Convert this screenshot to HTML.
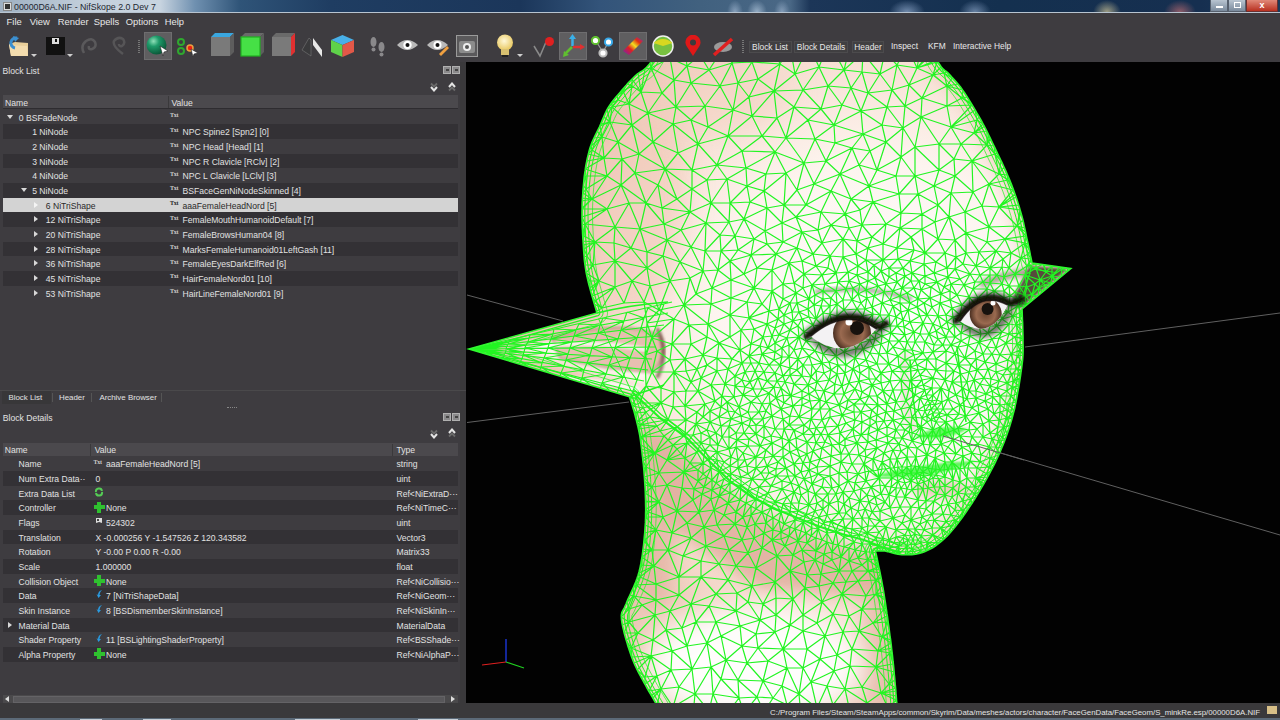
<!DOCTYPE html>
<html><head><meta charset="utf-8"><style>
*{margin:0;padding:0;box-sizing:border-box}
html,body{width:1280px;height:720px;overflow:hidden;background:#3e3c40;font-family:"Liberation Sans",sans-serif;}
.a{position:absolute}
.t{position:absolute;font-size:8.6px;line-height:14.6px;color:#e2e2e2;white-space:nowrap;margin-top:1px}
.row{position:absolute;height:14.67px;background:#3e3c40}
.row.alt{background:#333135}
.row.sel{background:#d3d3d3}
.ti{position:absolute;font-size:6px;line-height:7px;font-weight:bold;letter-spacing:-0.3px;font-family:"Liberation Serif",serif}
.arr-d{position:absolute;width:0;height:0;border-left:3.5px solid transparent;border-right:3.5px solid transparent;border-top:4px solid #d8d8d8}
.arr-r{position:absolute;width:0;height:0;border-top:3.5px solid transparent;border-bottom:3.5px solid transparent;border-left:4px solid #d8d8d8}
.tb{position:absolute;height:12px;font-size:8.4px;line-height:10px;color:#e8e8e8;text-align:center;white-space:nowrap}
.menu{position:absolute;top:14px;font-size:9.4px;line-height:15px;color:#e8e8e8}
.hdr{position:absolute;left:3px;width:455px;height:14px;background:#4b494d;border-bottom:1px solid #2e2c30}
</style></head><body>
<div class="a" style="left:0;top:0;width:1280px;height:13px;background:linear-gradient(90deg,#9eb0c2 0px,#c4d0dc 90px,#c8d4e0 160px,#6f90b0 195px,#2f5478 240px,#1f3d62 330px,#1b365a 520px,#33547a 600px,#41617f 700px,#4a6886 790px,#1c3658 810px,#14304f 1000px,#162f50 1200px,#1a3a5a 1280px)"></div>
<div class="a" style="left:727px;top:0;width:16px;height:12px;background:radial-gradient(ellipse at 50% 100%,rgba(190,210,235,.55),rgba(0,0,0,0) 70%)"></div>
<div class="a" style="left:747px;top:0;width:20px;height:12px;background:radial-gradient(ellipse at 50% 100%,rgba(200,220,240,.6),rgba(0,0,0,0) 70%)"></div>
<div class="a" style="left:774px;top:0;width:16px;height:12px;background:radial-gradient(ellipse at 50% 100%,rgba(190,210,235,.5),rgba(0,0,0,0) 70%)"></div>
<div class="a" style="left:889px;top:0;width:36px;height:12px;background:radial-gradient(ellipse at 50% 100%,rgba(170,195,230,.6),rgba(0,0,0,0) 70%)"></div>
<div class="a" style="left:959px;top:0;width:32px;height:12px;background:radial-gradient(ellipse at 50% 100%,rgba(170,195,230,.55),rgba(0,0,0,0) 70%)"></div>
<div class="a" style="left:1093px;top:0;width:28px;height:12px;background:radial-gradient(ellipse at 50% 100%,rgba(230,215,160,.65),rgba(0,0,0,0) 70%)"></div>
<div class="a" style="left:1164px;top:0;width:32px;height:12px;background:radial-gradient(ellipse at 50% 100%,rgba(220,120,120,.6),rgba(0,0,0,0) 70%)"></div>

<div class="a" style="left:3px;top:2px;width:9px;height:9px;background:#ddd;border:1px solid #888"><div class="a" style="left:1px;top:1px;width:5px;height:5px;background:#333"></div></div>
<div class="a" style="left:14px;top:1px;font-size:8.8px;line-height:13px;color:#1e2630;white-space:nowrap">00000D6A.NIF - NifSkope 2.0 Dev 7</div>
<div class="a" style="left:1210px;top:0;width:18px;height:12px;background:linear-gradient(#b8c4d0,#7a8a9c);border:1px solid #56606e;border-top:none"><div class="a" style="left:5px;top:6px;width:7px;height:2px;background:#fff"></div></div>
<div class="a" style="left:1228px;top:0;width:18px;height:12px;background:linear-gradient(#b8c4d0,#7a8a9c);border:1px solid #56606e;border-top:none"><div class="a" style="left:5px;top:2px;width:7px;height:6px;border:1.5px solid #fff"></div></div>
<div class="a" style="left:1246px;top:0;width:32px;height:12px;background:linear-gradient(#e08878,#b83020);border:1px solid #6a3030;border-top:none;color:#fff;font-size:9px;line-height:10px;text-align:center;font-weight:bold">x</div>
<div class="a" style="left:0;top:12px;width:1280px;height:1px;background:#b8c4d0"></div>

<div class="menu" style="left:6.6px">File</div>
<div class="menu" style="left:29.7px">View</div>
<div class="menu" style="left:57.8px">Render</div>
<div class="menu" style="left:93.7px">Spells</div>
<div class="menu" style="left:125.8px">Options</div>
<div class="menu" style="left:164.8px">Help</div>
<svg style="position:absolute;left:7px;top:36px" width="23" height="21" viewBox="0 0 23 21"><path d="M2 8 L8 6 L21 7 L21 20 L4 20 Z" fill="#e9cf9a"/><path d="M2 9 L20 10 L21 20 L4 20Z" fill="#f3dcae"/><path d="M10 2 A5 5 0 1 0 8 12" stroke="#3b8fd0" stroke-width="3" fill="none"/><path d="M6 0 L12 2 L8 6Z" fill="#3b8fd0"/></svg>
<div style="position:absolute;left:31px;top:54px;width:0;height:0;border-left:3px solid transparent;border-right:3px solid transparent;border-top:3px solid #cfcfcf"></div>
<svg style="position:absolute;left:46px;top:37px" width="19" height="18" viewBox="0 0 19 18"><rect x="0" y="0" width="19" height="18" fill="#111"/><rect x="6" y="1" width="7" height="6" fill="#ddd"/><rect x="9" y="2" width="2" height="3" fill="#111"/></svg>
<div style="position:absolute;left:67px;top:54px;width:0;height:0;border-left:3px solid transparent;border-right:3px solid transparent;border-top:3px solid #cfcfcf"></div>
<svg style="position:absolute;left:80px;top:36px" width="18" height="20" viewBox="0 0 18 20"><path d="M4 17 Q0 10 6 5 Q12 1 15 6 Q17 11 12 13 Q8 14 9 10" stroke="#5a595b" stroke-width="2.5" fill="none"/></svg>
<svg style="position:absolute;left:110px;top:36px" width="17" height="20" viewBox="0 0 17 20"><path d="M13 18 Q2 10 4 5 Q8 0 13 3 Q16 7 12 10 Q9 11 9 8" stroke="#565557" stroke-width="2.5" fill="none"/></svg>
<div style="position:absolute;left:138px;top:40px;width:2px;height:14px;background:repeating-linear-gradient(#777 0 1px,transparent 1px 2px)"></div>
<div style="position:absolute;left:144px;top:32px;width:28px;height:28px;background:#5f5e60;border:1px solid #6e6d6f;box-sizing:border-box"></div>
<svg style="position:absolute;left:146px;top:35px" width="24" height="22" viewBox="0 0 24 22"><defs><radialGradient id="gs" cx="0.35" cy="0.3" r="0.7"><stop offset="0" stop-color="#8fe0b8"/><stop offset="0.4" stop-color="#1e9b6a"/><stop offset="1" stop-color="#0b5a3a"/></radialGradient></defs><ellipse cx="10.5" cy="10" rx="10" ry="9.5" fill="url(#gs)"/><path d="M14 11 L22 16 L18 17 L17 21Z" fill="#fff" stroke="#222" stroke-width="0.6"/></svg>
<svg style="position:absolute;left:177px;top:38px" width="23" height="19" viewBox="0 0 23 19"><circle cx="4" cy="4" r="3" fill="none" stroke="#2fa82f" stroke-width="2"/><circle cx="4" cy="13" r="3" fill="none" stroke="#2fa82f" stroke-width="2"/><circle cx="13" cy="10" r="3" fill="#e21" stroke="#e8a040" stroke-width="1.5"/><path d="M14 11 L21 15 L17 16 L16 19Z" fill="#fff" stroke="#222" stroke-width="0.6"/></svg>
<svg style="position:absolute;left:210px;top:33px" width="25" height="24" viewBox="0 0 25 24"><path d="M1 4 L5 0 L24 0 L20 4Z" fill="#3aa7e0"/><path d="M20 4 L24 0 L24 19 L20 23Z" fill="#5d5d5d"/><rect x="1" y="4" width="19" height="19" fill="#7a7a7a" /></svg>
<svg style="position:absolute;left:240px;top:33px" width="25" height="24" viewBox="0 0 25 24"><path d="M1 4 L5 0 L24 0 L20 4Z" fill="#6a6a6a"/><path d="M20 4 L24 0 L24 19 L20 23Z" fill="#5d5d5d"/><rect x="1" y="4" width="19" height="19" fill="#46e046" stroke="#20b020" stroke-width="1.2"/></svg>
<svg style="position:absolute;left:271px;top:33px" width="25" height="24" viewBox="0 0 25 24"><path d="M1 4 L5 0 L24 0 L20 4Z" fill="#6a6a6a"/><path d="M20 4 L24 0 L24 19 L20 23Z" fill="#e03030"/><rect x="1" y="4" width="19" height="19" fill="#7a7a7a" /></svg>
<svg style="position:absolute;left:301px;top:36px" width="22" height="22" viewBox="0 0 22 22"><path d="M1 14 L8 2 L10 4 L10 20 Z" fill="#3a3a3c" stroke="#777" stroke-width="0.6"/><path d="M12 2 L21 14 L21 21 L12 9Z" fill="#e8e8e8"/></svg>
<svg style="position:absolute;left:331px;top:35px" width="23" height="22" viewBox="0 0 23 22"><path d="M11.5 0 L23 5 L11.5 10 L0 5Z" fill="#48b0e8"/><path d="M0 5 L11.5 10 L11.5 22 L0 17Z" fill="#5fd24a"/><path d="M23 5 L11.5 10 L11.5 22 L23 17Z" fill="#e25848"/></svg>
<svg style="position:absolute;left:369px;top:36px" width="18" height="21" viewBox="0 0 18 21"><ellipse cx="4.5" cy="6" rx="3" ry="5" fill="#8a898b"/><ellipse cx="4.5" cy="13.5" rx="2" ry="2" fill="#8a898b"/><ellipse cx="12.5" cy="11" rx="3" ry="5" fill="#8a898b"/><ellipse cx="12.5" cy="18.5" rx="2" ry="2" fill="#8a898b"/></svg>
<svg style="position:absolute;left:397px;top:38px" width="21" height="14" viewBox="0 0 21 14"><path d="M0 7 Q10 -3 21 7 Q10 17 0 7Z" fill="#b9b9b9"/><circle cx="10.5" cy="7" r="4.2" fill="#fff"/><circle cx="10.5" cy="7" r="2" fill="#111"/></svg>
<svg style="position:absolute;left:427px;top:38px" width="22" height="18" viewBox="0 0 22 18"><path d="M0 7 Q10 -3 21 7 Q10 17 0 7Z" fill="#b9b9b9"/><circle cx="10.5" cy="7" r="4" fill="#fff"/><circle cx="10.5" cy="7" r="2" fill="#111"/><path d="M12 16 L20 8 L22 10 L14 18Z" fill="#f0a040"/></svg>
<svg style="position:absolute;left:456px;top:35px" width="22" height="22" viewBox="0 0 22 22"><rect x="0.5" y="0.5" width="21" height="21" fill="#5a595b" stroke="#9a9a9a"/><rect x="3" y="6" width="16" height="12" rx="2" fill="#8c8c8c"/><circle cx="11" cy="12" r="4" fill="#eee"/><circle cx="11" cy="12" r="2" fill="#555"/></svg>
<svg style="position:absolute;left:496px;top:34px" width="18" height="24" viewBox="0 0 18 24"><defs><radialGradient id="lb" cx="0.45" cy="0.4" r="0.6"><stop offset="0" stop-color="#fff8d8"/><stop offset="1" stop-color="#e8c860"/></radialGradient></defs><circle cx="9" cy="8.5" r="8" fill="url(#lb)"/><rect x="5" y="15" width="8" height="6" fill="#d8c070"/><rect x="6" y="21" width="6" height="2" fill="#222"/></svg>
<div style="position:absolute;left:517px;top:54px;width:0;height:0;border-left:3px solid transparent;border-right:3px solid transparent;border-top:3px solid #cfcfcf"></div>
<svg style="position:absolute;left:532px;top:36px" width="23" height="22" viewBox="0 0 23 22"><path d="M2 10 L8 20 L14 6" stroke="#8a8a8a" stroke-width="1.5" fill="none"/><circle cx="17.5" cy="5.5" r="4.5" fill="#e02020"/></svg>
<div style="position:absolute;left:559px;top:32px;width:28px;height:28px;background:#5f5e60;border:1px solid #6e6d6f;box-sizing:border-box"></div>
<svg style="position:absolute;left:561px;top:34px" width="24" height="24" viewBox="0 0 24 24"><path d="M11.5 12 L11.5 3" stroke="#3ab0e8" stroke-width="2.5"/><path d="M8 5 L11.5 0 L15 5Z" fill="#3ab0e8"/><path d="M12 13 L20 13" stroke="#e03030" stroke-width="2.5"/><path d="M19 10 L24 13 L19 16Z" fill="#e03030"/><path d="M11 13 L5 19" stroke="#60c030" stroke-width="2.5"/><path d="M3 17 L2 23 L8 21Z" fill="#60c030"/></svg>
<svg style="position:absolute;left:591px;top:36px" width="22" height="22" viewBox="0 0 22 22"><path d="M4.5 4.5 L12 16 L17.5 6" stroke="#999" stroke-width="1.2" fill="none"/><circle cx="4.5" cy="4.5" r="3.6" fill="#fff" stroke="#60c030" stroke-width="2"/><circle cx="17.5" cy="6" r="3.6" fill="#fff" stroke="#38a8e8" stroke-width="2"/><circle cx="12" cy="17" r="3.6" fill="#fff" stroke="#bbb" stroke-width="2"/></svg>
<div style="position:absolute;left:619px;top:32px;width:28px;height:28px;background:#5f5e60;border:1px solid #6e6d6f;box-sizing:border-box"></div>
<svg style="position:absolute;left:621px;top:35px" width="24" height="22" viewBox="0 0 24 22"><defs><linearGradient id="rb" x1="0" y1="1" x2="1" y2="0"><stop offset="0" stop-color="#7020c0"/><stop offset="0.35" stop-color="#e02020"/><stop offset="0.55" stop-color="#f0e020"/><stop offset="0.75" stop-color="#e03010"/><stop offset="1" stop-color="#8020c0"/></linearGradient></defs><path d="M2 16 L16 2 L22 6 L8 20Z" fill="url(#rb)"/></svg>
<svg style="position:absolute;left:652px;top:35px" width="22" height="22" viewBox="0 0 22 22"><circle cx="11" cy="11" r="10" fill="#78c040" stroke="#f0f0f0" stroke-width="1.5"/><path d="M1.5 8 Q11 0 20.5 8 L11 11Z" fill="#d8d820"/></svg>
<svg style="position:absolute;left:684px;top:35px" width="18" height="21" viewBox="0 0 18 21"><path d="M9 21 L2.5 11 A7.5 7.5 0 1 1 15.5 11Z" fill="#e01818"/><circle cx="9" cy="7.5" r="3" fill="#3c3b3d"/></svg>
<svg style="position:absolute;left:712px;top:36px" width="23" height="21" viewBox="0 0 23 21"><ellipse cx="11" cy="11" rx="9" ry="5" fill="#9a9a9a"/><path d="M2 19 L20 3" stroke="#e02020" stroke-width="3.5"/></svg>
<div style="position:absolute;left:742px;top:40px;width:2px;height:14px;background:repeating-linear-gradient(#777 0 1px,transparent 1px 2px)"></div>
<div class="tb" style="left:748.5px;top:40.5px;width:43px;border:1px solid #4c4b4d;background:#403f41;">Block List</div>
<div class="tb" style="left:794px;top:40.5px;width:54px;border:1px solid #4c4b4d;background:#403f41;">Block Details</div>
<div class="tb" style="left:852px;top:40.5px;width:32px;border:1px solid #4c4b4d;background:#403f41;">Header</div>
<div class="tb" style="left:891px;top:40.5px;width:26px;">Inspect</div>
<div class="tb" style="left:928px;top:40.5px;width:16px;">KFM</div>
<div class="tb" style="left:953px;top:40.5px;width:57px;">Interactive Help</div>
<div class="a" style="left:0;top:62px;width:466px;height:641px;background:#3e3c40"></div>
<div class="t" style="left:2.5px;top:62.5px">Block List</div>
<div class="a" style="left:443px;top:66px;width:8px;height:7.5px;background:#8a898b;border:1px solid #b0b0b0"><div class="a" style="left:1.5px;top:1.5px;width:3px;height:2.5px;border:1px solid #444"></div></div>
<div class="a" style="left:452px;top:66px;width:8px;height:7.5px;background:#8a898b;border:1px solid #b0b0b0"><div class="a" style="left:1.5px;top:1.5px;width:3px;height:2.5px;border:1px solid #444"></div></div>
<svg class="a" style="left:430px;top:82px" width="8" height="10" viewBox="0 0 8 10"><path d="M1 1.5 L4 4.5 L7 1.5" stroke="#6a6a6a" stroke-width="1.8" fill="none"/><path d="M1 5 L4 8.5 L7 5" stroke="#e4e4e4" stroke-width="2" fill="none"/></svg>
<svg class="a" style="left:448px;top:81.5px" width="8" height="10" viewBox="0 0 8 10"><path d="M1 8.5 L4 5.5 L7 8.5" stroke="#6a6a6a" stroke-width="1.8" fill="none"/><path d="M1 5 L4 1.5 L7 5" stroke="#e4e4e4" stroke-width="2" fill="none"/></svg>
<div class="hdr" style="top:95px"></div>
<div class="t" style="left:5px;top:95px">Name</div>
<div class="a" style="left:168px;top:96px;width:1px;height:12px;background:#3a393b"></div>
<div class="t" style="left:171.5px;top:95px">Value</div>
<div class="row" style="top:109.70px;left:3px;width:455px"></div>
<div class="arr-d" style="left:6.5px;top:115.2px"></div>
<div class="t" style="left:18.8px;top:109.70px;">0 BSFadeNode</div>
<div class="ti" style="left:170px;top:112.2px;color:#cfcfcf">Txt</div>
<div class="row alt" style="top:124.35px;left:3px;width:455px"></div>
<div class="t" style="left:32.2px;top:124.35px;">1 NiNode</div>
<div class="ti" style="left:170px;top:126.85000000000001px;color:#cfcfcf">Txt</div>
<div class="t" style="left:182.5px;top:124.35px;">NPC Spine2 [Spn2] [0]</div>
<div class="row" style="top:139.00px;left:3px;width:455px"></div>
<div class="t" style="left:32.2px;top:139.00px;">2 NiNode</div>
<div class="ti" style="left:170px;top:141.5px;color:#cfcfcf">Txt</div>
<div class="t" style="left:182.5px;top:139.00px;">NPC Head [Head] [1]</div>
<div class="row alt" style="top:153.65px;left:3px;width:455px"></div>
<div class="t" style="left:32.2px;top:153.65px;">3 NiNode</div>
<div class="ti" style="left:170px;top:156.15px;color:#cfcfcf">Txt</div>
<div class="t" style="left:182.5px;top:153.65px;">NPC R Clavicle [RClv] [2]</div>
<div class="row" style="top:168.30px;left:3px;width:455px"></div>
<div class="t" style="left:32.2px;top:168.30px;">4 NiNode</div>
<div class="ti" style="left:170px;top:170.8px;color:#cfcfcf">Txt</div>
<div class="t" style="left:182.5px;top:168.30px;">NPC L Clavicle [LClv] [3]</div>
<div class="row alt" style="top:182.95px;left:3px;width:455px"></div>
<div class="arr-d" style="left:21.0px;top:188.4px"></div>
<div class="t" style="left:32.2px;top:182.95px;">5 NiNode</div>
<div class="ti" style="left:170px;top:185.45px;color:#cfcfcf">Txt</div>
<div class="t" style="left:182.5px;top:182.95px;">BSFaceGenNiNodeSkinned [4]</div>
<div class="row sel" style="top:197.60px;left:3px;width:455px"></div>
<div class="arr-r" style="left:33.5px;top:201.6px;border-left-color:#f4f4f4"></div>
<div class="t" style="left:45.8px;top:197.60px;color:#2a2a2a;">6 NiTriShape</div>
<div class="ti" style="left:170px;top:200.10000000000002px;color:#222">Txt</div>
<div class="t" style="left:182.5px;top:197.60px;color:#2a2a2a;">aaaFemaleHeadNord [5]</div>
<div class="row alt" style="top:212.25px;left:3px;width:455px"></div>
<div class="arr-r" style="left:33.5px;top:216.2px;border-left-color:#d8d8d8"></div>
<div class="t" style="left:45.8px;top:212.25px;">12 NiTriShape</div>
<div class="ti" style="left:170px;top:214.75px;color:#cfcfcf">Txt</div>
<div class="t" style="left:182.5px;top:212.25px;">FemaleMouthHumanoidDefault [7]</div>
<div class="row" style="top:226.90px;left:3px;width:455px"></div>
<div class="arr-r" style="left:33.5px;top:230.9px;border-left-color:#d8d8d8"></div>
<div class="t" style="left:45.8px;top:226.90px;">20 NiTriShape</div>
<div class="ti" style="left:170px;top:229.4px;color:#cfcfcf">Txt</div>
<div class="t" style="left:182.5px;top:226.90px;">FemaleBrowsHuman04 [8]</div>
<div class="row alt" style="top:241.55px;left:3px;width:455px"></div>
<div class="arr-r" style="left:33.5px;top:245.6px;border-left-color:#d8d8d8"></div>
<div class="t" style="left:45.8px;top:241.55px;">28 NiTriShape</div>
<div class="ti" style="left:170px;top:244.05px;color:#cfcfcf">Txt</div>
<div class="t" style="left:182.5px;top:241.55px;">MarksFemaleHumanoid01LeftGash [11]</div>
<div class="row" style="top:256.20px;left:3px;width:455px"></div>
<div class="arr-r" style="left:33.5px;top:260.2px;border-left-color:#d8d8d8"></div>
<div class="t" style="left:45.8px;top:256.20px;">36 NiTriShape</div>
<div class="ti" style="left:170px;top:258.7px;color:#cfcfcf">Txt</div>
<div class="t" style="left:182.5px;top:256.20px;">FemaleEyesDarkElfRed [6]</div>
<div class="row alt" style="top:270.85px;left:3px;width:455px"></div>
<div class="arr-r" style="left:33.5px;top:274.9px;border-left-color:#d8d8d8"></div>
<div class="t" style="left:45.8px;top:270.85px;">45 NiTriShape</div>
<div class="ti" style="left:170px;top:273.35px;color:#cfcfcf">Txt</div>
<div class="t" style="left:182.5px;top:270.85px;">HairFemaleNord01 [10]</div>
<div class="row" style="top:285.50px;left:3px;width:455px"></div>
<div class="arr-r" style="left:33.5px;top:289.5px;border-left-color:#d8d8d8"></div>
<div class="t" style="left:45.8px;top:285.50px;">53 NiTriShape</div>
<div class="ti" style="left:170px;top:288.0px;color:#cfcfcf">Txt</div>
<div class="t" style="left:182.5px;top:285.50px;">HairLineFemaleNord01 [9]</div>
<div class="a" style="left:460px;top:62px;width:6px;height:641px;background:#3a393b"></div>
<div class="a" style="left:0;top:390px;width:466px;height:1px;background:#4a494b"></div>
<div class="a" style="left:2px;top:391px;width:49px;height:13px;background:#383739"></div>
<div class="t" style="left:8.4px;top:389.5px;font-size:7.9px">Block List</div>
<div class="a" style="left:51.5px;top:393px;width:1px;height:9px;background:#555"></div>
<div class="t" style="left:59px;top:389.5px;font-size:7.9px">Header</div>
<div class="a" style="left:91px;top:393px;width:1px;height:9px;background:#555"></div>
<div class="t" style="left:99.4px;top:389.5px;font-size:7.9px">Archive Browser</div>
<div class="a" style="left:161px;top:393px;width:1px;height:9px;background:#555"></div>
<div class="a" style="left:227px;top:407px;width:10px;height:1px;border-top:1px dotted #888"></div>
<div class="t" style="left:2.8px;top:409.5px">Block Details</div>
<div class="a" style="left:443px;top:413px;width:8px;height:7.5px;background:#8a898b;border:1px solid #b0b0b0"><div class="a" style="left:1.5px;top:1.5px;width:3px;height:2.5px;border:1px solid #444"></div></div>
<div class="a" style="left:452px;top:413px;width:8px;height:7.5px;background:#8a898b;border:1px solid #b0b0b0"><div class="a" style="left:1.5px;top:1.5px;width:3px;height:2.5px;border:1px solid #444"></div></div>
<svg class="a" style="left:430px;top:429px" width="8" height="10" viewBox="0 0 8 10"><path d="M1 1.5 L4 4.5 L7 1.5" stroke="#6a6a6a" stroke-width="1.8" fill="none"/><path d="M1 5 L4 8.5 L7 5" stroke="#e4e4e4" stroke-width="2" fill="none"/></svg>
<svg class="a" style="left:448px;top:428px" width="8" height="10" viewBox="0 0 8 10"><path d="M1 8.5 L4 5.5 L7 8.5" stroke="#6a6a6a" stroke-width="1.8" fill="none"/><path d="M1 5 L4 1.5 L7 5" stroke="#e4e4e4" stroke-width="2" fill="none"/></svg>
<div class="hdr" style="top:442.7px"></div>
<div class="t" style="left:4.7px;top:442.2px">Name</div>
<div class="a" style="left:90px;top:443.5px;width:1px;height:12px;background:#3a393b"></div>
<div class="t" style="left:94.7px;top:442.2px">Value</div>
<div class="a" style="left:392px;top:443.5px;width:1px;height:12px;background:#3a393b"></div>
<div class="t" style="left:396.5px;top:442.2px">Type</div>
<div class="row" style="top:456.40px;left:3px;width:455px"></div>
<div class="t" style="left:18.5px;top:456.40px">Name</div>
<div class="ti" style="left:93.5px;top:458.9px;color:#cfcfcf">Txt</div>
<div class="t" style="left:106px;top:456.40px">aaaFemaleHeadNord [5]</div>
<div class="t" style="left:396.5px;top:456.40px">string</div>
<div class="row alt" style="top:471.05px;left:3px;width:455px"></div>
<div class="t" style="left:18.5px;top:471.05px">Num Extra Data··</div>
<div class="t" style="left:95.5px;top:471.05px">0</div>
<div class="t" style="left:396.5px;top:471.05px">uint</div>
<div class="row" style="top:485.70px;left:3px;width:455px"></div>
<div class="t" style="left:18.5px;top:485.70px">Extra Data List</div>
<svg style="position:absolute;left:94px;top:486.7px" width="10" height="10" viewBox="0 0 10 10"><path d="M2 5 A3 3 0 0 1 8 4 M8 5 A3 3 0 0 1 2 6" stroke="#5c5" stroke-width="2" fill="none"/></svg>
<div class="t" style="left:396.5px;top:485.70px">Ref&lt;NiExtraD···</div>
<div class="row alt" style="top:500.35px;left:3px;width:455px"></div>
<div class="t" style="left:18.5px;top:500.35px">Controller</div>
<div style="position:absolute;left:93.5px;top:501.84999999999997px;width:10px;height:10px"><div style="position:absolute;left:3.5px;top:0;width:4px;height:11px;background:#2fc12f"></div><div style="position:absolute;left:0;top:3.5px;width:11px;height:4px;background:#2fc12f"></div></div>
<div class="t" style="left:106px;top:500.35px">None</div>
<div class="t" style="left:396.5px;top:500.35px">Ref&lt;NiTimeC···</div>
<div class="row" style="top:515.00px;left:3px;width:455px"></div>
<div class="t" style="left:18.5px;top:515.00px">Flags</div>
<svg style="position:absolute;left:95px;top:516.5px" width="9" height="9" viewBox="0 0 9 9"><path d="M1 1 L7 1 L7 6 L4 5 L1 6Z" fill="#ddd"/><rect x="2" y="2" width="2" height="2" fill="#444"/></svg>
<div class="t" style="left:106px;top:515.00px">524302</div>
<div class="t" style="left:396.5px;top:515.00px">uint</div>
<div class="row alt" style="top:529.65px;left:3px;width:455px"></div>
<div class="t" style="left:18.5px;top:529.65px">Translation</div>
<div class="t" style="left:95.5px;top:529.65px">X -0.000256 Y -1.547526 Z 120.343582</div>
<div class="t" style="left:396.5px;top:529.65px">Vector3</div>
<div class="row" style="top:544.30px;left:3px;width:455px"></div>
<div class="t" style="left:18.5px;top:544.30px">Rotation</div>
<div class="t" style="left:95.5px;top:544.30px">Y -0.00 P 0.00 R -0.00</div>
<div class="t" style="left:396.5px;top:544.30px">Matrix33</div>
<div class="row alt" style="top:558.95px;left:3px;width:455px"></div>
<div class="t" style="left:18.5px;top:558.95px">Scale</div>
<div class="t" style="left:95.5px;top:558.95px">1.000000</div>
<div class="t" style="left:396.5px;top:558.95px">float</div>
<div class="row" style="top:573.60px;left:3px;width:455px"></div>
<div class="t" style="left:18.5px;top:573.60px">Collision Object</div>
<div style="position:absolute;left:93.5px;top:575.1px;width:10px;height:10px"><div style="position:absolute;left:3.5px;top:0;width:4px;height:11px;background:#2fc12f"></div><div style="position:absolute;left:0;top:3.5px;width:11px;height:4px;background:#2fc12f"></div></div>
<div class="t" style="left:106px;top:573.60px">None</div>
<div class="t" style="left:396.5px;top:573.60px">Ref&lt;NiCollisio···</div>
<div class="row alt" style="top:588.25px;left:3px;width:455px"></div>
<div class="t" style="left:18.5px;top:588.25px">Data</div>
<svg style="position:absolute;left:95px;top:589.25px" width="10" height="10" viewBox="0 0 10 10"><path d="M7 1 Q3 2 3 6 L1.5 5 L3.5 9 L6 6 L4.5 6 Q4.5 3 7 1Z" fill="#2a9adf"/></svg>
<div class="t" style="left:106px;top:588.25px">7 [NiTriShapeData]</div>
<div class="t" style="left:396.5px;top:588.25px">Ref&lt;NiGeom···</div>
<div class="row" style="top:602.90px;left:3px;width:455px"></div>
<div class="t" style="left:18.5px;top:602.90px">Skin Instance</div>
<svg style="position:absolute;left:95px;top:603.9px" width="10" height="10" viewBox="0 0 10 10"><path d="M7 1 Q3 2 3 6 L1.5 5 L3.5 9 L6 6 L4.5 6 Q4.5 3 7 1Z" fill="#2a9adf"/></svg>
<div class="t" style="left:106px;top:602.90px">8 [BSDismemberSkinInstance]</div>
<div class="t" style="left:396.5px;top:602.90px">Ref&lt;NiSkinIn···</div>
<div class="row alt" style="top:617.55px;left:3px;width:455px"></div>
<div class="arr-r" style="left:8px;top:621.5px"></div>
<div class="t" style="left:18.5px;top:617.55px">Material Data</div>
<div class="t" style="left:396.5px;top:617.55px">MaterialData</div>
<div class="row" style="top:632.20px;left:3px;width:455px"></div>
<div class="t" style="left:18.5px;top:632.20px">Shader Property</div>
<svg style="position:absolute;left:95px;top:633.2px" width="10" height="10" viewBox="0 0 10 10"><path d="M7 1 Q3 2 3 6 L1.5 5 L3.5 9 L6 6 L4.5 6 Q4.5 3 7 1Z" fill="#2a9adf"/></svg>
<div class="t" style="left:106px;top:632.20px">11 [BSLightingShaderProperty]</div>
<div class="t" style="left:396.5px;top:632.20px">Ref&lt;BSShade···</div>
<div class="row alt" style="top:646.85px;left:3px;width:455px"></div>
<div class="t" style="left:18.5px;top:646.85px">Alpha Property</div>
<div style="position:absolute;left:93.5px;top:648.35px;width:10px;height:10px"><div style="position:absolute;left:3.5px;top:0;width:4px;height:11px;background:#2fc12f"></div><div style="position:absolute;left:0;top:3.5px;width:11px;height:4px;background:#2fc12f"></div></div>
<div class="t" style="left:106px;top:646.85px">None</div>
<div class="t" style="left:396.5px;top:646.85px">Ref&lt;NiAlphaP···</div>
<div class="a" style="left:3px;top:695px;width:455px;height:9px;background:#4a494b"></div>
<div class="a" style="left:13px;top:696px;width:432px;height:7px;background:#58575a;border:1px solid #646366"></div>
<div class="a" style="left:5px;top:696px;width:0;height:0;border-top:3.5px solid transparent;border-bottom:3.5px solid transparent;border-right:4px solid #ddd"></div>
<div class="a" style="left:451px;top:696px;width:0;height:0;border-top:3.5px solid transparent;border-bottom:3.5px solid transparent;border-left:4px solid #ddd"></div>
<svg style="position:absolute;left:466px;top:62px" width="814" height="641" viewBox="0 0 814 641">
<defs>
<radialGradient id="skin" gradientUnits="userSpaceOnUse" cx="414" cy="268" r="340">
<stop offset="0" stop-color="#ffffff"/><stop offset="0.5" stop-color="#fdf4ef"/><stop offset="0.85" stop-color="#f6dccf"/><stop offset="1" stop-color="#eecbbb"/></radialGradient>
<radialGradient id="iris" cx="0.5" cy="0.5" r="0.5"><stop offset="0" stop-color="#6a4530"/><stop offset="0.6" stop-color="#9a6a50"/><stop offset="1" stop-color="#4a2e20"/></radialGradient>
<filter id="bl12" x="-50%" y="-50%" width="200%" height="200%"><feGaussianBlur stdDeviation="14"/></filter>
<filter id="bl8" x="-30%" y="-30%" width="160%" height="160%"><feGaussianBlur stdDeviation="8"/></filter>
<filter id="bl4" x="-30%" y="-30%" width="160%" height="160%"><feGaussianBlur stdDeviation="4"/></filter>
<filter id="bl2" x="-30%" y="-30%" width="160%" height="160%"><feGaussianBlur stdDeviation="1.6"/></filter>
<filter id="bl1" x="-30%" y="-30%" width="160%" height="160%"><feGaussianBlur stdDeviation="0.8"/></filter>
<filter id="bl3" x="-30%" y="-50%" width="160%" height="200%"><feGaussianBlur stdDeviation="2.6"/></filter>
<clipPath id="hc"><polygon points="206.0,-42.0 205.2,-40.4 204.2,-38.3 203.1,-35.8 201.8,-33.1 200.4,-30.1 198.9,-26.9 197.3,-23.6 195.7,-20.2 194.0,-16.8 192.4,-13.5 190.8,-10.3 189.2,-7.3 187.7,-4.5 186.3,-2.1 185.0,0.0 182.4,3.4 180.0,6.0 177.7,7.8 175.5,9.3 173.4,10.6 171.2,12.1 169.0,14.0 166.8,16.2 164.6,18.5 162.3,20.9 160.2,23.3 158.0,25.7 156.0,28.1 154.0,30.4 151.8,33.0 149.6,35.5 147.6,38.1 145.6,40.6 143.8,43.2 142.0,46.0 140.4,48.9 138.9,52.0 137.5,55.2 136.2,58.4 134.9,61.6 133.5,64.8 132.0,67.8 130.5,70.8 129.0,73.8 127.6,76.8 126.2,79.9 125.0,83.0 123.9,86.2 123.0,89.4 122.2,92.6 121.4,95.9 120.7,99.4 120.0,103.0 119.5,105.9 119.1,108.9 118.6,112.0 118.2,115.2 117.9,118.4 117.6,121.6 117.3,124.8 117.0,128.0 116.8,131.1 116.6,134.2 116.4,137.4 116.2,140.5 116.1,143.6 116.1,146.8 116.0,149.9 116.0,153.0 116.0,156.1 116.1,159.2 116.2,162.4 116.3,165.5 116.5,168.6 116.6,171.8 116.8,174.9 117.0,178.0 117.2,181.2 117.4,184.4 117.6,187.6 117.8,190.8 118.1,194.0 118.3,197.1 118.6,200.1 119.0,203.0 119.5,206.5 120.0,209.7 120.6,212.8 121.3,215.9 122.1,219.3 123.0,223.0 123.8,225.9 124.7,229.2 125.7,232.8 126.7,236.4 127.8,240.0 128.8,243.4 129.7,246.5 130.4,249.1 131.0,251.0 3.0,287.0 163.4,334.7 164.0,336.6 164.9,339.2 165.9,342.3 166.9,345.7 168.0,349.3 169.0,353.0 169.7,355.7 170.4,358.4 171.1,361.2 171.8,364.1 172.5,367.2 173.2,370.6 173.9,374.3 174.5,378.5 174.8,381.0 175.2,383.6 175.5,386.4 175.9,389.3 176.2,392.3 176.6,395.4 176.9,398.6 177.3,401.8 177.6,405.0 177.9,408.3 178.1,411.5 178.4,414.7 178.6,417.9 178.8,421.0 179.0,424.0 179.2,427.1 179.3,430.3 179.4,433.4 179.5,436.5 179.6,439.5 179.6,442.6 179.7,445.7 179.7,448.7 179.6,451.7 179.6,454.8 179.5,457.8 179.4,460.9 179.2,463.9 179.0,467.0 178.8,470.1 178.5,473.2 178.2,476.4 177.9,479.6 177.6,482.8 177.2,486.0 176.8,489.2 176.4,492.3 175.9,495.5 175.4,498.5 174.9,501.5 174.3,504.4 173.7,507.3 173.0,510.0 172.0,513.4 170.9,516.7 169.7,520.0 168.4,523.1 167.1,526.2 165.7,529.2 164.4,532.0 163.1,534.8 161.9,537.3 160.9,539.8 160.0,542.0 158.3,545.8 156.9,548.3 155.8,550.4 155.3,553.2 155.5,557.5 155.8,559.7 156.2,562.2 156.8,565.0 157.5,567.9 158.2,571.0 159.1,574.2 160.0,577.5 161.0,580.8 161.9,584.0 163.0,587.2 164.0,590.3 165.0,593.3 166.0,596.0 167.2,599.0 168.4,601.9 169.7,604.7 171.0,607.5 172.3,610.1 173.7,612.7 175.1,615.3 176.6,617.9 178.0,620.5 179.5,623.2 181.0,626.0 182.4,628.6 183.9,631.1 185.4,633.7 186.9,636.2 188.4,638.8 190.0,641.4 191.6,644.0 193.1,646.7 194.6,649.4 196.1,652.2 197.6,655.0 199.0,658.0 200.2,660.7 201.4,663.6 202.7,666.8 203.9,670.0 205.2,673.3 206.4,676.7 207.6,680.0 208.8,683.2 209.9,686.3 210.9,689.3 211.8,691.9 212.7,694.3 213.4,696.4 214.0,698.0 434.0,698.0 433.9,696.3 433.8,694.3 433.7,692.0 433.6,689.4 433.5,686.5 433.4,683.5 433.3,680.2 433.1,676.8 432.9,673.2 432.7,669.6 432.5,665.8 432.3,661.9 432.0,658.0 431.8,655.4 431.6,652.7 431.4,649.9 431.2,647.0 431.0,644.1 430.8,641.1 430.5,638.0 430.3,634.9 430.0,631.7 429.8,628.5 429.5,625.3 429.2,622.0 428.9,618.7 428.6,615.4 428.3,612.2 428.0,608.9 427.7,605.6 427.4,602.4 427.0,599.2 426.7,596.0 426.4,593.0 426.0,589.9 425.6,586.8 425.3,583.6 424.9,580.4 424.5,577.2 424.0,574.0 423.6,570.8 423.2,567.6 422.8,564.4 422.3,561.2 421.9,558.1 421.5,554.9 421.0,551.9 420.6,548.8 420.1,545.8 419.7,542.9 419.3,540.1 418.8,537.3 418.4,534.6 418.0,532.0 417.4,528.2 416.7,524.4 416.0,520.6 415.3,516.9 414.6,513.3 413.9,509.8 413.2,506.5 412.5,503.3 411.9,500.3 411.3,497.5 410.8,495.0 410.3,492.7 409.8,490.7 409.5,489.0 411.7,488.9 414.9,488.7 419.0,489.0 421.8,489.6 425.0,490.5 428.4,491.4 432.0,492.2 435.7,492.6 438.9,492.7 442.3,492.7 445.9,492.6 449.4,492.2 453.0,491.5 456.5,490.5 459.1,489.5 461.6,488.4 464.2,487.1 466.7,485.7 469.3,484.1 471.8,482.2 474.4,480.2 477.0,478.0 479.1,476.0 481.2,473.9 483.3,471.7 485.4,469.3 487.5,466.8 489.6,464.2 491.7,461.5 493.8,458.7 495.9,455.9 498.0,453.0 499.6,450.7 501.3,448.3 502.9,445.9 504.6,443.4 506.3,440.8 507.9,438.2 509.6,435.6 511.2,432.9 512.9,430.2 514.4,427.6 516.0,424.9 517.5,422.3 519.0,419.7 520.6,416.9 522.1,414.1 523.6,411.4 525.0,408.6 526.5,405.9 527.9,403.1 529.3,400.3 530.6,397.5 531.9,394.7 533.2,391.8 534.5,388.9 535.7,386.0 536.9,383.1 538.1,380.1 539.2,377.2 540.3,374.2 541.4,371.3 542.4,368.3 543.4,365.2 544.4,362.1 545.3,359.0 546.2,355.7 547.1,352.4 548.0,349.0 548.7,346.2 549.3,343.2 550.0,340.0 550.6,336.8 551.2,333.6 551.8,330.2 552.4,326.9 553.0,323.6 553.5,320.3 554.0,317.1 554.5,314.0 554.9,311.0 555.3,308.2 555.7,305.5 556.0,303.0 556.5,298.9 556.8,295.4 557.0,292.4 557.1,289.6 557.1,286.9 557.1,284.2 557.0,281.3 557.0,278.0 557.0,275.0 556.9,271.7 556.8,268.2 556.7,264.5 556.6,260.9 556.4,257.5 556.3,254.2 556.2,251.3 556.1,248.9 556.0,247.0 604.8,206.6 566.0,201.0 565.6,199.0 565.1,196.4 564.4,193.2 563.7,189.5 562.9,185.6 562.0,181.5 561.4,178.9 560.8,176.1 560.2,173.2 559.6,170.1 558.9,167.0 558.2,163.8 557.5,160.5 556.7,157.3 555.9,154.1 555.0,151.0 554.1,147.9 553.2,144.8 552.2,141.7 551.2,138.6 550.2,135.5 549.1,132.4 548.0,129.3 546.9,126.2 545.7,123.1 544.5,120.0 543.4,117.2 542.2,114.5 541.0,111.7 539.8,108.9 538.5,106.2 537.3,103.5 536.0,100.7 534.7,98.0 533.3,95.2 532.0,92.5 530.7,89.7 529.4,86.9 528.1,84.1 526.7,81.3 525.4,78.6 524.1,75.8 522.7,73.0 521.3,70.2 519.9,67.4 518.5,64.6 517.0,61.8 515.5,59.0 513.9,56.2 512.3,53.3 510.5,50.3 508.8,47.3 507.0,44.3 505.2,41.4 503.5,38.6 501.7,35.8 500.1,33.2 498.5,30.8 497.0,28.6 494.5,25.1 492.2,22.2 490.1,19.7 488.1,17.5 486.0,15.3 484.0,13.0 481.7,10.7 479.5,9.0 477.3,7.2 474.9,4.4 472.0,0.0 470.9,-2.0 469.6,-4.5 468.2,-7.2 466.7,-10.2 465.2,-13.4 463.6,-16.7 462.0,-20.1 460.5,-23.5 458.9,-26.8 457.5,-30.0 456.1,-33.1 454.8,-35.8 453.7,-38.3 452.8,-40.4 452.0,-42.0"/></clipPath>
</defs>
<rect width="814" height="641" fill="#020202"/>
<path d="M1 233 L97 259 M1 360.5 L163 340 M559 285 L814 251 M477 374 L814 473" stroke="#606060" stroke-width="1" fill="none"/>
<polygon points="206.0,-42.0 205.2,-40.4 204.2,-38.3 203.1,-35.8 201.8,-33.1 200.4,-30.1 198.9,-26.9 197.3,-23.6 195.7,-20.2 194.0,-16.8 192.4,-13.5 190.8,-10.3 189.2,-7.3 187.7,-4.5 186.3,-2.1 185.0,0.0 182.4,3.4 180.0,6.0 177.7,7.8 175.5,9.3 173.4,10.6 171.2,12.1 169.0,14.0 166.8,16.2 164.6,18.5 162.3,20.9 160.2,23.3 158.0,25.7 156.0,28.1 154.0,30.4 151.8,33.0 149.6,35.5 147.6,38.1 145.6,40.6 143.8,43.2 142.0,46.0 140.4,48.9 138.9,52.0 137.5,55.2 136.2,58.4 134.9,61.6 133.5,64.8 132.0,67.8 130.5,70.8 129.0,73.8 127.6,76.8 126.2,79.9 125.0,83.0 123.9,86.2 123.0,89.4 122.2,92.6 121.4,95.9 120.7,99.4 120.0,103.0 119.5,105.9 119.1,108.9 118.6,112.0 118.2,115.2 117.9,118.4 117.6,121.6 117.3,124.8 117.0,128.0 116.8,131.1 116.6,134.2 116.4,137.4 116.2,140.5 116.1,143.6 116.1,146.8 116.0,149.9 116.0,153.0 116.0,156.1 116.1,159.2 116.2,162.4 116.3,165.5 116.5,168.6 116.6,171.8 116.8,174.9 117.0,178.0 117.2,181.2 117.4,184.4 117.6,187.6 117.8,190.8 118.1,194.0 118.3,197.1 118.6,200.1 119.0,203.0 119.5,206.5 120.0,209.7 120.6,212.8 121.3,215.9 122.1,219.3 123.0,223.0 123.8,225.9 124.7,229.2 125.7,232.8 126.7,236.4 127.8,240.0 128.8,243.4 129.7,246.5 130.4,249.1 131.0,251.0 3.0,287.0 163.4,334.7 164.0,336.6 164.9,339.2 165.9,342.3 166.9,345.7 168.0,349.3 169.0,353.0 169.7,355.7 170.4,358.4 171.1,361.2 171.8,364.1 172.5,367.2 173.2,370.6 173.9,374.3 174.5,378.5 174.8,381.0 175.2,383.6 175.5,386.4 175.9,389.3 176.2,392.3 176.6,395.4 176.9,398.6 177.3,401.8 177.6,405.0 177.9,408.3 178.1,411.5 178.4,414.7 178.6,417.9 178.8,421.0 179.0,424.0 179.2,427.1 179.3,430.3 179.4,433.4 179.5,436.5 179.6,439.5 179.6,442.6 179.7,445.7 179.7,448.7 179.6,451.7 179.6,454.8 179.5,457.8 179.4,460.9 179.2,463.9 179.0,467.0 178.8,470.1 178.5,473.2 178.2,476.4 177.9,479.6 177.6,482.8 177.2,486.0 176.8,489.2 176.4,492.3 175.9,495.5 175.4,498.5 174.9,501.5 174.3,504.4 173.7,507.3 173.0,510.0 172.0,513.4 170.9,516.7 169.7,520.0 168.4,523.1 167.1,526.2 165.7,529.2 164.4,532.0 163.1,534.8 161.9,537.3 160.9,539.8 160.0,542.0 158.3,545.8 156.9,548.3 155.8,550.4 155.3,553.2 155.5,557.5 155.8,559.7 156.2,562.2 156.8,565.0 157.5,567.9 158.2,571.0 159.1,574.2 160.0,577.5 161.0,580.8 161.9,584.0 163.0,587.2 164.0,590.3 165.0,593.3 166.0,596.0 167.2,599.0 168.4,601.9 169.7,604.7 171.0,607.5 172.3,610.1 173.7,612.7 175.1,615.3 176.6,617.9 178.0,620.5 179.5,623.2 181.0,626.0 182.4,628.6 183.9,631.1 185.4,633.7 186.9,636.2 188.4,638.8 190.0,641.4 191.6,644.0 193.1,646.7 194.6,649.4 196.1,652.2 197.6,655.0 199.0,658.0 200.2,660.7 201.4,663.6 202.7,666.8 203.9,670.0 205.2,673.3 206.4,676.7 207.6,680.0 208.8,683.2 209.9,686.3 210.9,689.3 211.8,691.9 212.7,694.3 213.4,696.4 214.0,698.0 434.0,698.0 433.9,696.3 433.8,694.3 433.7,692.0 433.6,689.4 433.5,686.5 433.4,683.5 433.3,680.2 433.1,676.8 432.9,673.2 432.7,669.6 432.5,665.8 432.3,661.9 432.0,658.0 431.8,655.4 431.6,652.7 431.4,649.9 431.2,647.0 431.0,644.1 430.8,641.1 430.5,638.0 430.3,634.9 430.0,631.7 429.8,628.5 429.5,625.3 429.2,622.0 428.9,618.7 428.6,615.4 428.3,612.2 428.0,608.9 427.7,605.6 427.4,602.4 427.0,599.2 426.7,596.0 426.4,593.0 426.0,589.9 425.6,586.8 425.3,583.6 424.9,580.4 424.5,577.2 424.0,574.0 423.6,570.8 423.2,567.6 422.8,564.4 422.3,561.2 421.9,558.1 421.5,554.9 421.0,551.9 420.6,548.8 420.1,545.8 419.7,542.9 419.3,540.1 418.8,537.3 418.4,534.6 418.0,532.0 417.4,528.2 416.7,524.4 416.0,520.6 415.3,516.9 414.6,513.3 413.9,509.8 413.2,506.5 412.5,503.3 411.9,500.3 411.3,497.5 410.8,495.0 410.3,492.7 409.8,490.7 409.5,489.0 411.7,488.9 414.9,488.7 419.0,489.0 421.8,489.6 425.0,490.5 428.4,491.4 432.0,492.2 435.7,492.6 438.9,492.7 442.3,492.7 445.9,492.6 449.4,492.2 453.0,491.5 456.5,490.5 459.1,489.5 461.6,488.4 464.2,487.1 466.7,485.7 469.3,484.1 471.8,482.2 474.4,480.2 477.0,478.0 479.1,476.0 481.2,473.9 483.3,471.7 485.4,469.3 487.5,466.8 489.6,464.2 491.7,461.5 493.8,458.7 495.9,455.9 498.0,453.0 499.6,450.7 501.3,448.3 502.9,445.9 504.6,443.4 506.3,440.8 507.9,438.2 509.6,435.6 511.2,432.9 512.9,430.2 514.4,427.6 516.0,424.9 517.5,422.3 519.0,419.7 520.6,416.9 522.1,414.1 523.6,411.4 525.0,408.6 526.5,405.9 527.9,403.1 529.3,400.3 530.6,397.5 531.9,394.7 533.2,391.8 534.5,388.9 535.7,386.0 536.9,383.1 538.1,380.1 539.2,377.2 540.3,374.2 541.4,371.3 542.4,368.3 543.4,365.2 544.4,362.1 545.3,359.0 546.2,355.7 547.1,352.4 548.0,349.0 548.7,346.2 549.3,343.2 550.0,340.0 550.6,336.8 551.2,333.6 551.8,330.2 552.4,326.9 553.0,323.6 553.5,320.3 554.0,317.1 554.5,314.0 554.9,311.0 555.3,308.2 555.7,305.5 556.0,303.0 556.5,298.9 556.8,295.4 557.0,292.4 557.1,289.6 557.1,286.9 557.1,284.2 557.0,281.3 557.0,278.0 557.0,275.0 556.9,271.7 556.8,268.2 556.7,264.5 556.6,260.9 556.4,257.5 556.3,254.2 556.2,251.3 556.1,248.9 556.0,247.0 604.8,206.6 566.0,201.0 565.6,199.0 565.1,196.4 564.4,193.2 563.7,189.5 562.9,185.6 562.0,181.5 561.4,178.9 560.8,176.1 560.2,173.2 559.6,170.1 558.9,167.0 558.2,163.8 557.5,160.5 556.7,157.3 555.9,154.1 555.0,151.0 554.1,147.9 553.2,144.8 552.2,141.7 551.2,138.6 550.2,135.5 549.1,132.4 548.0,129.3 546.9,126.2 545.7,123.1 544.5,120.0 543.4,117.2 542.2,114.5 541.0,111.7 539.8,108.9 538.5,106.2 537.3,103.5 536.0,100.7 534.7,98.0 533.3,95.2 532.0,92.5 530.7,89.7 529.4,86.9 528.1,84.1 526.7,81.3 525.4,78.6 524.1,75.8 522.7,73.0 521.3,70.2 519.9,67.4 518.5,64.6 517.0,61.8 515.5,59.0 513.9,56.2 512.3,53.3 510.5,50.3 508.8,47.3 507.0,44.3 505.2,41.4 503.5,38.6 501.7,35.8 500.1,33.2 498.5,30.8 497.0,28.6 494.5,25.1 492.2,22.2 490.1,19.7 488.1,17.5 486.0,15.3 484.0,13.0 481.7,10.7 479.5,9.0 477.3,7.2 474.9,4.4 472.0,0.0 470.9,-2.0 469.6,-4.5 468.2,-7.2 466.7,-10.2 465.2,-13.4 463.6,-16.7 462.0,-20.1 460.5,-23.5 458.9,-26.8 457.5,-30.0 456.1,-33.1 454.8,-35.8 453.7,-38.3 452.8,-40.4 452.0,-42.0" fill="url(#skin)"/>
<g clip-path="url(#hc)">
<polygon points="206.0,-42.0 205.2,-40.4 204.2,-38.3 203.1,-35.8 201.8,-33.1 200.4,-30.1 198.9,-26.9 197.3,-23.6 195.7,-20.2 194.0,-16.8 192.4,-13.5 190.8,-10.3 189.2,-7.3 187.7,-4.5 186.3,-2.1 185.0,0.0 182.4,3.4 180.0,6.0 177.7,7.8 175.5,9.3 173.4,10.6 171.2,12.1 169.0,14.0 166.8,16.2 164.6,18.5 162.3,20.9 160.2,23.3 158.0,25.7 156.0,28.1 154.0,30.4 151.8,33.0 149.6,35.5 147.6,38.1 145.6,40.6 143.8,43.2 142.0,46.0 140.4,48.9 138.9,52.0 137.5,55.2 136.2,58.4 134.9,61.6 133.5,64.8 132.0,67.8 130.5,70.8 129.0,73.8 127.6,76.8 126.2,79.9 125.0,83.0 123.9,86.2 123.0,89.4 122.2,92.6 121.4,95.9 120.7,99.4 120.0,103.0 119.5,105.9 119.1,108.9 118.6,112.0 118.2,115.2 117.9,118.4 117.6,121.6 117.3,124.8 117.0,128.0 116.8,131.1 116.6,134.2 116.4,137.4 116.2,140.5 116.1,143.6 116.1,146.8 116.0,149.9 116.0,153.0 116.0,156.1 116.1,159.2 116.2,162.4 116.3,165.5 116.5,168.6 116.6,171.8 116.8,174.9 117.0,178.0 117.2,181.2 117.4,184.4 117.6,187.6 117.8,190.8 118.1,194.0 118.3,197.1 118.6,200.1 119.0,203.0 119.5,206.5 120.0,209.7 120.6,212.8 121.3,215.9 122.1,219.3 123.0,223.0 123.8,225.9 124.7,229.2 125.7,232.8 126.7,236.4 127.8,240.0 128.8,243.4 129.7,246.5 130.4,249.1 131.0,251.0 3.0,287.0 163.4,334.7 164.0,336.6 164.9,339.2 165.9,342.3 166.9,345.7 168.0,349.3 169.0,353.0 169.7,355.7 170.4,358.4 171.1,361.2 171.8,364.1 172.5,367.2 173.2,370.6 173.9,374.3 174.5,378.5 174.8,381.0 175.2,383.6 175.5,386.4 175.9,389.3 176.2,392.3 176.6,395.4 176.9,398.6 177.3,401.8 177.6,405.0 177.9,408.3 178.1,411.5 178.4,414.7 178.6,417.9 178.8,421.0 179.0,424.0 179.2,427.1 179.3,430.3 179.4,433.4 179.5,436.5 179.6,439.5 179.6,442.6 179.7,445.7 179.7,448.7 179.6,451.7 179.6,454.8 179.5,457.8 179.4,460.9 179.2,463.9 179.0,467.0 178.8,470.1 178.5,473.2 178.2,476.4 177.9,479.6 177.6,482.8 177.2,486.0 176.8,489.2 176.4,492.3 175.9,495.5 175.4,498.5 174.9,501.5 174.3,504.4 173.7,507.3 173.0,510.0 172.0,513.4 170.9,516.7 169.7,520.0 168.4,523.1 167.1,526.2 165.7,529.2 164.4,532.0 163.1,534.8 161.9,537.3 160.9,539.8 160.0,542.0 158.3,545.8 156.9,548.3 155.8,550.4 155.3,553.2 155.5,557.5 155.8,559.7 156.2,562.2 156.8,565.0 157.5,567.9 158.2,571.0 159.1,574.2 160.0,577.5 161.0,580.8 161.9,584.0 163.0,587.2 164.0,590.3 165.0,593.3 166.0,596.0 167.2,599.0 168.4,601.9 169.7,604.7 171.0,607.5 172.3,610.1 173.7,612.7 175.1,615.3 176.6,617.9 178.0,620.5 179.5,623.2 181.0,626.0 182.4,628.6 183.9,631.1 185.4,633.7 186.9,636.2 188.4,638.8 190.0,641.4 191.6,644.0 193.1,646.7 194.6,649.4 196.1,652.2 197.6,655.0 199.0,658.0 200.2,660.7 201.4,663.6 202.7,666.8 203.9,670.0 205.2,673.3 206.4,676.7 207.6,680.0 208.8,683.2 209.9,686.3 210.9,689.3 211.8,691.9 212.7,694.3 213.4,696.4 214.0,698.0 434.0,698.0 433.9,696.3 433.8,694.3 433.7,692.0 433.6,689.4 433.5,686.5 433.4,683.5 433.3,680.2 433.1,676.8 432.9,673.2 432.7,669.6 432.5,665.8 432.3,661.9 432.0,658.0 431.8,655.4 431.6,652.7 431.4,649.9 431.2,647.0 431.0,644.1 430.8,641.1 430.5,638.0 430.3,634.9 430.0,631.7 429.8,628.5 429.5,625.3 429.2,622.0 428.9,618.7 428.6,615.4 428.3,612.2 428.0,608.9 427.7,605.6 427.4,602.4 427.0,599.2 426.7,596.0 426.4,593.0 426.0,589.9 425.6,586.8 425.3,583.6 424.9,580.4 424.5,577.2 424.0,574.0 423.6,570.8 423.2,567.6 422.8,564.4 422.3,561.2 421.9,558.1 421.5,554.9 421.0,551.9 420.6,548.8 420.1,545.8 419.7,542.9 419.3,540.1 418.8,537.3 418.4,534.6 418.0,532.0 417.4,528.2 416.7,524.4 416.0,520.6 415.3,516.9 414.6,513.3 413.9,509.8 413.2,506.5 412.5,503.3 411.9,500.3 411.3,497.5 410.8,495.0 410.3,492.7 409.8,490.7 409.5,489.0 411.7,488.9 414.9,488.7 419.0,489.0 421.8,489.6 425.0,490.5 428.4,491.4 432.0,492.2 435.7,492.6 438.9,492.7 442.3,492.7 445.9,492.6 449.4,492.2 453.0,491.5 456.5,490.5 459.1,489.5 461.6,488.4 464.2,487.1 466.7,485.7 469.3,484.1 471.8,482.2 474.4,480.2 477.0,478.0 479.1,476.0 481.2,473.9 483.3,471.7 485.4,469.3 487.5,466.8 489.6,464.2 491.7,461.5 493.8,458.7 495.9,455.9 498.0,453.0 499.6,450.7 501.3,448.3 502.9,445.9 504.6,443.4 506.3,440.8 507.9,438.2 509.6,435.6 511.2,432.9 512.9,430.2 514.4,427.6 516.0,424.9 517.5,422.3 519.0,419.7 520.6,416.9 522.1,414.1 523.6,411.4 525.0,408.6 526.5,405.9 527.9,403.1 529.3,400.3 530.6,397.5 531.9,394.7 533.2,391.8 534.5,388.9 535.7,386.0 536.9,383.1 538.1,380.1 539.2,377.2 540.3,374.2 541.4,371.3 542.4,368.3 543.4,365.2 544.4,362.1 545.3,359.0 546.2,355.7 547.1,352.4 548.0,349.0 548.7,346.2 549.3,343.2 550.0,340.0 550.6,336.8 551.2,333.6 551.8,330.2 552.4,326.9 553.0,323.6 553.5,320.3 554.0,317.1 554.5,314.0 554.9,311.0 555.3,308.2 555.7,305.5 556.0,303.0 556.5,298.9 556.8,295.4 557.0,292.4 557.1,289.6 557.1,286.9 557.1,284.2 557.0,281.3 557.0,278.0 557.0,275.0 556.9,271.7 556.8,268.2 556.7,264.5 556.6,260.9 556.4,257.5 556.3,254.2 556.2,251.3 556.1,248.9 556.0,247.0 604.8,206.6 566.0,201.0 565.6,199.0 565.1,196.4 564.4,193.2 563.7,189.5 562.9,185.6 562.0,181.5 561.4,178.9 560.8,176.1 560.2,173.2 559.6,170.1 558.9,167.0 558.2,163.8 557.5,160.5 556.7,157.3 555.9,154.1 555.0,151.0 554.1,147.9 553.2,144.8 552.2,141.7 551.2,138.6 550.2,135.5 549.1,132.4 548.0,129.3 546.9,126.2 545.7,123.1 544.5,120.0 543.4,117.2 542.2,114.5 541.0,111.7 539.8,108.9 538.5,106.2 537.3,103.5 536.0,100.7 534.7,98.0 533.3,95.2 532.0,92.5 530.7,89.7 529.4,86.9 528.1,84.1 526.7,81.3 525.4,78.6 524.1,75.8 522.7,73.0 521.3,70.2 519.9,67.4 518.5,64.6 517.0,61.8 515.5,59.0 513.9,56.2 512.3,53.3 510.5,50.3 508.8,47.3 507.0,44.3 505.2,41.4 503.5,38.6 501.7,35.8 500.1,33.2 498.5,30.8 497.0,28.6 494.5,25.1 492.2,22.2 490.1,19.7 488.1,17.5 486.0,15.3 484.0,13.0 481.7,10.7 479.5,9.0 477.3,7.2 474.9,4.4 472.0,0.0 470.9,-2.0 469.6,-4.5 468.2,-7.2 466.7,-10.2 465.2,-13.4 463.6,-16.7 462.0,-20.1 460.5,-23.5 458.9,-26.8 457.5,-30.0 456.1,-33.1 454.8,-35.8 453.7,-38.3 452.8,-40.4 452.0,-42.0" fill="none" stroke="#e6b4a2" stroke-width="16" filter="url(#bl8)" opacity="0.6"/>
<ellipse cx="164" cy="128" rx="55" ry="130" fill="#efc4b2" opacity="0.55" filter="url(#bl12)"/>
<ellipse cx="234" cy="33" rx="90" ry="40" fill="#f2cfbf" opacity="0.5" filter="url(#bl12)"/>
<polygon points="174.0,358.0 221.0,386.0 244.0,410.0 265.0,430.0 286.0,445.0 309.6,457.0 334.0,467.0 354.0,474.7 376.0,482.0 398.0,488.0 416.0,495.0 434.0,501.0 434.0,538.0 294.0,528.0 194.0,458.0" fill="#dca493" opacity="0.75" filter="url(#bl8)"/>
<ellipse cx="189" cy="458" rx="22" ry="90" fill="#e2b0a0" opacity="0.7" filter="url(#bl8)"/>
<ellipse cx="414" cy="578" rx="18" ry="70" fill="#e4b4a4" opacity="0.6" filter="url(#bl8)"/>
<ellipse cx="289" cy="603" rx="110" ry="60" fill="#ffffff" opacity="0.95" filter="url(#bl12)"/>
<path d="M34.0 286.0 L174.0 268.0 L184.0 323.0 Z" fill="#fff6f2" opacity="0.9" filter="url(#bl4)"/>
<path d="M86.0 276.0 Q159.0 256.0 194.0 274.0 Q204.0 294.0 186.0 310.0 Q144.0 308.0 94.0 296.0Z" fill="#e2b2a2" stroke="#8a5040" stroke-width="1.5" opacity="0.8" filter="url(#bl2)"/>
<path d="M74.0 284.0 Q134.0 278.0 182.0 288.0" stroke="#fff" stroke-width="4" fill="none" opacity="0.9" filter="url(#bl2)"/>
<path d="M94.0 316.0 Q144.0 320.0 174.0 328.0" stroke="#fff" stroke-width="5" fill="none" opacity="0.8" filter="url(#bl2)"/>
<path d="M191.0 266.0 Q204.0 290.0 191.0 316.0" stroke="#5a3028" stroke-width="3.5" fill="none" opacity="0.7" filter="url(#bl2)"/>
<path d="M349.0 230.0 Q399.0 222.0 446.0 237.0" stroke="#a09890" stroke-width="5" fill="none" opacity="0.7" filter="url(#bl2)"/>
<path d="M514.0 223.0 Q539.0 212.0 564.0 210.0" stroke="#706050" stroke-width="7" fill="none" opacity="0.6" filter="url(#bl3)"/>
<polygon points="564.0,204.0 602.0,207.0 554.0,246.0 546.0,238.0" fill="#3a3020" opacity="0.85" filter="url(#bl2)"/>
<ellipse cx="474" cy="427" rx="28" ry="9" fill="#e0b8a8" opacity="0.7" filter="url(#bl4)"/>
<path d="M439.0 288.0 Q434.0 338.0 449.0 370.0" stroke="#e0c0b0" stroke-width="8" fill="none" opacity="0.6" filter="url(#bl4)"/>
</g>
<path d="M170 336L174 341M170 336L180 324M170 336L161 335M170 336L164 337M170 336L166 344M174 341L177 346M174 341L180 324M174 341L195 341M174 341L166 344M177 346L180 350M177 346L170 351M177 346L195 341M177 346L166 344M180 350L184 355M180 350L170 351M180 350L195 341M180 350L171 360M184 355L188 360M184 355L202 358M184 355L195 341M184 355L174 363M184 355L171 360M188 360L191 364M188 360L202 358M188 360L174 363M191 364L194 369M191 364L175 375M191 364L202 358M191 364L174 363M191 364L173 367M194 369L198 374M194 369L175 375M194 369L202 358M194 369L211 365M198 374L202 378M198 374L175 375M198 374L189 391M198 374L211 365M202 378L207 383M202 378L219 373M202 378L189 391M202 378L211 365M207 383L211 387M207 383L219 373M207 383L201 398M207 383L189 391M207 383L221 381M211 387L215 392M211 387L201 398M211 387L221 381M215 392L219 396M215 392L201 398M215 392L221 381M219 396L224 401M219 396L201 398M219 396L231 390M219 396L218 410M219 396L221 381M224 401L228 405M224 401L231 390M224 401L218 410M224 401L237 401M228 405L232 408M228 405L218 410M228 405L237 401M232 408L237 412M232 408L218 410M232 408L232 419M232 408L237 401M237 412L241 415M237 412L232 419M237 412L237 401M237 412L245 406M241 415L246 418M241 415L232 419M241 415L245 406M241 415L238 425M246 418L250 421M246 418L253 410M246 418L245 406M246 418L238 425M246 418L246 428M250 421L255 425M250 421L253 410M250 421L258 417M250 421L246 428M255 425L259 428M255 425L253 434M255 425L264 421M255 425L258 417M255 425L246 428M259 428L264 431M259 428L253 434M259 428L264 421M264 431L269 434M264 431L275 424M264 431L253 434M264 431L264 421M264 431L262 441M269 434L274 438M269 434L275 424M269 434L262 441M274 438L280 441M274 438L275 424M274 438L262 441M274 438L270 450M274 438L282 429M280 441L285 444M280 441L290 437M280 441L270 450M280 441L282 429M280 441L277 455M285 444L290 447M285 444L290 437M285 444L285 453M285 444L277 455M290 447L296 450M290 447L290 437M290 447L285 453M290 447L297 440M296 450L301 453M296 450L285 453M296 450L297 440M296 450L300 461M296 450L289 462M296 450L305 446M301 453L307 456M301 453L300 461M301 453L305 446M307 456L313 459M307 456L315 450M307 456L300 461M307 456L307 468M307 456L305 446M313 459L318 462M313 459L315 450M313 459L307 468M313 459L315 470M318 462L324 465M318 462L324 450M318 462L329 458M318 462L315 450M318 462L315 470M324 465L329 467M324 465L329 458M324 465L323 474M324 465L315 470M329 467L335 469M329 467L337 460M329 467L329 458M329 467L332 479M329 467L323 474M335 469L340 471M335 469L337 460M335 469L332 479M340 471L345 474M340 471L337 460M340 471L332 479M340 471L346 466M340 471L341 481M345 474L350 476M345 474L346 466M345 474L341 481M345 474L352 467M350 476L356 478M350 476L350 489M350 476L341 481M350 476L352 467M356 478L361 480M356 478L350 489M356 478L352 467M356 478L361 471M361 480L367 482M361 480L350 489M361 480L366 490M361 480L358 492M361 480L361 471M367 482L372 483M367 482L370 470M367 482L366 490M367 482L361 471M372 483L378 485M372 483L375 495M372 483L370 470M372 483L366 490M372 483L378 475M378 485L383 486M378 485L375 495M378 485L378 475M378 485L388 480M383 486L389 488M383 486L383 499M383 486L375 495M383 486L388 480M389 488L395 489M389 488L396 482M389 488L383 499M389 488L392 496M389 488L388 480M395 489L400 490M395 489L396 482M395 489L392 496M400 490L406 490M400 490L396 482M400 490L404 482M400 490L402 498M400 490L392 496M406 490L404 482M406 490L412 484M406 490L409 497M406 490L402 498M406 490L410 491M411 491L412 484M411 491L409 497M411 491L412 499M411 491L410 491M411 491L415 489M446 288L448 293M446 288L449 280M446 288L457 291M446 288L439 288M446 288L441 280M448 293L449 298M448 293L439 298M448 293L457 291M448 293L439 288M449 298L451 303M449 298L439 298M449 298L457 291M449 298L461 297M449 298L444 305M451 303L452 308M451 303L461 297M451 303L460 307M451 303L444 305M452 308L454 313M452 308L444 319M452 308L438 310M452 308L460 307M452 308L444 305M454 313L456 318M454 313L444 319M454 313L467 316M454 313L460 307M456 318L457 323M456 318L444 319M456 318L467 316M456 318L450 325M457 323L459 328M457 323L467 316M457 323L466 326M457 323L450 325M459 328L460 333M459 328L449 333M459 328L466 326M459 328L450 325M459 328L454 336M460 333L462 338M460 333L467 333M460 333L466 326M460 333L454 336M462 338L464 342M462 338L467 333M462 338L458 344M462 338L466 339M462 338L454 336M464 342L465 347M464 342L458 344M464 342L469 343M464 342L466 339M464 342L459 349M465 347L467 351M465 347L461 354M465 347L469 343M465 347L471 347M465 347L459 349M467 351L468 356M467 351L461 354M467 351L474 351M467 351L471 347M467 351L465 358M468 356L470 360M468 356L473 355M468 356L474 351M468 356L465 358M470 360L474 365M470 360L480 360M470 360L473 355M470 360L467 368M470 360L465 358M474 365L479 370M474 365L470 374M474 365L474 374M474 365L480 360M474 365L467 368M479 370L474 374M479 370L478 372M479 370L483 370M479 370L480 360M439 368L443 370M439 368L430 368M439 368L436 376M439 368L434 362M439 368L445 363M443 370L446 371M443 370L446 379M443 370L436 376M443 370L445 363M446 371L450 372M446 371L455 365M446 371L446 379M446 371L445 363M450 372L454 374M450 372L455 365M450 372L446 379M454 374L458 374M454 374L455 365M454 374L446 379M454 374L457 382M458 374L462 374M458 374L455 365M458 374L457 382M462 374L466 374M462 374L455 365M462 374L464 383M462 374L467 368M462 374L457 382M466 374L470 374M466 374L464 383M466 374L467 368M470 374L474 374M470 374L464 383M470 374L475 382M470 374L467 368M474 374L478 372M474 374L475 382M478 372L483 370M478 372L475 382M478 372L487 378M483 370L488 368M483 370L480 360M483 370L487 378M488 368L492 366M488 368L488 358M488 368L480 360M488 368L494 374M488 368L487 378M492 366L504 360M492 366L488 358M492 366L500 354M492 366L503 368M492 366L494 374M399 410L403 409M399 410L392 412M399 410L400 419M399 410L398 402M403 409L407 409M403 409L413 416M403 409L400 419M403 409L398 402M407 409L412 408M407 409L407 397M407 409L413 416M407 409L398 402M412 408L416 407M412 408L407 397M412 408L413 416M412 408L416 400M416 407L420 407M416 407L413 416M416 407L416 400M420 407L424 406M420 407L426 416M420 407L413 416M420 407L416 400M424 406L428 406M424 406L424 397M424 406L426 416M424 406L416 400M424 406L431 413M428 406L432 405M428 406L424 397M428 406L431 397M428 406L431 413M432 405L436 405M432 405L431 397M432 405L431 413M432 405L436 410M436 405L441 405M436 405L441 395M436 405L431 397M436 405L436 410M441 405L445 404M441 405L441 412M441 405L441 395M441 405L445 411M441 405L436 410M445 404L449 404M445 404L441 395M445 404L445 411M445 404L450 395M449 404L453 405M449 404L445 411M449 404L451 411M449 404L450 395M453 405L457 405M453 405L461 393M453 405L451 411M453 405L450 395M453 405L457 410M457 405L462 406M457 405L461 393M457 405L457 410M462 406L466 407M462 406L461 393M462 406L469 396M462 406L465 413M462 406L457 410M466 407L470 407M466 407L469 396M466 407L465 413M470 407L474 408M470 407L469 396M470 407L465 413M470 407L470 413M474 408L478 408M474 408L469 396M474 408L479 415M474 408L479 400M474 408L470 413M478 408L482 407M478 408L479 415M478 408L479 400M482 407L486 407M482 407L479 415M482 407L479 400M482 407L487 418M482 407L486 400M486 407L490 407M486 407L487 418M486 407L486 400M490 407L494 407M490 407L494 420M490 407L487 418M490 407L486 400M494 407L498 406M494 407L501 416M494 407L497 394M494 407L494 420M494 407L486 400M498 406L502 406M498 406L501 416M498 406L497 394M498 406L504 399M502 406L501 416M502 406L511 406M502 406L504 399M502 406L510 416M414 423L419 424M414 423L413 416M414 423L405 425M414 423L415 432M419 424L425 425M419 424L423 433M419 424L426 416M419 424L413 416M419 424L415 432M425 425L430 426M425 425L423 433M425 425L426 416M425 425L432 419M430 426L435 426M430 426L423 433M430 426L430 435M430 426L432 419M435 426L441 427M435 426L430 435M435 426L439 435M435 426L432 419M435 426L439 421M441 427L446 428M441 427L439 435M441 427L445 419M441 427L439 421M446 428L452 427M446 428L452 438M446 428L439 435M446 428L445 419M446 428L452 422M452 427L457 427M452 427L452 438M452 427L452 422M457 427L462 426M457 427L460 439M457 427L452 438M457 427L458 420M457 427L452 422M462 426L468 425M462 426L460 439M462 426L463 418M462 426L458 420M462 426L471 432M468 425L474 425M468 425L467 416M468 425L463 418M468 425L471 432M468 425L473 417M474 425L479 424M474 425L479 433M474 425L471 432M474 425L473 417M479 424L479 433M479 424L479 415M479 424L487 418M479 424L487 426M479 424L473 417M386 587L393 569M386 587L384 604M386 587L377 570M386 587L412 589M386 587L410 605M386 587L371 593M485 131L483 155M485 131L499 150M485 131L489 114M485 131L507 130M485 131L468 124M485 131L472 143M172 571L165 586M172 571L189 553M172 571L163 560M172 571L187 578M172 571L158 571M172 571L160 578M499 296L510 297M499 296L492 285M499 296L489 292M499 296L492 303M499 296L502 283M499 296L509 289M499 296L505 303M174 167L198 162M174 167L181 190M174 167L165 186M174 167L180 141M174 167L163 141M174 167L149 165M174 167L201 178M306 354L317 357M306 354L315 347M306 354L309 367M306 354L298 364M306 354L304 341M306 354L300 349M306 354L297 357M384 650L407 656M384 650L379 627M384 650L367 643M384 650L401 641M384 650L362 698M384 650L370 698M384 650L378 698M384 650L386 698M378 8L353 5M378 8L397 -9M378 8L385 -20M378 8L362 24M378 8L385 26M378 8L363 -20M378 8L396 10M281 601L302 599M281 601L272 618M281 601L297 619M281 601L292 586M281 601L260 598M281 601L276 584M389 327L396 330M389 327L393 319M389 327L383 321M389 327L394 337M389 327L382 338M389 327L378 332M301 146L299 169M301 146L278 157M301 146L298 129M301 146L316 161M301 146L318 143M301 146L284 140M430 114L403 124M430 114L433 132M430 114L411 108M430 114L449 114M430 114L435 95M218 -19L234 -7M218 -19L204 -4M218 -19L221 4M218 -19L242 -22M218 -19L203 -35M218 -19L199 -28M218 -19L196 -20M218 -19L232 -42M218 -19L224 -42M218 -19L216 -42M521 83L508 71M521 83L506 99M521 83L529 92M521 83L523 72M521 83L495 82M521 83L528 84M521 83L524 77M521 83L521 69M310 553L309 570M310 553L327 537M310 553L294 558M310 553L297 542M310 553L310 536M310 553L324 563M396 482L404 482M396 482L401 471M396 482L393 473M396 482L388 480M309 570L317 587M309 570L292 586M309 570L294 558M309 570L324 563M309 570L290 572M187 80L173 92M187 80L166 63M187 80L199 107M187 80L182 51M187 80L212 91M187 80L207 62M512 236L521 234M512 236L503 235M512 236L507 227M512 236L510 243M512 236L521 227M512 236L519 241M373 411L364 404M373 411L375 400M373 411L382 419M373 411L364 414M373 411L373 424M373 411L381 410M420 80L437 66M420 80L397 72M420 80L411 108M420 80L435 95M420 80L416 63M420 80L404 89M264 141L245 141M264 141L281 124M264 141L261 117M264 141L263 160M264 141L278 157M264 141L284 140M239 44L210 45M239 44L225 21M239 44L267 48M239 44L254 24M239 44L242 65M239 44L225 58M417 182L406 175M417 182L420 162M417 182L431 186M417 182L417 198M417 182L434 166M417 182L402 186M349 77L338 101M349 77L369 81M349 77L360 99M349 77L320 76M349 77L368 63M349 77L342 58M338 101L309 90M338 101L331 128M338 101L360 99M338 101L320 111M338 101L348 122M338 101L320 76M349 233L346 223M349 233L357 229M349 233L343 237M349 233L348 243M349 233L357 237M245 141L224 150M245 141L240 161M245 141L261 117M245 141L263 160M245 141L226 127M245 141L241 118M282 350L293 350M282 350L285 357M282 350L285 340M282 350L273 345M282 350L275 354M186 488L190 468M186 488L179 478M186 488L188 504M186 488L202 488M186 488L176 490M186 488L178 479M186 488L177 487M186 488L176 495M256 334L245 323M256 334L255 345M256 334L259 322M256 334L268 335M256 334L249 339M256 334L261 340M549 212L553 224M549 212L555 196M549 212L543 224M549 212L559 213M549 212L543 206M549 212L561 204M549 212L538 215M363 442L357 438M363 442L372 439M363 442L361 453M363 442L373 451M363 442L362 432M363 442L357 447M363 442L370 432M208 330L219 344M208 330L195 326M208 330L208 310M208 330L195 341M208 330L220 329M208 330L207 345M508 71L511 58M508 71L485 65M508 71L519 64M508 71L495 82M508 71L521 69M508 71L517 62M250 532L225 542M250 532L235 515M250 532L243 544M250 532L270 549M250 532L262 518M250 532L271 531M497 326L501 320M497 326L490 333M497 326L503 329M497 326L486 320M497 326L501 337M452 132L456 152M452 132L435 151M452 132L433 132M452 132L449 114M452 132L468 124M452 132L472 143M198 162L224 150M198 162L180 141M198 162L201 178M198 162L215 168M198 162L196 146M317 587L302 599M317 587L341 587M317 587L292 586M317 587L321 606M317 587L337 606M317 587L337 569M317 587L324 563M255 574L274 564M255 574L241 581M255 574L260 598M255 574L276 584M255 574L250 560M245 605L229 632M245 605L226 607M245 605L255 617M245 605L241 581M245 605L260 598M245 605L247 632M316 624L321 643M316 624L297 619M316 624L333 632M316 624L321 606M316 624L307 636M420 465L423 478M420 465L417 476M420 465L414 459M420 465L427 456M420 465L430 468M420 465L409 464M420 465L413 470M193 248L204 219M193 248L208 257M193 248L218 243M193 248L178 240M193 248L184 224M193 248L181 261M372 303L370 294M372 303L380 303M372 303L371 312M372 303L379 311M372 303L363 300M372 303L365 308M366 426L356 425M366 426L364 414M366 426L373 424M366 426L362 432M366 426L358 416M366 426L370 432M281 404L272 406M281 404L290 395M281 404L290 406M281 404L279 398M281 404L282 412M393 103L403 124M393 103L374 112M393 103L411 108M393 103L386 86M393 103L404 89M455 55L456 36M455 55L437 66M455 55L481 44M455 55L449 85M455 55L485 65M455 55L473 82M455 55L439 44M141 147L119 162M141 147L126 137M141 147L163 141M141 147L149 165M141 147L155 123M141 147L116 147M141 147L116 155M509 425L501 416M509 425L509 432M509 425L510 416M509 425L516 423M509 425L500 425M509 425L514 429M353 5L337 28M353 5L329 12M353 5L362 24M353 5L343 -17M353 5L363 -20M197 194L181 190M197 194L214 200M197 194L204 219M197 194L181 206M197 194L201 178M500 191L500 171M500 191L489 178M500 191L510 204M500 191L497 202M500 191L513 190M500 191L490 195M352 412L364 404M352 412L343 408M352 412L346 422M352 412L364 414M352 412L351 405M352 412L358 416M352 412L345 415M376 43L355 47M376 43L362 24M376 43L395 49M376 43L385 26M376 43L368 63M190 468L179 478M190 468L206 471M190 468L202 488M190 468L197 455M190 468L180 455M190 468L179 463M190 468L179 471M403 124L374 112M403 124L407 140M403 124L433 132M403 124L411 108M403 124L385 137M345 620L361 624M345 620L333 632M345 620L354 597M345 620L351 646M345 620L337 606M345 620L368 609M224 150L240 161M224 150L211 137M224 150L226 127M224 150L215 168M224 150L196 146M275 424L275 415M275 424L264 421M275 424L286 417M275 424L282 429M521 234L528 229M521 234L528 240M521 234L521 227M521 234L519 241M219 344L239 342M219 344L231 350M219 344L220 358M219 344L232 329M219 344L220 329M219 344L207 345M116 146L126 137M116 146L116 139M116 146L116 147M191 289L206 282M191 289L186 310M191 289L186 276M191 289L204 298M191 289L179 293M356 181L364 194M356 181L352 168M356 181L365 163M356 181L347 192M356 181L377 177M356 181L336 170M176 543L189 553M176 543L163 560M176 543L163 547M176 543L168 534M176 543L190 538M221 461L211 449M221 461L206 471M221 461L238 465M221 461L225 476M221 461L233 450M418 230L427 229M418 230L408 234M418 230L416 241M418 230L420 222M418 230L412 224M418 230L424 238M473 108L488 97M473 108L449 85M473 108L473 82M473 108L489 114M473 108L449 114M473 108L468 124M501 416L494 420M501 416L510 416M501 416L500 425M486 246L484 238M486 246L494 253M486 246L496 243M486 246L474 241M486 246L480 253M486 246L487 255M449 280L457 291M449 280L459 280M449 280L454 272M449 280L448 270M449 280L441 280M223 263L206 282M223 263L242 262M223 263L208 257M223 263L218 243M223 263L225 282M223 263L241 275M331 241L342 247M331 241L330 231M331 241L343 237M331 241L333 250M331 241L326 250M331 241L324 241M225 542L235 515M225 542L243 544M225 542L213 533M225 542L216 566M225 542L230 560M225 542L204 549M353 281L340 279M353 281L357 292M353 281L349 289M353 281L351 273M353 281L360 280M353 281L363 286M481 24L456 36M481 24L481 44M481 24L467 13M481 24L478 11M481 24L496 36M481 24L497 28M481 24L492 22M481 24L486 16M286 0L314 2M286 0L307 -16M286 0L272 21M286 0L292 17M286 0L275 -18M286 0L266 1M181 190L165 186M181 190L181 206M181 190L201 178M136 246L149 225M136 246L158 241M136 246L129 239M136 246L128 242M136 246L131 249M541 307L530 302M541 307L530 310M541 307L542 298M541 307L551 307M541 307L546 312M541 307L537 313M541 307L548 301M388 342L399 342M388 342L394 337M388 342L382 338M388 342L388 350M388 342L395 350M388 342L380 347M235 515L253 502M235 515L213 515M235 515L213 533M235 515L262 518M235 515L235 499M302 599L297 619M302 599L292 586M302 599L321 606M423 478L417 476M423 478L424 486M423 478L430 468M423 478L430 475M423 478L418 486M423 478L428 481M173 92L166 63M173 92L199 107M173 92L169 111M173 92L156 97M173 92L152 80M191 614L195 627M191 614L185 594M191 614L179 615M191 614L205 608M191 614L179 622M191 614L183 629M353 524L339 526M353 524L355 512M353 524L367 521M353 524L341 513M353 524L356 540M437 415L441 412M437 415L431 413M437 415L445 419M437 415L432 419M437 415L436 410M437 415L439 421M248 448L253 434M248 448L238 465M248 448L245 437M248 448L258 453M248 448L262 441M248 448L233 450M248 448L251 463M524 206L514 213M524 206L531 213M524 206L510 204M524 206L530 189M524 206L537 197M524 206L519 198M524 206L536 205M524 206L524 213M338 500L324 509M338 500L349 498M338 500L327 493M338 500L341 513M338 500L336 488M283 256L264 253M283 256L296 242M283 256L301 262M283 256L288 267M283 256L303 249M283 256L281 240M283 256L275 268M449 333L440 339M449 333L444 345M449 333L443 327M449 333L450 325M449 333L454 336M456 36L481 44M456 36L467 13M456 36L439 44M456 36L443 23M345 357L350 366M345 357L338 363M345 357L354 347M345 357L333 355M345 357L346 347M345 357L356 358M345 357L343 367M272 406L265 412M272 406L264 404M272 406L275 415M272 406L272 398M272 406L279 398M272 406L282 412M337 28L308 29M337 28L329 12M337 28L355 47M337 28L362 24M337 28L328 45M365 129L355 150M365 129L374 112M365 129L379 152M365 129L348 122M365 129L385 137M365 129L340 143M468 458L466 452M468 458L480 460M468 458L477 452M468 458L475 466M468 458L466 466M468 458L461 459M339 526L337 553M339 526L324 509M339 526L341 513M339 526L327 537M339 526L356 540M397 254L384 256M397 254L387 262M397 254L399 247M397 254L391 247M397 254L399 261M397 254L407 252M342 247L343 237M342 247L350 257M342 247L333 250M342 247L348 243M342 247L343 255M464 236L475 232M464 236L465 225M464 236L458 241M464 236L466 245M464 236L474 241M464 236L455 228M464 236L452 237M282 491L290 506M282 491L263 488M282 491L288 476M282 491L270 504M282 491L276 478M282 491L296 486M306 208L291 206M306 208L288 226M306 208L323 201M306 208L306 229M306 208L317 222M306 208L310 192M269 462L281 465M269 462L258 453M269 462L270 450M269 462L258 474M269 462L276 478M269 462L277 455M269 462L251 463M541 372L536 375M541 372L538 365M541 372L540 378M541 372L541 371M342 429L349 432M342 429L338 417M342 429L346 422M342 429L343 443M342 429L335 433M342 429L333 424M421 374L421 365M421 374L410 378M421 374L422 381M421 374L430 368M421 374L412 368M421 374L428 376M251 103L276 89M251 103L232 82M251 103L262 74M251 103L261 117M251 103L280 106M251 103L226 108M251 103L241 118M258 656L273 636M258 656L227 654M258 656L247 632M258 656L278 651M258 656L243 649M258 656L242 698M258 656L250 698M258 656L258 698M258 656L266 698M258 656L274 698M206 282L208 257M206 282L225 282M206 282L186 276M206 282L219 297M206 282L204 298M219 373L227 373M219 373L230 362M219 373L221 381M219 373L220 358M219 373L211 365M426 28L414 12M426 28L431 3M426 28L421 45M426 28L402 31M426 28L439 44M426 28L443 23M545 191L559 181M545 191L555 196M545 191L539 177M545 191L543 206M545 191L530 189M545 191L537 197M300 112L281 124M300 112L309 90M300 112L280 106M300 112L298 129M300 112L320 111M519 300L510 297M519 300L511 308M519 300L530 302M519 300L517 292M519 300L526 292M519 300L522 307M480 289L489 292M480 289L470 297M480 289L477 283M480 289L480 301M480 289L485 283M480 289L467 290M513 280L515 272M513 280L504 274M513 280L526 277M513 280L517 292M513 280L502 283M513 280L509 289M513 280L521 285M513 280L522 271M320 406L310 407M320 406L328 402M320 406L317 395M320 406L329 414M320 406L310 414M320 406L322 414M320 406L312 400M165 186L149 199M165 186L149 165M165 186L181 206M165 186L148 181M253 502L240 484M253 502L262 518M253 502L263 488M253 502L270 504M253 502L235 499M480 309L479 318M480 309L470 308M480 309L480 301M480 309L488 309M383 499L373 509M383 499L396 503M383 499L375 495M383 499L386 509M383 499L392 496M468 211L459 214M468 211L458 202M468 211L481 206M468 211L471 220M468 211L482 215M468 211L470 200M296 74L276 89M296 74L262 74M296 74L309 90M296 74L311 56M296 74L286 54M296 74L320 76M265 412L253 410M265 412L264 404M265 412L275 415M265 412L264 421M265 412L258 417M276 89L262 74M276 89L309 90M276 89L280 106M242 262L218 243M242 262L264 253M242 262L241 275M242 262L264 275M242 262L245 242M242 262L253 281M414 12L419 -10M414 12L431 3M414 12L397 -9M414 12L402 31M414 12L396 10M411 386L407 397M411 386L410 378M411 386L399 388M411 386L402 380M411 386L422 381M411 386L418 391M411 386L400 395M377 430L372 439M377 430L382 419M377 430L378 442M377 430L388 429M377 430L383 436M377 430L373 424M377 430L370 432M421 365L427 358M421 365L430 368M421 365L412 368M421 365L418 359M195 326L186 310M195 326L180 324M195 326L208 310M195 326L195 341M431 264L439 273M431 264L425 271M431 264L437 258M431 264L430 255M431 264L424 264M431 264L438 265M196 31L175 30M196 31L185 6M196 31L210 45M196 31L182 51M196 31L208 18M536 252L536 257M536 252L542 250M536 252L534 249M536 252L534 254M136 75L138 96M136 75L144 60M136 75L126 88M136 75L134 64M136 75L152 80M136 75L131 69M136 75L128 76M136 75L125 84M501 444L505 437M501 444L497 449M501 444L506 443M501 444L497 439M501 444L501 449M501 444L505 442M437 66L449 85M437 66L421 45M437 66L435 95M437 66L416 63M437 66L439 44M511 58L485 65M511 58L517 62M511 58L513 55M511 58L509 48M314 2L308 29M314 2L307 -16M314 2L329 12M314 2L292 17M314 2L324 -16M337 553L337 569M337 553L351 561M337 553L327 537M337 553L356 540M337 553L324 563M478 391L482 385M478 391L469 396M478 391L479 400M478 391L490 392M478 391L475 382M478 391L470 388M478 391L486 400M180 405L189 391M180 405L193 411M180 405L177 399M180 405L178 407M180 405L178 415M274 564L270 549M274 564L276 584M274 564L294 558M274 564L250 560M274 564L290 572M434 241L427 244M434 241L442 248M434 241L434 234M434 241L444 241M434 241L424 238M434 241L435 250M456 167L456 152M456 167L472 177M456 167L434 166M456 167L459 191M456 167L445 175M456 167L469 160M269 174L263 160M269 174L278 157M269 174L254 173M269 174L288 177M269 174L272 188M269 174L255 189M175 30L185 6M175 30L182 51M175 30L163 42M175 30L166 24M175 30L179 7M175 30L172 11M175 30L166 17M119 162L149 165M119 162L129 180M119 162L118 174M119 162L116 155M119 162L116 163M119 162L117 171M281 124L261 117M281 124L280 106M281 124L298 129M281 124L284 140M308 29L311 56M308 29L329 12M308 29L292 17M308 29L286 54M308 29L328 45M308 29L283 35M286 524L309 520M286 524L262 518M286 524L290 506M286 524L297 542M286 524L270 504M286 524L271 531M286 524L282 540M217 494L213 515M217 494L240 484M217 494L225 476M217 494L202 488M217 494L235 499M510 297L511 308M510 297L517 292M510 297L509 289M510 297L505 303M273 636L272 618M273 636L255 617M273 636L247 632M273 636L278 651M273 636L291 635M185 6L204 -4M185 6L208 18M185 6L188 -5M185 6L184 1M185 6L179 7M232 82L262 74M232 82L226 108M232 82L212 91M232 82L242 65M232 82L207 62M232 82L225 58M400 198L390 192M400 198L417 198M400 198L402 210M400 198L392 204M400 198L402 186M400 198L408 203M350 489L341 481M350 489L349 498M350 489L358 492M350 489L336 488M358 311L351 320M358 311L350 309M358 311L363 318M358 311L356 301M358 311L365 308M240 161L239 189M240 161L263 160M240 161L225 185M240 161L254 173M240 161L215 168M427 358L420 350M427 358L438 356M427 358L430 368M427 358L428 349M427 358L418 359M427 358L434 362M138 96L141 114M138 96L126 88M138 96L156 97M138 96L152 80M138 96L122 92M138 96L121 99M138 96L119 107M319 484L311 494M319 484L306 478M319 484L332 479M319 484L315 477M319 484L327 493M319 484L323 474M262 74L267 48M262 74L286 54M262 74L242 65M207 645L229 632M207 645L227 654M207 645L195 627M207 645L213 625M207 645L197 655M207 645L191 643M207 645L195 650M207 645L199 657M207 645L202 665M309 90L280 106M309 90L320 111M309 90L320 76M472 254L467 262M472 254L466 245M472 254L481 260M472 254L474 241M472 254L480 253M472 254L461 253M472 254L475 265M179 478L179 471M179 478L178 479M263 387L251 390M263 387L252 383M263 387L256 375M263 387L271 378M263 387L265 395M263 387L263 375M263 387L270 385M276 361L285 357M276 361L278 371M276 361L263 364M276 361L265 357M276 361L270 371M276 361L283 364M276 361L275 354M460 439L452 438M460 439L468 439M460 439L453 446M460 439L460 447M460 439L471 432M510 257L504 266M510 257L504 247M510 257L513 252M510 257L518 258M510 257L516 254M510 257L513 264M510 257L501 255M272 618L297 619M272 618L255 617M272 618L260 598M272 618L291 635M285 282L283 294M285 282L297 275M285 282L288 267M285 282L274 288M285 282L275 268M285 282L294 284M126 137L141 114M126 137L120 127M126 137L155 123M126 137L116 136M126 137L117 131M126 137L116 139M126 137L116 147M475 232L465 225M475 232L484 238M475 232L474 241M475 232L471 220M475 232L478 225M475 232L484 229M433 492L441 484M433 492L433 484M433 492L431 492M433 492L439 493M355 150L352 168M355 150L379 152M355 150L330 155M355 150L365 163M355 150L340 143M141 114L156 97M141 114L120 127M141 114L120 114M141 114L155 123M141 114L119 107M317 386L324 390M317 386L316 376M317 386L317 395M317 386L307 394M317 386L306 381M317 386L323 379M437 206L423 206M437 206L446 211M437 206L444 199M437 206L439 214M437 206L432 197M437 206L430 211M261 117L280 106M261 117L241 118M441 -16L419 -10M441 -16L431 3M441 -16L451 6M441 -16L456 -21M441 -16L457 -31M441 -16L440 -42M441 -16L432 -42M441 -16L424 -42M420 350L411 353M420 350L421 342M420 350L412 343M420 350L428 349M420 350L418 359M396 330L393 319M396 330L394 337M396 330L406 323M396 330L403 334M492 285L489 292M492 285L502 283M492 285L495 279M492 285L485 283M239 189L237 209M239 189L225 185M239 189L254 173M239 189L252 208M239 189L255 189M307 -16L275 -18M307 -16L324 -16M307 -16L312 -42M307 -16L304 -42M307 -16L296 -42M307 -16L288 -42M444 319L438 310M444 319L435 318M444 319L443 327M444 319L450 325M306 274L297 275M306 274L309 281M306 274L301 262M306 274L313 273M306 274L302 286M306 274L309 266M243 544L270 549M243 544L230 560M243 544L250 560M385 474L379 466M385 474L378 475M385 474L386 467M385 474L393 473M385 474L388 480M225 320L208 310M225 320L231 307M225 320L232 329M225 320L235 316M225 320L220 329M225 320L220 309M506 346L513 351M506 346L510 336M506 346L500 354M506 346L494 343M506 346L501 337M506 346L512 343M224 216L214 200M224 216L204 219M224 216L218 243M224 216L237 209M224 216L230 232M415 631L422 646M415 631L396 625M415 631L430 638M415 631L410 605M415 631L423 622M415 631L431 629M415 631L401 641M415 631L430 634M415 631L430 626M506 99L488 97M506 99L523 122M506 99L533 112M506 99L489 114M506 99L507 130M506 99L529 92M506 99L495 82M166 63L144 60M166 63L182 51M166 63L163 42M166 63L152 80M166 63L146 45M358 265L367 265M358 265L347 263M358 265L364 252M358 265L350 257M358 265L357 251M358 265L363 272M358 265L351 273M237 293L225 282M237 293L219 297M237 293L251 296M237 293L231 307M237 293L241 275M237 293L241 303M237 293L253 281M448 188L431 186M448 188L444 199M448 188L459 191M448 188L445 175M448 188L432 197M364 194L362 206M364 194L347 192M364 194L377 177M364 194L370 211M364 194L350 204M364 194L377 195M504 360L513 351M504 360L511 367M504 360L500 354M504 360L503 368M504 360L517 362M389 269L392 266M389 269L387 273M389 269L386 267M389 269L392 272M543 243L552 244M543 243L538 236M543 243L535 244M543 243L553 237M543 243L544 234M543 243L542 250M311 56L286 54M311 56L328 45M311 56L320 76M456 152L435 151M456 152L434 166M456 152L472 143M456 152L469 160M488 97L473 82M488 97L489 114M488 97L495 82M396 466L401 471M396 466L387 457M396 466L396 456M396 466L386 467M396 466L393 473M396 466L402 464M283 294L296 292M283 294L276 301M283 294L274 288M283 294L293 301M283 294L285 301M283 294L294 284M182 450L193 440M182 450L197 455M182 450L180 447M182 450L180 455M175 387L189 391M175 387L175 383M175 387L176 391M165 586L185 594M165 586L187 578M165 586L166 595M165 586L160 578M165 586L163 586M165 586L165 594M468 283L477 283M468 283L463 272M468 283L459 280M468 283L472 277M468 283L467 290M170 351L166 344M170 351L169 352M170 351L171 360M481 44L485 65M481 44L506 43M481 44L496 36M149 199L149 225M149 199L127 203M149 199L166 219M149 199L129 180M149 199L181 206M149 199L133 219M149 199L148 181M364 404L354 397M364 404L375 400M364 404L365 394M364 404L364 414M364 404L351 405M513 351L522 347M513 351L523 359M513 351L500 354M513 351L517 362M513 351L512 343M311 494L306 478M311 494L309 520M311 494L290 506M311 494L324 509M311 494L327 493M311 494L296 486M406 175L420 162M406 175L396 163M406 175L391 179M406 175L402 186M227 373L230 362M227 373L221 381M227 373L235 381M227 373L235 371M361 624L351 646M361 624L379 627M361 624L367 643M361 624L368 609M439 298L433 305M439 298L439 288M439 298L432 294M439 298L444 305M511 308L503 310M511 308L518 316M511 308L522 307M511 308L508 318M511 308L505 303M376 324L369 322M376 324L383 321M376 324L368 332M376 324L371 312M376 324L379 311M376 324L378 332M298 650L321 643M298 650L278 651M298 650L335 655M298 650L291 635M298 650L307 636M298 650L290 698M298 650L298 698M298 650L306 698M298 650L314 698M229 632L227 654M229 632L226 607M229 632L247 632M229 632L213 625M229 632L243 649M210 45L225 21M210 45L182 51M210 45L207 62M210 45L208 18M210 45L225 58M227 654L243 649M227 654L202 665M227 654L205 672M227 654L207 680M227 654L210 687M227 654L226 698M227 654L234 698M227 654L242 698M343 332L354 338M343 332L344 339M343 332L342 323M343 332L336 329M343 332L336 336M343 332L349 328M214 200L204 219M214 200L237 209M214 200L225 185M214 200L201 178M417 476L410 476M417 476L412 484M417 476L418 486M417 476L413 470M306 478L298 471M306 478L315 477M306 478L307 468M306 478L296 486M306 478L315 470M407 397L416 400M407 397L398 402M407 397L418 391M407 397L400 395M244 349L244 360M244 349L239 342M244 349L255 345M244 349L249 339M244 349L253 355M244 349L237 355M459 214L458 202M459 214L446 211M459 214L453 219M459 214L471 220M459 214L459 222M277 333L269 324M277 333L285 340M277 333L287 327M277 333L268 335M277 333L273 345M277 333L291 335M277 333L279 325M427 244L423 253M427 244L416 241M427 244L430 255M427 244L424 238M427 244L435 250M246 226L265 218M246 226L265 236M246 226L237 209M246 226L245 242M246 226L252 208M246 226L230 232M299 169L278 157M299 169L317 180M299 169L316 161M299 169L288 177M299 169L301 182M201 398L218 410M201 398L189 391M201 398L193 411M569 222L559 213M569 222L566 233M569 222L561 225M569 222L573 226M569 222L574 218M340 279L333 275M340 279L338 270M340 279L336 286M340 279L349 289M340 279L351 273M393 569L377 570M393 569L407 561M393 569L396 547M393 569L412 589M393 569L416 575M393 569L383 554M186 425L201 423M186 425L193 440M186 425L178 419M186 425L193 411M186 425L178 415M186 425L179 423M186 425L179 431M354 397L344 400M354 397L365 394M354 397L347 389M354 397L356 386M354 397L351 405M465 225L455 228M465 225L471 220M465 225L459 222M384 604L396 625M384 604L410 605M384 604L379 627M384 604L371 593M384 604L368 609M483 155L500 171M483 155L489 178M483 155L499 150M483 155L472 177M483 155L472 143M483 155L469 160M186 310L180 324M186 310L208 310M186 310L204 298M186 310L179 293M324 450L329 458M324 450L332 449M324 450L315 450M324 450L317 442M324 450L325 441M394 439L395 427M394 439L385 446M394 439L392 449M394 439L401 433M394 439L388 429M394 439L399 447M394 439L383 436M394 439L403 440M227 438L211 449M227 438L228 427M227 438L236 432M227 438L233 450M227 438L216 426M213 515L213 533M213 515L188 504M213 515L190 522M213 515L202 488M213 515L235 499M377 570L367 552M377 570L359 574M377 570L371 593M377 570L383 554M234 -7L258 -15M234 -7L243 8M234 -7L221 4M234 -7L242 -22M433 279L427 285M433 279L439 273M433 279L439 288M433 279L425 271M433 279L441 280M433 279L423 279M409 435L401 433M409 435L419 440M409 435L405 425M409 435L411 443M409 435L415 432M409 435L403 440M240 484L238 465M240 484L263 488M240 484L225 476M240 484L258 474M240 484L235 499M466 452L456 455M466 452L477 452M466 452L475 444M466 452L468 439M466 452L460 447M466 452L461 459M521 180L523 165M521 180L500 171M521 180L539 177M521 180L513 190M521 180L530 189M417 329L424 319M417 329L411 334M417 329L415 321M417 329L406 323M417 329L421 342M417 329L427 328M417 329L424 335M422 646L430 638M422 646L407 656M422 646L401 641M422 646L431 654M422 646L431 650M422 646L431 642M309 520L290 506M309 520L324 509M309 520L327 537M309 520L297 542M309 520L310 536M265 218L265 236M265 218L264 199M265 218L288 226M265 218L252 208M265 218L278 212M596 207L586 214M596 207L595 215M596 207L601 210M596 207L602 206M596 207L594 205M404 291L400 298M404 291L411 302M404 291L413 292M404 291L407 284M404 291L397 287M296 342L293 350M296 342L285 340M296 342L303 331M296 342L304 341M296 342L300 349M296 342L291 335M290 437L297 440M290 437L302 431M290 437L293 425M290 437L282 429M170 523L190 522M170 523L168 534M170 523L174 515M170 523L190 538M170 523L170 518M170 523L167 526M204 219L218 243M204 219L181 206M204 219L184 224M199 107L211 137M199 107L226 108M199 107L212 91M199 107L169 111M199 107L226 127M199 107L192 123M427 285L421 291M427 285L439 288M427 285L432 294M427 285L423 279M281 465L285 453M281 465L288 476M281 465L276 478M281 465L289 462M281 465L277 455M213 533L190 522M213 533L204 549M213 533L190 538M263 160L278 157M263 160L254 173M331 128L320 111M331 128L348 122M331 128L318 143M331 128L340 143M559 181L555 196M559 181L539 177M559 181L562 192M559 181L564 189M559 181L562 182M559 181L560 174M407 561L396 547M407 561L416 575M407 561L418 547M407 561L421 560M407 561L421 554M278 157L288 177M278 157L284 140M291 206L288 226M291 206L285 193M291 206L310 192M291 206L278 212M420 162L435 151M420 162L407 140M420 162L434 166M420 162L396 163M523 165L516 144M523 165L500 171M523 165L499 150M523 165L539 177M523 165L533 145M523 165L551 164M389 358L396 360M389 358L387 367M389 358L376 353M389 358L388 350M389 358L395 350M389 358L380 361M475 326L479 318M475 326L476 340M475 326L467 333M475 326L483 329M475 326L467 316M475 326L471 338M475 326L482 337M475 326L466 326M509 432L505 437M509 432L499 432M509 432L500 425M509 432L515 429M509 432L510 435M509 432L514 429M449 85L473 82M449 85L449 114M449 85L435 95M435 151L407 140M435 151L434 166M435 151L433 132M144 60L134 64M144 60L152 80M144 60L146 45M144 60L141 47M144 60L138 55M144 60L135 62M485 65L506 43M485 65L473 82M485 65L495 82M485 65L509 48M396 547L376 532M396 547L418 547M396 547L400 534M396 547L383 554M396 547L410 532M201 423L211 449M201 423L193 440M201 423L218 410M201 423L216 426M201 423L193 411M458 468L455 474M458 468L449 467M458 468L467 473M458 468L466 466M458 468L461 459M458 468L454 462M149 225L166 219M149 225L158 241M149 225L129 239M149 225L133 219M149 225L126 234M489 275L495 271M489 275L495 279M489 275L480 275M489 275L488 263M489 275L485 283M489 275L483 268M328 221L338 212M328 221L330 231M328 221L323 201M328 221L317 222M328 221L337 226M419 -10L431 3M419 -10L397 -9M419 -10L424 -42M419 -10L416 -42M419 -10L408 -42M270 549L294 558M270 549L271 531M270 549L250 560M270 549L282 540M303 303L296 292M303 303L309 311M303 303L293 301M303 303L314 303M303 303L308 298M303 303L298 310M489 292L492 303M489 292L480 301M489 292L485 283M180 141L163 141M180 141L169 111M180 141L192 123M180 141L155 123M180 141L196 146M536 270L526 277M536 270L543 262M536 270L543 272M536 270L531 264M536 270L533 276M536 270L522 271M410 378L402 372M410 378L402 380M410 378L422 381M410 378L412 368M244 383L251 390M244 383L252 383M244 383L235 381M244 383L244 375M244 383L239 388M272 21L267 48M272 21L292 17M272 21L254 24M272 21L266 1M272 21L283 35M427 229L434 234M427 229L431 220M427 229L420 222M427 229L424 238M427 229L436 226M189 553L163 560M189 553L187 578M189 553L204 549M189 553L200 568M189 553L190 538M206 589L226 607M206 589L185 594M206 589L187 578M206 589L221 584M206 589L200 568M206 589L205 608M580 210L586 214M580 210L570 206M580 210L574 218M580 210L577 202M580 210L586 204M580 210L586 204M580 210L578 203M364 355L359 365M364 355L372 364M364 355L376 353M364 355L356 358M364 355L364 347M431 186L417 198M431 186L434 166M431 186L445 175M431 186L432 197M211 449L206 471M211 449L193 440M211 449L233 450M211 449L216 426M211 449L197 455M524 221L531 213M524 221L528 229M524 221L521 227M524 221L536 222M524 221L524 213M524 221L517 220M324 390L328 402M324 390L317 395M324 390L323 379M324 390L334 395M324 390L331 387M515 272L504 266M515 272L504 274M515 272L513 264M515 272L522 271M329 12L343 -17M329 12L324 -16M208 257L218 243M208 257L186 276M208 257L181 261M194 -18L204 -4M194 -18L196 -20M194 -18L192 -13M127 203L129 180M127 203L121 194M127 203L133 219M127 203L119 203M127 203L120 211M255 364L244 360M255 364L256 375M255 364L263 364M255 364L253 355M255 364L265 357M255 364L250 371M470 297L470 308M470 297L461 297M470 297L480 301M470 297L467 290M367 265L373 263M367 265L364 252M367 265L363 272M367 265L371 254M367 265L372 270M341 587L359 574M341 587L354 597M341 587L337 606M341 587L337 569M511 406L521 412M511 406L504 399M511 406L523 405M511 406L510 416M511 406L514 400M371 242L377 238M371 242L378 248M371 242L364 252M371 242L365 236M371 242L370 229M371 242L371 254M371 242L364 244M516 144L523 122M516 144L499 150M516 144L533 145M516 144L507 130M554 148L533 145M554 148L551 164M554 148L555 150M554 148L553 143M175 375L189 391M175 375L173 367M175 375L174 375M175 375L175 383M471 481L461 480M471 481L467 473M471 481L469 484M471 481L475 479M547 319L553 319M547 319L554 312M547 319L541 321M547 319L546 312M547 319L546 325M547 319L553 324M547 319L554 316M126 88L125 84M126 88L122 92M225 21L254 24M225 21L208 18M225 21L243 8M225 21L221 4M500 171L489 178M500 171L499 150M500 171L513 190M321 643L333 632M321 643L335 655M321 643L307 636M369 322L368 332M369 322L371 312M369 322L358 329M369 322L363 318M353 455L361 453M353 455L358 461M353 455L352 467M353 455L357 447M353 455L349 449M353 455L345 458M484 238L496 243M484 238L491 233M484 238L474 241M484 238L484 229M392 519L376 532M392 519L400 534M392 519L386 509M392 519L402 509M392 519L410 518M392 519L380 520M226 607L241 581M226 607L213 625M226 607L221 584M226 607L205 608M372 220L382 210M372 220L370 229M372 220L370 211M372 220L383 219M372 220L359 222M372 220L380 227M180 324L195 341M180 324L179 293M211 137L226 127M211 137L192 123M211 137L196 146M492 431L494 420M492 431L490 441M492 431L499 432M492 431L500 425M492 431L487 426M492 431L497 439M492 431L486 435M479 318L470 308M479 318L483 329M479 318L467 316M479 318L486 320M479 318L488 309M410 476L404 482M410 476L412 484M410 476L401 471M410 476L413 470M374 112L360 99M374 112L348 122M374 112L385 137M374 112L386 86M404 482L412 484M404 482L401 471M218 243L245 242M218 243L230 232M393 319L387 307M393 319L383 321M393 319L406 323M393 319L403 317M393 319L394 311M524 371L532 365M524 371L523 359M524 371L526 377M524 371L517 362M524 371L517 375M524 371L531 372M354 338L344 339M354 338L354 347M354 338L360 340M354 338L358 329M354 338L349 328M354 338L346 347M458 202L446 211M458 202L444 199M458 202L459 191M458 202L470 200M446 487L441 484M446 487L449 483M446 487L450 492M446 487L455 489M446 487L442 491M446 487L445 482M446 487L447 492M267 48L286 54M267 48L254 24M267 48L242 65M267 48L283 35M310 407L301 404M310 407L303 411M310 407L310 414M310 407L312 400M387 307L380 303M387 307L383 321M387 307L379 311M387 307L389 296M387 307L394 311M387 307L393 303M447 478L442 478M447 478L449 483M447 478L449 472M447 478L445 474M447 478L445 482M447 478L452 478M522 347L519 339M522 347L523 359M522 347L528 352M522 347L526 342M522 347L512 343M470 308L461 297M470 308L467 316M470 308L480 301M470 308L460 307M328 322L319 320M328 322L342 323M328 322L325 334M328 322L336 329M328 322L336 314M328 322L324 313M216 566L230 560M216 566L204 549M216 566L221 584M216 566L200 568M352 168L330 155M352 168L365 163M352 168L336 170M188 504L176 503M188 504L190 522M188 504L202 488M188 504L174 515M188 504L176 495M188 504L173 511M552 244L547 254M552 244L555 250M552 244L553 237M552 244L560 242M552 244L542 250M552 244L558 245M433 305L438 310M433 305L423 302M433 305L432 294M433 305L426 309M433 305L444 305M494 253L504 247M494 253L496 243M494 253L497 262M494 253L501 255M494 253L487 255M414 459L427 456M414 459L403 456M414 459L414 449M414 459L409 464M414 459L406 450M351 441L349 432M351 441L357 438M351 441L343 443M351 441L357 447M351 441L349 449M226 108L212 91M226 108L226 127M226 108L241 118M427 456L414 449M427 456L434 445M427 456L424 446M427 456L430 468M427 456L436 461M427 456L439 453M412 484L418 486M412 484L410 491M412 484L415 489M506 43L496 36M506 43L509 48M506 43L505 41M488 358L481 353M488 358L480 360M488 358L500 354M488 358L493 352M423 206L417 198M423 206L415 209M423 206L423 215M423 206L432 197M423 206L430 211M538 236L535 244M538 236L528 229M538 236L544 234M538 236L528 240M538 236L538 229M253 410L264 404M253 410L258 417M253 410L251 398M253 410L245 406M253 410L258 400M403 456L409 464M403 456L396 456M403 456L399 447M403 456L406 450M403 456L402 464M476 340L471 338M476 340L477 347M476 340L482 337M476 340L469 343M476 340L471 347M519 339L510 336M519 339L527 335M519 339L520 332M519 339L526 342M519 339L512 343M446 211L444 199M446 211L453 219M446 211L445 219M446 211L439 214M524 396L523 385M524 396L515 393M524 396L523 405M524 396L514 400M524 396L530 398M524 396L529 400M524 396L533 393M477 283L480 275M477 283L472 277M477 283L485 283M477 283L467 290M424 486L422 490M424 486L418 486M424 486L428 491M424 486L428 481M424 486L433 484M424 486L423 490M535 244L529 247M535 244L528 240M535 244L542 250M535 244L534 249M163 141L149 165M163 141L155 123M225 282L219 297M225 282L241 275M397 72L369 81M397 72L395 49M397 72L368 63M397 72L416 63M397 72L386 86M397 72L404 89M244 360L230 362M244 360L253 355M244 360L250 371M244 360L237 355M244 360L241 368M285 453L289 462M285 453L277 455M349 432L357 438M349 432L356 425M349 432L346 422M349 432L343 443M349 432L362 432M431 3L451 6M431 3L443 23M489 207L497 202M489 207L481 206M489 207L504 212M489 207L494 217M489 207L482 215M489 207L490 195M373 263L384 256M373 263L371 254M373 263L382 264M373 263L378 269M373 263L372 270M208 310L219 297M208 310L204 298M208 310L220 329M208 310L220 309M379 152L365 163M379 152L396 163M379 152L385 137M379 152L383 166M379 152L394 148M512 382L506 391M512 382L523 385M512 382L515 393M512 382L503 384M512 382L506 375M512 382L517 375M504 266L504 274M504 266L495 271M504 266L497 262M504 266L513 264M504 266L501 255M414 449L424 446M414 449L419 440M414 449L411 443M414 449L406 450M330 155L316 161M330 155L336 170M330 155L318 143M330 155L340 143M523 122L533 112M523 122L533 145M523 122L542 118M523 122L507 130M523 122L547 128M316 376L309 367M316 376L306 381M316 376L323 379M316 376L318 367M316 376L305 374M390 192L392 204M390 192L377 177M390 192L391 179M390 192L377 195M390 192L402 186M478 477L467 473M478 477L475 466M478 477L475 479M478 477L481 474M417 198L415 209M417 198L402 186M417 198L432 197M417 198L408 203M245 323L251 309M245 323L232 329M245 323L259 322M245 323L235 316M245 323L249 339M316 295L323 295M316 295L316 286M316 295L309 290M316 295L314 303M316 295L308 298M373 509L355 512M373 509L375 495M373 509L386 509M373 509L367 521M373 509L366 498M373 509L357 502M373 509L380 520M290 395L290 406M290 395L300 388M290 395L277 391M290 395L298 396M290 395L282 384M290 395L294 384M290 395L279 398M397 -9L385 -20M397 -9L396 10M397 -9L408 -42M397 -9L400 -42M298 129L320 111M298 129L318 143M298 129L284 140M186 276L181 261M186 276L179 293M269 350L262 349M269 350L265 357M269 350L273 345M269 350L261 340M269 350L275 354M367 552L359 574M367 552L376 532M367 552L351 561M367 552L356 540M367 552L383 554M369 81L360 99M369 81L368 63M369 81L386 86M359 574L354 597M359 574L337 569M359 574L351 561M359 574L371 593M442 467L430 468M442 467L449 467M442 467L449 472M442 467L445 458M442 467L439 473M442 467L445 474M442 467L436 461M411 353L404 356M411 353L410 360M411 353L412 343M411 353L406 348M411 353L418 359M412 589L416 575M412 589L410 605M412 589L424 591M412 589L425 581M412 589L426 586M337 460L329 458M337 460L346 466M337 460L340 453M337 460L345 458M219 297L231 307M219 297L204 298M219 297L220 309M524 264L518 258M524 264L531 264M524 264L513 264M524 264L525 259M524 264L522 271M544 364L538 365M544 364L541 371M544 364L544 363M396 360L404 356M396 360L395 373M396 360L387 367M396 360L395 350M396 360L404 364M297 440L302 431M297 440L309 440M297 440L305 446M298 471L288 476M298 471L300 461M298 471L289 462M298 471L307 468M298 471L296 486M355 47L362 24M355 47L328 45M355 47L368 63M355 47L342 58M292 17L283 35M376 532L400 534M376 532L367 521M376 532L356 540M376 532L383 554M376 532L380 520M384 256L387 262M384 256L378 248M384 256L391 247M384 256L371 254M384 256L382 264M313 247L312 257M313 247L306 229M313 247L317 237M313 247L303 249M313 247L324 241M313 247L318 253M396 625L410 605M396 625L379 627M396 625L401 641M228 427L218 410M228 427L232 419M228 427L236 432M228 427L216 426M228 427L238 425M504 247L503 235M504 247L496 243M504 247L513 252M504 247L510 243M504 247L501 255M265 236L288 226M265 236L264 253M265 236L245 242M265 236L281 240M480 460L477 452M480 460L485 464M480 460L485 453M480 460L475 466M480 460L489 458M344 400L343 408M344 400L341 392M344 400L337 401M344 400L347 389M344 400L351 405M357 438L362 432M357 438L357 447M489 178L472 177M489 178L479 191M489 178L490 195M343 408L337 401M343 408L338 417M343 408L335 410M343 408L351 405M343 408L345 415M423 253L416 241M423 253L414 253M423 253L417 259M423 253L430 255M423 253L424 264M416 274L415 282M416 274L409 277M416 274L425 271M416 274L415 266M416 274L410 271M416 274L423 279M442 248L444 260M442 248L444 241M442 248L454 254M442 248L451 245M442 248L437 258M442 248L435 250M362 373L359 365M362 373L366 383M362 373L372 364M362 373L374 371M362 373L373 382M362 373L359 380M362 373L355 372M370 294L371 284M370 294L378 290M370 294L357 292M370 294L380 303M370 294L363 300M370 294L363 286M481 353L487 347M481 353L480 360M481 353L477 347M481 353L473 355M481 353L493 352M481 353L474 351M404 356L410 360M404 356L395 350M404 356L406 348M404 356L404 364M317 180L331 186M317 180L316 161M317 180L336 170M317 180L310 192M317 180L301 182M239 342L231 350M239 342L232 329M239 342L249 339M239 342L237 355M421 45L402 31M421 45L395 49M421 45L416 63M421 45L439 44M438 310L435 318M438 310L426 309M438 310L444 305M266 297L251 296M266 297L276 301M266 297L274 288M266 297L262 307M266 297L253 281M269 314L269 324M269 314L276 301M269 314L259 322M269 314L279 310M269 314L262 307M269 314L276 318M321 435L317 442M321 435L309 440M321 435L328 430M321 435L316 427M321 435L325 441M258 -15L275 -18M258 -15L266 1M258 -15L243 8M258 -15L242 -22M258 -15L264 -42M258 -15L256 -42M338 212L346 223M338 212L323 201M338 212L350 204M338 212L356 213M338 212L337 226M338 212L336 199M430 638L431 642M430 638L430 634M499 150L507 130M290 406L286 417M290 406L301 404M290 406L295 411M290 406L298 396M290 406L282 412M182 51L163 42M182 51L207 62M297 275L301 262M297 275L288 267M297 275L302 286M297 275L294 284M206 471L225 476M206 471L202 488M206 471L197 455M439 273L448 270M439 273L425 271M439 273L441 280M439 273L438 265M457 291L461 297M457 291L459 280M457 291L467 290M331 186L347 192M331 186L323 201M331 186L336 170M331 186L310 192M331 186L336 199M149 165L129 180M149 165L148 181M553 224L559 233M553 224L543 224M553 224L559 213M553 224L561 225M553 224L549 230M501 320L503 310M501 320L503 329M501 320L486 320M501 320L495 312M501 320L508 318M397 276L404 272M397 276L395 271M397 276L393 277M397 276L404 278M397 276L395 281M397 276L399 271M375 400L375 392M375 400L365 394M375 400L386 402M375 400L383 392M375 400L381 410M253 434L245 437M253 434L262 441M253 434L246 428M555 196L543 206M555 196L561 204M555 196L562 192M555 196L565 197M503 310L492 303M503 310L495 312M503 310L508 318M503 310L505 303M504 274L502 283M504 274L495 271M504 274L495 279M347 263L338 270M347 263L350 257M347 263L336 257M347 263L351 273M347 263L343 255M472 177L479 191M472 177L459 191M472 177L469 160M530 302L530 310M530 302L526 292M530 302L542 298M530 302L522 307M530 302L534 293M396 267L395 271M396 267L392 266M396 267L399 261M396 267L399 271M396 267L401 267M264 199L285 193M264 199L252 208M264 199L278 212M264 199L272 188M264 199L255 189M238 465L225 476M238 465L233 450M238 465L258 474M238 465L251 463M458 241L466 245M458 241L451 245M458 241L461 253M458 241L452 237M506 391L497 394M506 391L515 393M506 391L504 399M506 391L496 385M506 391L503 384M506 391L514 400M297 619L321 606M297 619L291 635M297 619L307 636M212 91L207 62M387 226L392 232M387 226L383 219M387 226L386 238M387 226L394 222M387 226L380 227M549 275L557 276M549 275L540 281M549 275L553 271M549 275L543 272M549 275L551 282M549 275L557 277M455 365L456 356M455 365L446 355M455 365L461 360M455 365L467 368M455 365L445 363M559 233L566 233M559 233L553 237M559 233L560 242M559 233L561 225M559 233L549 230M559 233L564 240M315 326L319 320M315 326L325 334M315 326L308 325M315 326L311 319M315 326L317 333M315 326L310 336M319 320L325 334M319 320L317 314M319 320L324 313M319 320L311 319M329 458L332 449M329 458L340 453M416 575L421 560M416 575L424 571M416 575L425 581M416 575L425 578M416 575L424 570M399 342L394 337M399 342L403 334M399 342L412 343M399 342L395 350M399 342L406 348M251 309L251 296M251 309L259 322M251 309L235 316M251 309L241 303M251 309L262 307M434 445L424 446M434 445L430 435M434 445L445 445M434 445L439 435M434 445L439 453M292 586L276 584M292 586L290 572M341 392L341 380M341 392L337 401M341 392L347 389M341 392L334 395M341 392L331 387M341 380L330 376M341 380L350 381M341 380L347 389M341 380L348 373M341 380L331 387M341 380L337 372M327 344L315 347M327 344L325 334M327 344L336 336M327 344L333 355M327 344L324 354M327 344L336 343M327 344L318 341M533 112L542 118M533 112L529 92M533 112L535 99M533 112L541 113M533 112L538 105M407 140L433 132M407 140L396 163M407 140L385 137M407 140L394 148M365 163L377 177M365 163L383 166M251 296L241 303M251 296L262 307M251 296L253 281M355 512L349 498M355 512L367 521M355 512L341 513M355 512L357 502M382 210L392 204M382 210L370 211M382 210L383 219M382 210L377 195M382 210L391 213M264 404L265 395M264 404L272 398M264 404L258 400M312 257L301 262M312 257L318 262M312 257L303 249M312 257L309 266M312 257L318 253M402 210L392 204M402 210L409 216M402 210L402 219M402 210L391 213M402 210L408 203M395 427L401 433M395 427L389 421M395 427L400 419M395 427L405 425M395 427L388 429M169 111L156 97M169 111L192 123M169 111L155 123M288 226L306 229M288 226L296 242M288 226L278 212M288 226L281 240M434 166L445 175M444 260L457 261M444 260L448 270M444 260L454 254M444 260L437 258M444 260L438 265M300 388L307 394M300 388L298 396M300 388L306 381M300 388L294 384M514 213L510 204M514 213L504 212M514 213L509 220M514 213L524 213M514 213L517 220M166 219L181 206M166 219L158 241M166 219L178 240M166 219L184 224M286 54L283 35M546 352L541 356M546 352L547 357M546 352L541 348M546 352L546 356M546 352L548 348M284 320L289 309M284 320L287 327M284 320L292 316M284 320L279 310M284 320L279 325M284 320L276 318M346 223L357 229M346 223L343 237M346 223L356 213M346 223L359 222M346 223L337 226M333 632L351 646M333 632L321 606M333 632L337 606M333 632L335 655M333 275L321 276M333 275L338 270M333 275L336 286M333 275L324 268M333 275L323 283M333 275L328 288M333 275L332 264M518 316L524 324M518 316L514 322M518 316L522 307M518 316L508 318M518 316L525 317M536 375L538 365M536 375L533 379M536 375L531 372M536 375L540 378M536 375L539 378M323 295L316 286M323 295L324 306M323 295L332 297M323 295L314 303M323 295L323 283M323 295L328 288M467 416L463 418M467 416L465 413M467 416L470 413M467 416L473 417M354 597L337 606M354 597L371 593M354 597L368 609M330 376L328 368M330 376L323 379M330 376L331 387M330 376L337 372M230 560L241 581M230 560L221 584M230 560L250 560M543 224L544 234M543 224L538 215M543 224L536 222M543 224L538 229M543 224L549 230M367 279L371 284M367 279L375 278M367 279L363 272M367 279L371 275M367 279L360 280M367 279L363 286M277 391L282 384M277 391L272 398M277 391L270 385M277 391L279 398M337 401L328 402M337 401L335 410M337 401L334 395M351 646L367 643M351 646L335 655M351 646L354 698M351 646L362 698M129 180L121 194M129 180L118 174M129 180L148 181M129 180L118 183M129 180L117 179M129 180L118 187M269 324L259 322M269 324L268 335M269 324L279 325M269 324L276 318M254 24L266 1M254 24L243 8M457 261L467 262M457 261L463 272M457 261L454 272M457 261L448 270M457 261L454 254M457 261L461 253M264 253L264 275M264 253L245 242M264 253L281 240M264 253L275 268M328 402L317 395M328 402L335 410M328 402L334 395M328 402L329 414M407 656L401 641M407 656L431 654M407 656L386 698M407 656L394 698M407 656L402 698M407 656L410 698M407 656L433 674M407 656L432 666M407 656L432 658M424 446L423 433M424 446L419 440M424 446L430 435M377 238L378 248M377 238L370 229M377 238L386 238M377 238L380 227M430 468L430 475M430 468L439 473M430 468L436 461M321 276L309 281M321 276L316 286M321 276L313 273M321 276L324 268M321 276L323 283M293 350L285 357M293 350L285 340M293 350L300 349M293 350L297 357M332 449L333 441M332 449L340 453M332 449L343 443M332 449L325 441M163 560L163 547M163 560L158 571M163 560L155 555M163 560L155 555M163 560L156 563M530 310L533 319M530 310L522 307M530 310L525 317M530 310L537 313M242 65L225 58M433 132L449 114M275 415L264 421M275 415L286 417M275 415L282 412M418 547L410 532M418 547L421 554M418 547L420 546M418 547L419 538M424 319L415 321M424 319L435 318M424 319L427 328M424 319L415 311M424 319L426 309M529 247L522 247M529 247L524 251M529 247L528 240M529 247L534 249M529 247L530 250M461 297L460 307M461 297L467 290M549 132L533 145M549 132L550 135M549 132L547 128M344 339L336 336M344 339L346 347M344 339L336 343M402 31L395 49M402 31L385 26M402 31L396 10M343 294L346 303M343 294L337 303M343 294L336 286M343 294L349 289M343 294L332 297M343 294L356 301M586 214L574 218M586 214L585 221M586 214L586 204M586 214L591 219M586 214L589 220M586 214L595 215M586 214L594 205M359 365L350 366M359 365L372 364M359 365L356 358M359 365L355 372M375 392L379 384M375 392L366 383M375 392L365 394M375 392L383 392M375 392L373 382M387 262L392 266M387 262L382 264M387 262L399 261M387 262L386 267M338 417L335 410M338 417L346 422M338 417L329 414M338 417L333 424M338 417L345 415M245 437L236 432M245 437L233 450M245 437L246 428M181 206L184 224M434 234L441 231M434 234L444 241M434 234L424 238M434 234L436 226M534 350L534 343M534 350L541 356M534 350L528 352M534 350L533 358M534 350L541 348M440 339L430 340M440 339L436 328M440 339L435 347M440 339L444 345M440 339L443 327M392 204L377 195M392 204L391 213M441 484L442 478M441 484L438 481M441 484L442 491M441 484L445 482M441 484L433 484M441 484L439 493M539 177L551 164M539 177L530 189M539 177L560 174M388 374L391 381M388 374L379 377M388 374L395 373M388 374L387 367M317 395L307 394M317 395L312 400M441 231L444 241M441 231L448 226M441 231L452 237M441 231L436 226M231 390L221 381M231 390L235 381M231 390L237 401M231 390L239 388M195 627L213 625M195 627L186 633M195 627L205 608M195 627L183 629M195 627L187 636M195 627L191 643M204 -4L208 18M204 -4L188 -5M204 -4L221 4M204 -4L196 -20M204 -4L192 -13M204 -4L189 -6M401 471L409 464M401 471L413 470M401 471L393 473M401 471L402 464M467 262L463 272M467 262L470 269M467 262L461 253M467 262L475 265M399 388L391 381M399 388L402 380M399 388L393 393M399 388L400 395M193 440L180 440M193 440L197 455M193 440L179 431M193 440L180 439M193 440L180 447M218 410L232 419M218 410L216 426M218 410L193 411M534 392L530 385M534 392L530 398M534 392L529 400M534 392L533 393M534 392L536 386M264 421L258 417M451 386L442 385M451 386L461 393M451 386L450 395M451 386L446 379M451 386L457 382M345 315L346 303M345 315L342 323M345 315L351 320M345 315L337 303M345 315L350 309M345 315L336 314M258 453L262 441M258 453L270 450M258 453L251 463M487 347L477 347M487 347L494 343M487 347L482 337M487 347L493 352M396 503L386 509M396 503L402 509M396 503L402 498M396 503L392 496M378 248L386 238M378 248L391 247M378 248L371 254M332 479L341 481M332 479L327 493M332 479L336 488M332 479L323 474M346 303L337 303M346 303L350 309M346 303L356 301M385 446L392 449M385 446L387 457M385 446L378 442M385 446L383 436M385 446L380 451M325 421L316 419M325 421L328 430M325 421L316 427M325 421L329 414M325 421L333 424M325 421L322 414M534 334L541 329M534 334L534 343M534 334L527 335M534 334L526 329M534 334L531 326M534 334L541 342M534 334L545 334M371 284L378 290M371 284L375 278M371 284L381 281M371 284L363 286M554 256L547 254M554 256L555 250M554 256L550 263M554 256L557 261M554 256L556 253M503 235L496 243M503 235L498 223M503 235L491 233M503 235L507 227M503 235L510 243M467 333L471 338M467 333L466 326M467 333L466 339M461 480L455 474M461 480L467 473M461 480L460 489M461 480L455 481M461 480L465 486M461 480L462 488M461 480L469 484M456 455L453 446M456 455L445 458M456 455L460 447M456 455L461 459M456 455L454 462M391 381L379 377M391 381L395 373M391 381L379 384M391 381L383 392M391 381L402 380M391 381L393 393M262 518L270 504M262 518L271 531M533 145L551 164M533 145L553 143M533 145L550 135M533 145L547 128M523 385L515 393M523 385L526 377M523 385L530 385M523 385L517 375M523 385L533 393M442 385L433 382M442 385L441 395M442 385L450 395M442 385L446 379M442 385L435 389M442 385L436 376M362 206L370 211M362 206L350 204M362 206L356 213M444 199L459 191M444 199L432 197M392 449L387 457M392 449L396 456M392 449L399 447M531 213L538 215M531 213L536 222M531 213L536 205M531 213L524 213M524 324L533 319M524 324L514 322M524 324L526 329M524 324L520 332M524 324L531 326M524 324L525 317M528 229L528 240M528 229L521 227M528 229L536 222M528 229L538 229M479 433L482 442M479 433L475 444M479 433L468 439M479 433L487 426M479 433L486 435M479 433L471 432M497 394L504 399M497 394L490 392M497 394L496 385M497 394L486 400M496 243L491 233M402 372L395 373M402 372L402 380M402 372L412 368M402 372L404 364M290 506L270 504M290 506L296 486M400 534L410 518M400 534L410 532M347 192L336 170M347 192L350 204M347 192L336 199M185 594L187 578M185 594L179 615M185 594L166 595M185 594L205 608M185 594L168 601M185 594L171 608M385 -20L363 -20M385 -20L400 -42M385 -20L392 -42M385 -20L384 -42M385 -20L376 -42M408 234L416 241M408 234L406 245M408 234L400 228M408 234L412 224M408 234L401 236M302 431L309 440M302 431L293 425M302 431L316 427M302 431L305 424M360 99L348 122M360 99L386 86M362 24L385 26M375 495L366 498M375 495L366 490M285 193L288 177M285 193L310 192M285 193L278 212M285 193L272 188M285 193L301 182M176 503L176 495M176 503L175 503M176 503L173 511M494 420L487 418M494 420L500 425M494 420L487 426M442 478L439 473M442 478L438 481M442 478L445 474M442 478L445 482M442 478L437 476M346 466L352 467M346 466L345 458M231 307L235 316M231 307L220 309M231 307L241 303M416 241L406 245M416 241L414 253M416 241L424 238M237 209L225 185M237 209L252 208M237 209L230 232M482 385L490 392M482 385L475 382M482 385L487 378M456 356L446 355M456 356L461 360M456 356L461 354M456 356L452 348M456 356L459 349M263 488L270 504M263 488L258 474M263 488L276 478M405 264L414 253M405 264L417 259M405 264L415 266M405 264L399 261M405 264L407 252M405 264L410 271M405 264L401 267M255 617L260 598M255 617L247 632M320 111L318 143M350 366L348 373M350 366L356 358M350 366L343 367M350 366L355 372M356 425L346 422M356 425L362 432M356 425L358 416M230 362L231 350M230 362L220 358M230 362L235 371M230 362L237 355M230 362L241 368M321 606L337 606M395 49L385 26M395 49L368 63M395 49L416 63M511 367L503 368M511 367L506 375M511 367L517 362M511 367L517 375M379 466L387 457M379 466L370 470M379 466L378 475M379 466L377 457M379 466L372 463M379 466L386 467M433 382L422 381M433 382L435 389M433 382L428 376M433 382L436 376M433 382L427 388M189 391L193 411M189 391L177 396M189 391L175 383M189 391L176 391M189 391L177 399M379 377L379 384M379 377L387 367M379 377L374 371M379 377L373 382M225 185L201 178M225 185L215 168M342 323L351 320M342 323L336 329M342 323L336 314M342 323L349 328M395 373L387 367M395 373L402 380M395 373L404 364M386 509L402 509M386 509L380 520M243 397L251 390M243 397L251 398M243 397L237 401M243 397L245 406M243 397L239 388M316 419L316 427M316 419L305 424M316 419L310 414M316 419L322 414M483 329L490 333M483 329L482 337M483 329L486 320M350 381L347 389M350 381L348 373M350 381L356 386M350 381L359 380M350 381L355 372M163 547L168 534M163 547L161 540M163 547L157 547M163 547L155 555M396 163L391 179M396 163L383 166M396 163L394 148M379 384L383 392M379 384L373 382M510 204L497 202M510 204L513 190M510 204L504 212M510 204L519 198M480 360L473 355M411 334L406 323M411 334L421 342M411 334L403 334M411 334L412 343M378 290L380 303M378 290L390 287M378 290L387 281M378 290L389 296M378 290L381 281M315 477L323 474M315 477L315 470M285 357L290 363M285 357L297 357M285 357L283 364M285 357L275 354M317 357L315 347M317 357L309 367M317 357L324 354M317 357L318 367M317 357L323 363M158 241L178 240M430 475L439 473M430 475L434 480M430 475L428 481M430 475L437 476M415 321L406 323M415 321L415 311M415 321L410 317M163 42L166 24M163 42L152 38M163 42L157 29M163 42L146 45M338 363L328 368M338 363L333 355M338 363L337 372M338 363L323 363M338 363L343 367M401 433L405 425M401 433L403 440M341 481L336 488M254 173L255 189M473 82L495 82M330 231L343 237M330 231L317 222M330 231L317 237M330 231L337 226M330 231L324 241M551 164L561 171M551 164L560 174M551 164L559 166M551 164L557 158M551 164L555 150M557 276L553 271M557 276L557 277M557 276L557 269M241 275L253 281M286 417L299 418M286 417L293 425M286 417L282 429M286 417L295 411M286 417L282 412M411 108L435 95M411 108L404 89M412 505L402 509M412 505L409 497M412 505L402 498M412 505L413 500M412 505L413 507M412 505L412 499M402 509L410 518M402 509L402 498M402 509L415 511M402 509L413 507M446 355L452 348M446 355L438 356M446 355L444 345M446 355L445 363M357 292L349 289M357 292L363 300M357 292L363 286M357 292L356 301M315 347L304 341M315 347L324 354M315 347L310 336M315 347L318 341M467 13L478 11M467 13L471 0M467 13L451 6M467 13L443 23M467 13L475 5M355 244L350 257M355 244L357 251M355 244L348 243M355 244L364 244M355 244L357 237M533 319L541 321M533 319L531 326M533 319L525 317M533 319L537 313M392 232L400 228M392 232L386 238M392 232L394 222M392 232L401 236M392 232L395 241M121 194L118 187M121 194L118 195M121 194L119 203M226 127L241 118M463 272L470 269M463 272L459 280M463 272L454 272M463 272L472 277M490 333L494 343M490 333L482 337M490 333L486 320M490 333L501 337M387 457L396 456M387 457L377 457M387 457L386 467M387 457L380 451M423 433L419 440M423 433L430 435M423 433L415 432M348 122L340 143M497 202L504 212M497 202L490 195M466 245L474 241M466 245L461 253M315 450L317 442M315 450L309 440M315 450L305 446M323 201L317 222M323 201L310 192M323 201L336 199M461 393L464 383M461 393L469 396M461 393L450 395M461 393L470 388M461 393L457 382M410 605L423 622M410 605L424 591M410 605L428 610M410 605L427 602M526 277L530 286M526 277L521 285M526 277L533 276M526 277L522 271M423 622L430 626M423 622L429 618M423 622L428 610M409 216L402 219M409 216L415 209M409 216L420 222M409 216L412 224M409 216L408 203M372 439L378 442M372 439L373 451M372 439L370 432M187 578L200 568M296 292L309 290M296 292L293 301M296 292L302 286M296 292L308 298M296 292L294 284M262 441L270 450M241 581L260 598M241 581L221 584M241 581L250 560M275 -18L266 1M275 -18L288 -42M275 -18L280 -42M275 -18L272 -42M275 -18L264 -42M552 294L554 288M552 294L545 292M552 294L556 301M552 294L557 293M552 294L548 301M552 294L556 301M552 294L557 293M309 367L298 364M309 367L318 367M309 367L305 374M260 598L276 584M466 -12L451 6M466 -12L456 -21M466 -12L467 -9M466 -12L464 -17M559 213L570 206M559 213L561 225M559 213L561 204M559 213L574 218M301 404L307 394M301 404L295 411M301 404L298 396M301 404L303 411M301 404L312 400M406 245L414 253M406 245L399 247M406 245L401 236M406 245L407 252M251 390L252 383M251 390L251 398M251 390L265 395M251 390L239 388M251 390L258 400M324 509L327 493M324 509L341 513M324 509L327 537M306 229L317 222M306 229L296 242M306 229L317 237M306 229L303 249M430 340L436 328M430 340L421 342M430 340L427 328M430 340L435 347M430 340L428 349M430 340L424 335M366 383L365 394M366 383L356 386M366 383L373 382M366 383L359 380M436 328L435 318M436 328L427 328M436 328L443 327M365 394L356 386M513 252L510 243M513 252L516 254M513 252L518 248M498 223L485 222M498 223L491 233M498 223L504 212M498 223L494 217M498 223L507 227M498 223L509 220M444 241L451 245M444 241L452 237M517 292L526 292M517 292L509 289M517 292L521 285M489 114L507 130M489 114L468 124M207 62L225 58M325 334L336 329M325 334L336 336M325 334L317 333M325 334L318 341M247 632L243 649M361 453L358 461M361 453L373 451M361 453L365 459M361 453L357 447M515 393L514 400M202 358L220 358M202 358L195 341M202 358L211 365M202 358L207 345M409 497L402 498M409 497L412 499M409 497L410 491M327 259L336 257M327 259L333 250M327 259L318 262M327 259L326 250M327 259L324 268M327 259L332 264M327 259L318 253M453 219L445 219M453 219L455 228M453 219L448 226M453 219L459 222M441 412L445 411M441 412L445 419M441 412L436 410M309 281L316 286M309 281L313 273M309 281L309 290M309 281L302 286M178 240L184 224M178 240L181 261M547 254L536 257M547 254L555 250M547 254L543 262M547 254L542 250M547 254L550 263M231 350L220 358M231 350L237 355M513 190L530 189M513 190L519 198M156 97L155 123M156 97L152 80M543 206L537 197M543 206L538 215M543 206L536 205M449 114L468 124M449 114L435 95M270 450L277 455M264 275L274 288M264 275L253 281M264 275L275 268M328 45L320 76M328 45L342 58M380 303L379 311M380 303L389 296M337 569L351 561M337 569L324 563M364 252L357 251M364 252L371 254M364 252L364 244M190 522L174 515M190 522L190 538M335 410L329 414M276 301L279 310M276 301L274 288M276 301L285 301M276 301L262 307M414 253L417 259M414 253L407 252M536 257L543 262M536 257L531 264M536 257L530 259M536 257L542 250M536 257L534 254M485 222L491 233M485 222L494 217M485 222L482 215M485 222L478 225M485 222L484 229M383 321L379 311M383 321L378 332M158 571L156 563M158 571L158 571M158 571L160 578M392 412L382 419M392 412L386 402M392 412L389 421M392 412L400 419M392 412L398 402M392 412L381 410M298 376L298 364M298 376L306 381M298 376L294 384M298 376L290 372M298 376L305 374M491 233L484 229M266 1L243 8M351 561L356 540M377 177L391 179M377 177L377 195M377 177L383 166M232 419L238 425M354 347L360 340M354 347L346 347M354 347L356 358M354 347L364 347M492 303L480 301M492 303L488 309M492 303L495 312M492 303L505 303M349 498L341 513M349 498L358 492M349 498L336 488M349 498L357 502M555 250L556 253M555 250L558 245M479 191L459 191M479 191L481 206M479 191L490 195M479 191L470 200M373 343L360 340M373 343L368 332M373 343L376 353M373 343L382 338M373 343L378 332M373 343L364 347M373 343L380 347M255 345L262 349M255 345L249 339M255 345L253 355M255 345L261 340M410 518L416 516M410 518L410 532M410 518L415 511M410 518L416 523M410 518L415 515M532 365L523 359M532 365L533 358M532 365L538 365M532 365L531 372M521 412L523 405M521 412L510 416M521 412L522 415M521 412L526 408M358 461L352 467M358 461L361 471M358 461L365 459M299 418L293 425M299 418L295 411M299 418L305 424M299 418L303 411M299 418L310 414M316 286L309 290M316 286L323 283M208 18L221 4M370 470L378 475M370 470L372 463M370 470L361 471M370 470L365 459M530 189L537 197M530 189L519 198M245 242L230 232M523 255L518 258M523 255L524 251M523 255L520 252M523 255L526 255M523 255L525 259M523 255L527 252M415 282L409 277M415 282L421 291M415 282L413 292M415 282L407 284M415 282L423 279M351 320L358 329M351 320L350 309M351 320L349 328M351 320L363 318M394 337L382 338M394 337L403 334M357 229L365 236M357 229L370 229M357 229L359 222M357 229L357 237M278 371L271 378M278 371L270 371M278 371L290 372M278 371L283 364M278 371L283 377M365 236L370 229M365 236L364 244M365 236L357 237M537 197L536 205M288 476L276 478M288 476L289 462M288 476L296 486M570 206L561 204M570 206L574 218M570 206L577 202M570 206L570 202M510 336L503 329M510 336L501 337M510 336L520 332M510 336L510 329M510 336L512 343M370 229L359 222M370 229L380 227M166 24L157 29M166 24L166 17M166 24L161 22M343 237L337 226M343 237L348 243M168 534L190 538M168 534L167 526M168 534L164 533M168 534L161 540M406 323L403 317M406 323L403 334M406 323L410 317M467 316L460 307M467 316L466 326M382 419L389 421M382 419L388 429M382 419L373 424M382 419L381 410M409 277L404 272M409 277L407 284M409 277L404 278M409 277L410 271M221 381L235 381M300 461L289 462M300 461L307 468M542 118L547 128M542 118L545 120M542 118L541 113M236 432L233 450M236 432L238 425M236 432L246 428M409 464L413 470M409 464L402 464M386 402L383 392M386 402L398 402M386 402L393 393M386 402L381 410M391 179L402 186M391 179L383 166M459 191L470 200M459 191L445 175M431 220L420 222M431 220L423 215M431 220L439 214M431 220L436 226M431 220L430 211M370 211L356 213M370 211L359 222M370 211L377 195M225 476L202 488M360 340L368 332M360 340L358 329M360 340L364 347M378 442L373 451M378 442L383 436M378 442L380 451M338 270L336 257M338 270L351 273M338 270L332 264M541 329L541 321M541 329L531 326M541 329L545 334M541 329L546 325M481 260L480 253M481 260L488 263M481 260L475 265M481 260L483 268M481 260L487 255M534 343L528 352M534 343L527 335M534 343L541 342M534 343L526 342M534 343L541 348M124 230L133 219M124 230L124 226M124 230L126 234M276 584L290 572M402 219L400 228M402 219L394 222M402 219L412 224M402 219L391 213M523 359L528 352M523 359L533 358M523 359L517 362M317 222L317 237M343 -17L363 -20M343 -17L324 -16M343 -17L352 -42M343 -17L344 -42M343 -17L336 -42M368 332L358 329M368 332L378 332M424 591L427 602M424 591L426 594M424 591L426 586M152 38L157 29M152 38L146 45M152 38L151 34M152 38L146 41M285 340L273 345M285 340L291 335M387 367L374 371M387 367L380 361M385 26L396 10M367 521L356 540M367 521L380 520M390 287L387 281M390 287L389 296M390 287L397 287M390 287L395 281M399 247L391 247M399 247L401 236M399 247L407 252M399 247L395 241M333 441L328 430M333 441L343 443M333 441L325 441M333 441L335 433M424 397L416 400M424 397L431 397M424 397L418 391M424 397L427 388M373 451L377 457M373 451L365 459M373 451L380 451M317 442L309 440M317 442L325 441M350 257L357 251M350 257L348 243M350 257L343 255M403 317L403 305M403 317L394 311M403 317L410 317M450 416L451 411M450 416L445 419M450 416L455 417M450 416L447 414M450 416L454 413M450 416L452 422M192 123L196 146M337 303L336 314M337 303L332 297M337 303L331 308M316 161L336 170M316 161L318 143M470 269L480 275M470 269L472 277M470 269L475 265M455 474L449 467M455 474L467 473M455 474L449 472M455 474L455 481M455 474L452 478M400 228L394 222M400 228L412 224M400 228L401 236M445 219L448 226M445 219L439 214M445 219L436 226M468 124L472 143M320 76L342 58M566 233L561 225M566 233L573 226M566 233L565 240M566 233L572 234M566 233L564 240M566 233L570 235M400 298L411 302M400 298L403 305M400 298L389 296M400 298L393 303M400 298L397 287M441 395L431 397M441 395L450 395M441 395L435 389M474 241L480 253M307 394L298 396M307 394L306 381M307 394L312 400M458 414L463 418M458 414L465 413M458 414L458 420M458 414L457 410M458 414L455 417M458 414L454 413M541 356L533 358M541 356L547 357M541 356L538 365M541 356L541 348M541 356L544 363M541 356L546 356M482 442L490 441M482 442L477 452M482 442L475 444M482 442L485 453M482 442L489 448M482 442L486 435M204 549L200 568M204 549L190 538M371 312L379 311M371 312L363 318M371 312L365 308M201 178L215 168M449 467L449 472M449 467L445 458M449 467L454 462M220 358L211 365M220 358L207 345M288 177L272 188M288 177L301 182M552 327L546 325M552 327L551 332M552 327L553 324M478 11L486 16M478 11L481 10M478 11L475 5M505 437L499 432M505 437L506 443M505 437L497 439M505 437L505 442M505 437L510 435M366 498L366 490M366 498L358 492M366 498L357 502M386 276L387 281M386 276L389 278M386 276L387 273M386 276L382 277M386 276L384 272M419 440L411 443M419 440L415 432M327 493L336 488M179 615L171 608M179 615L175 615M179 615L179 622M518 258L520 252M518 258L516 254M518 258L513 264M518 258L525 259M452 438L453 446M452 438L445 445M452 438L439 435M504 399L514 400M458 344L452 348M458 344L454 336M458 344L459 349M181 261L179 293M310 192L301 182M526 292L530 286M526 292L534 293M526 292L521 285M490 441L497 449M490 441L489 448M490 441L497 439M490 441L486 435M213 625L205 608M459 280L454 272M459 280L467 290M464 383L475 382M464 383L470 388M464 383L457 382M289 309L292 316M289 309L279 310M289 309L293 301M289 309L285 301M289 309L298 310M358 329L349 328M358 329L363 318M523 405L514 400M523 405L528 405M523 405L526 408M523 405L529 400M528 352L533 358M528 352L526 342M303 331L304 341M303 331L308 325M303 331L291 335M303 331L296 327M303 331L310 336M298 364L290 363M298 364L290 372M298 364L297 357M298 364L305 374M554 288L545 292M554 288L551 282M554 288L557 293M554 288L557 285M461 360L461 354M461 360L467 368M461 360L465 358M363 -20L376 -42M363 -20L368 -42M363 -20L360 -42M363 -20L352 -42M166 595L165 594M166 595L168 601M232 329L235 316M232 329L249 339M232 329L220 329M309 440L316 427M309 440L305 446M383 219L394 222M383 219L391 213M383 219L380 227M477 452L475 444M477 452L485 453M411 302L403 305M411 302L423 302M411 302L415 311M411 302L413 292M526 377L530 385M526 377L517 375M526 377L533 379M526 377L531 372M421 342L412 343M421 342L428 349M421 342L424 335M426 416L413 416M426 416L431 413M426 416L432 419M455 228L448 226M455 228L452 237M455 228L459 222M347 389L356 386M252 383L256 375M252 383L244 375M252 383L250 371M287 327L292 316M287 327L291 335M287 327L296 327M287 327L279 325M328 368L323 379M328 368L318 367M328 368L337 372M328 368L323 363M421 291L423 302M421 291L413 292M421 291L432 294M421 291L423 279M327 537L310 536M327 537L324 563M350 309L356 301M294 558L297 542M294 558L290 572M294 558L282 540M256 375L263 364M256 375L263 375M256 375L250 371M328 430L316 427M328 430L325 441M328 430L335 433M328 430L333 424M469 396L479 400M469 396L470 388M471 0L451 6M471 0L475 5M471 0L471 -2M479 415L487 418M479 415L470 413M479 415L473 417M553 237L560 242M553 237L544 234M553 237L549 230M467 473L475 466M467 473L466 466M467 473L475 479M475 444L468 439M389 421L400 419M389 421L388 429M413 416L400 419M413 416L405 425M510 416L516 423M510 416L519 419M510 416L518 422M510 416L522 415M449 483L455 481M449 483L455 489M449 483L445 482M449 483L452 478M468 439L460 447M468 439L471 432M293 425L282 429M293 425L305 424M366 490L358 492M454 272L448 270M540 281L545 292M540 281L530 286M540 281L543 272M540 281L534 293M540 281L551 282M540 281L533 276M263 364L263 375M263 364L265 357M263 364L270 371M502 283L495 279M502 283L509 289M296 242L303 249M296 242L281 240M120 127L120 114M120 127L117 123M120 127L117 131M448 270L441 280M448 270L438 265M545 292L542 298M545 292L534 293M545 292L551 282M545 292L548 301M461 354L459 349M461 354L465 358M379 627L367 643M379 627L401 641M379 627L368 609M371 593L368 609M259 322L268 335M259 322L262 307M481 206L482 215M481 206L490 195M481 206L470 200M400 419L405 425M451 6L443 23M451 6L456 -21M451 6L471 -2M451 6L467 -9M188 -5L189 -6M188 -5L184 1M324 306L332 297M324 306L317 314M324 306L324 313M324 306L314 303M324 306L331 308M262 349L253 355M262 349L265 357M262 349L261 340M367 643L362 698M479 400L486 400M292 316L301 319M292 316L296 327M292 316L298 310M324 -16L336 -42M324 -16L328 -42M324 -16L320 -42M324 -16L312 -42M383 392L393 393M336 329L336 336M129 239L126 234M129 239L128 242M516 423L514 429M516 423L518 422M530 286L534 293M530 286L521 285M530 286L533 276M560 242L558 245M560 242L564 240M495 271L497 262M495 271L495 279M495 271L488 263M297 542L310 536M297 542L282 540M403 305L415 311M403 305L394 311M403 305L393 303M403 305L410 317M527 335L526 329M527 335L520 332M527 335L526 342M358 492L357 502M421 560L424 570M421 560L422 562M421 560L421 554M514 322L520 332M514 322L508 318M514 322L510 329M301 319L309 311M301 319L308 325M301 319L311 319M301 319L296 327M301 319L298 310M522 247L524 251M522 247L528 240M522 247L520 252M522 247L518 248M522 247L519 241M404 272L404 278M404 272L410 271M404 272L399 271M404 272L401 267M445 411L451 411M445 411L445 419M445 411L447 414M243 8L221 4M471 338L469 343M471 338L466 339M350 204L356 213M350 204L336 199M477 347L482 337M477 347L474 351M477 347L471 347M504 212L494 217M504 212L509 220M372 364L376 353M372 364L374 371M372 364L380 361M387 281L389 278M387 281L381 281M387 281L395 281M387 281L382 277M435 318L427 328M435 318L426 309M435 318L443 327M490 392L496 385M490 392L487 378M490 392L486 400M423 302L415 311M423 302L413 292M423 302L432 294M423 302L426 309M485 464L483 472M485 464L475 466M485 464L490 464M485 464L489 458M485 464L487 468M452 348L444 345M452 348L454 336M452 348L459 349M118 174L117 171M118 174L117 179M357 251L364 244M427 328L424 335M416 400L418 391M553 319L553 324M553 319L554 316M271 378L282 384M271 378L263 375M271 378L270 371M271 378L270 385M271 378L283 377M471 220L482 215M471 220L478 225M471 220L459 222M271 531L282 540M500 354L494 343M500 354L493 352M503 329L501 337M503 329L508 318M503 329L510 329M494 343L482 337M494 343L501 337M494 343L493 352M496 385L494 374M496 385L503 384M496 385L487 378M579 223L573 226M579 223L577 230M579 223L574 218M579 223L585 221M579 223L582 225M524 251L520 252M524 251L527 252M524 251L530 250M221 584L200 568M258 474L276 478M258 474L251 463M480 301L488 309M415 311L426 309M415 311L410 317M415 209L420 222M415 209L423 215M415 209L408 203M454 254L451 245M454 254L461 253M550 339L545 334M550 339L550 340M550 339L551 332M336 336L336 343M268 335L273 345M268 335L261 340M375 278L371 275M375 278L381 281M375 278L376 274M375 278L382 277M526 329L520 332M526 329L531 326M503 368L494 374M503 368L506 375M480 253L487 255M497 262L488 263M497 262L501 255M497 262L487 255M544 234L538 229M544 234L549 230M356 213L359 222M301 262L288 267M301 262L303 249M301 262L309 266M494 455L485 453M494 455L494 461M494 455L497 449M494 455L489 448M494 455L489 458M494 455L496 455M235 316L241 303M235 381L244 375M235 381L235 371M235 381L239 388M499 432L500 425M499 432L497 439M450 492L455 489M450 492L447 492M450 492L455 491M430 435L439 435M363 272L351 273M363 272L371 275M363 272L360 280M363 272L372 270M346 422L358 416M346 422L345 415M494 217L482 215M368 63L342 58M317 237L324 241M554 312L551 307M554 312L546 312M554 312L556 308M554 312L554 316M554 312L555 309M295 411L303 411M475 382L487 378M475 382L470 388M420 536L410 532M420 536L419 538M420 536L418 530M290 363L290 372M290 363L297 357M290 363L283 364M542 298L534 293M542 298L548 301M451 245L461 253M451 245L452 237M482 215L478 225M313 273L318 262M313 273L324 268M313 273L309 266M478 225L484 229M398 402L393 393M398 402L400 395M386 238L391 247M386 238L380 227M386 238L395 241M318 143L340 143M538 384L533 379M538 384L536 386M538 384L539 378M304 341L300 349M304 341L310 336M439 288L432 294M439 288L441 280M376 353L388 350M376 353L380 361M376 353L364 347M376 353L380 347M333 355L346 347M333 355L324 354M333 355L336 343M333 355L323 363M410 360L412 368M410 360L404 364M410 360L418 359M336 314L324 313M336 314L331 308M431 397L435 389M431 397L427 388M405 425L415 432M494 374L503 384M494 374L487 378M494 374L506 375M382 338L378 332M382 338L380 347M487 418L487 426M417 259L415 266M417 259L424 264M385 137L394 148M438 356L435 347M438 356L444 345M438 356L428 349M438 356L434 362M438 356L445 363M309 311L317 314M309 311L314 303M309 311L311 319M309 311L298 310M463 418L465 413M463 418L458 420M503 384L506 375M288 267L275 268M251 398L245 406M251 398L258 400M197 655L195 650M197 655L199 657M425 271L415 266M425 271L424 264M425 271L423 279M449 472L445 474M449 472L452 478M389 296L393 303M389 296L397 287M495 279L485 283M316 427L305 424M253 355L265 357M336 257L333 250M336 257L343 255M336 257L332 264M460 489L455 481M460 489L455 489M460 489L455 491M460 489L462 488M473 355L474 351M134 64L135 62M134 64L131 69M364 414L373 424M364 414L358 416M195 341L207 345M424 571L425 578M424 571L424 570M453 446L445 458M453 446L445 445M453 446L460 447M422 490L418 486M422 490L415 489M422 490L423 490M333 250L326 250M333 250L343 255M413 292L407 284M306 381L294 384M306 381L305 374M486 320L488 309M486 320L495 312M237 401L245 406M237 401L239 388M155 555L157 547M155 555L155 555M155 555L156 563M422 381L418 391M422 381L428 376M422 381L427 388M507 227L521 227M507 227L509 220M507 227L517 220M430 368L428 376M430 368L436 376M430 368L434 362M388 429L383 436M186 633L183 629M186 633L187 636M336 286L349 289M336 286L332 297M336 286L328 288M309 290L302 286M309 290L308 298M529 92L535 99M529 92L535 98M529 92L531 91M529 92L528 84M496 36L505 41M496 36L501 35M496 36L497 28M435 347L444 345M435 347L428 349M265 395L272 398M265 395L270 385M265 395L258 400M349 289L356 301M332 297L331 308M332 297L328 288M451 411L457 410M451 411L447 414M451 411L454 413M282 384L294 384M282 384L270 385M282 384L283 377M395 271L393 277M395 271L392 266M395 271L392 272M395 271L399 271M308 325L311 319M308 325L296 327M308 325L310 336M510 243L518 248M510 243L519 241M444 345L454 336M380 272L378 269M380 272L383 269M380 272L376 274M380 272L382 277M380 272L384 272M393 277L389 278M393 277L395 281M393 277L392 272M351 273L360 280M528 240L519 241M407 284L404 278M407 284L397 287M445 458L445 445M445 458L436 461M445 458L439 453M445 458L454 462M394 222L391 213M439 473L445 474M439 473L437 476M340 453L343 443M340 453L349 449M340 453L345 458M348 373L337 372M348 373L343 367M348 373L355 372M120 114L119 107M120 114L118 115M120 114L117 123M485 453L489 448M485 453L489 458M396 456L399 447M396 456L402 464M378 475L388 480M394 311L393 303M318 262L324 268M318 262L309 266M318 262L318 253M244 375L235 371M244 375L250 371M244 375L241 368M180 440L180 439M180 440L180 447M573 226L577 230M573 226L574 218M573 226L572 234M573 226L576 230M402 498L392 496M445 445L439 435M445 445L439 453M399 447L403 440M399 447L406 450M553 271L543 272M553 271L550 263M553 271L557 269M389 278L387 273M389 278L395 281M389 278L392 272M483 472L475 466M483 472L481 474M483 472L487 468M543 262L543 272M543 262L531 264M543 262L550 263M438 481L434 480M438 481L433 484M438 481L437 476M377 457L372 463M377 457L365 459M377 457L380 451M363 300L356 301M363 300L365 308M469 343L471 347M469 343L466 339M420 222L412 224M420 222L423 215M411 443L403 440M411 443L406 450M557 263L550 263M557 263L557 269M557 263L557 261M388 350L395 350M388 350L380 347M263 375L270 371M307 468L315 470M543 272L550 263M543 272L533 276M577 230L576 230M577 230L582 225M391 247L395 241M412 368L404 364M412 368L418 359M279 310L285 301M279 310L276 318M356 386L359 380M326 250L324 241M326 250L318 253M522 307L525 317M533 358L538 365M416 516L416 523M416 516L415 515M317 314L324 313M317 314L314 303M317 314L311 319M392 266L399 261M392 266L386 267M392 266L392 272M480 275L472 277M480 275L475 265M480 275L485 283M480 275L483 268M561 204L566 198M561 204L570 202M561 204L565 197M488 309L495 312M252 208L255 189M300 349L297 357M305 424L310 414M418 486L415 489M363 318L365 308M455 481L455 489M455 481L452 478M455 489L455 491M403 334L412 343M521 227L517 220M428 491L433 484M428 491L423 490M428 491L431 492M530 385L533 379M530 385L533 393M530 385L536 386M520 252L516 254M520 252L518 248M523 72L524 77M523 72L521 69M278 651L291 635M278 651L274 698M278 651L282 698M278 651L290 698M520 332L510 329M133 219L124 219M133 219L120 211M133 219L124 226M133 219L126 234M323 379L318 367M323 379L331 387M439 44L443 23M475 466L466 466M475 466L481 474M431 629L430 634M431 629L430 626M334 395L331 387M294 384L290 372M294 384L283 377M562 192L565 197M562 192L564 189M346 347L336 343M176 490L177 487M176 490L176 495M412 343L406 348M265 357L275 354M541 321L531 326M541 321L546 312M541 321L537 313M541 321L546 325M494 461L489 458M494 461L492 462M494 461L496 455M395 350L406 348M343 443L335 433M343 443L349 449M538 215L536 222M538 215L536 205M401 236L395 241M574 218L585 221M404 278L397 287M404 278L395 281M235 371L241 368M335 655L314 698M335 655L322 698M335 655L330 698M335 655L338 698M335 655L346 698M335 655L354 698M290 372L283 364M290 372L283 377M372 463L365 459M472 143L469 160M371 275L372 270M371 275L376 274M431 413L432 419M431 413L436 410M556 301L551 307M556 301L556 308M556 301L548 301M556 301L556 301M465 486L462 488M465 486L469 484M425 581L426 586M425 581L425 578M381 281L382 277M382 264L378 269M382 264L383 269M382 264L386 267M515 429L510 435M515 429L514 429M378 269L383 269M378 269L372 270M378 269L376 274M356 358L364 347M536 222L538 229M437 258L430 255M437 258L435 250M437 258L438 265M397 287L395 281M324 354L323 363M531 264L530 259M531 264L525 259M531 264L522 271M360 280L363 286M448 226L452 237M448 226L436 226M436 461L439 453M383 269L386 267M383 269L384 272M418 391L427 388M585 221L584 226M585 221L582 225M585 221L589 220M561 171L560 174M561 171L559 166M541 342L545 334M541 342L550 344M541 342L541 348M541 342L548 348M541 342L550 340M274 288L253 281M274 288L275 268M465 413L457 410M465 413L470 413M293 301L285 301M293 301L298 310M584 226L582 225M584 226L589 220M423 215L430 211M446 379L436 376M446 379L457 382M324 268L332 264M272 398L270 385M272 398L279 398M352 467L361 471M352 467L345 458M386 86L404 89M415 266L424 264M415 266L410 271M430 255L424 264M430 255L435 250M318 367L323 363M545 334L546 325M545 334L550 340M545 334L551 332M434 480L428 481M434 480L433 484M434 480L437 476M497 449L499 453M497 449L489 448M497 449L497 439M497 449L496 455M497 449L501 449M273 345L261 340M273 345L275 354M428 481L433 484M442 491L438 494M442 491L439 493M442 491L447 492M526 255L530 259M526 255L525 259M526 255L530 254M526 255L527 252M506 375L517 375M458 420L455 417M458 420L452 422M302 286L294 284M516 254L518 248M324 313L331 308M314 303L308 298M373 424L370 432M488 263L483 268M488 263L487 255M551 307L546 312M551 307L556 308M551 307L548 301M551 307L555 309M517 362L517 375M508 318L510 329M435 389L427 388M272 188L255 189M374 371L380 361M374 371L373 382M361 471L365 459M475 265L483 268M550 344L548 348M550 344L550 340M323 283L328 288M238 425L246 428M174 363L171 360M174 363L173 367M291 335L296 327M387 273L386 267M387 273L392 272M387 273L384 272M250 371L241 368M431 654L432 658M431 654L431 650M393 393L400 395M528 405L526 408M528 405L529 400M439 214L436 226M439 214L430 211M174 515L173 511M174 515L170 518M487 426L486 435M530 259L525 259M530 259L530 254M530 259L534 254M499 453L496 455M499 453L501 449M445 419L447 414M445 419L452 422M445 419L439 421M466 466L461 459M323 474L315 470M542 250L534 249M565 240L564 240M565 240L570 235M557 293L556 301M557 293L557 293M335 433L333 424M362 432L370 432M551 282L558 283M551 282L557 285M551 282L557 277M157 29L161 22M157 29L156 28M157 29L151 34M317 333L310 336M317 333L318 341M577 202L578 203M577 202L570 202M428 376L436 376M513 264L522 271M457 410L454 413M509 220L517 220M329 414L333 424M329 414L322 414M197 455L180 455M146 45L146 41M146 45L141 47M604 208L601 210M604 208L602 206M519 419L518 422M519 419L522 415M433 484L431 492M337 372L343 367M178 419L178 415M178 419L179 423M161 335L164 337M303 411L310 414M474 351L471 347M535 99L538 105M535 99L535 98M586 204L594 205M586 204L586 204M546 312L537 313M386 467L393 473M356 301L365 308M393 473L388 480M403 440L406 450M518 248L519 241M443 327L450 325M550 263L557 269M550 263L557 261M399 261L407 252M399 261L401 267M386 267L384 272M467 368L465 358M310 336L318 341M348 243L357 237M372 270L376 274M376 274L382 277M382 277L384 272M413 500L413 507M413 500L412 499M291 635L307 636M547 357L544 363M547 357L546 356M547 357L548 348M461 459L454 462M524 213L517 220M470 413L473 417M490 464L489 458M490 464L487 468M490 464L492 462M530 398L529 400M530 398L533 393M558 283L557 285M558 283L557 277M534 249L530 250M534 249L534 254M556 308L554 316M556 308L555 309M357 447L349 449M530 254L527 252M530 254L530 250M530 254L534 254M591 219L589 220M591 219L595 215M455 417L454 413M455 417L452 422M456 -21L464 -17M456 -21L460 -24M456 -21L457 -31M193 411L178 415M538 365L531 372M538 365L541 371M538 365L544 363M279 325L276 318M116 136L117 131M116 136L116 139M410 271L401 267M177 396L176 391M177 396L177 399M349 449L345 458M324 241L318 253M410 532L419 538M410 532L418 530M410 532L416 523M541 348L548 348M506 443L501 449M506 443L505 442M506 443L510 435M310 414L322 414M487 15L486 16M487 15L481 10M399 271L401 267M359 380L355 372M527 252L530 250M530 250L534 254M118 183L117 179M118 183L118 187M533 379L531 372M533 379L536 386M533 379L539 378M364 244L357 237M519 64L521 69M519 64L517 62M566 198L570 202M566 198L565 197M242 -22L256 -42M242 -22L248 -42M242 -22L240 -42M242 -22L232 -42M415 511L415 515M415 511L413 507M572 234L570 235M572 234L576 230M432 419L439 421M124 219L120 211M124 219L122 219M124 219L124 226M540 378L539 378M434 362L445 363M489 458L492 462M546 325L551 332M546 325L553 324M438 494L439 493M438 494L447 492M206 -42L203 -35M206 -42L208 -42M203 -35L199 -28M203 -35L216 -42M203 -35L208 -42M199 -28L196 -20M192 -13L189 -6M184 1L179 7M179 7L172 11M172 11L166 17M166 17L161 22M161 22L156 28M156 28L151 34M151 34L146 41M146 41L141 47M141 47L138 55M138 55L135 62M135 62L131 69M131 69L128 76M128 76L125 84M125 84L122 92M122 92L121 99M121 99L119 107M119 107L118 115M118 115L117 123M117 123L117 131M116 147L116 155M116 155L116 163M116 163L117 171M117 171L117 179M117 179L118 187M118 187L118 195M118 195L119 203M119 203L120 211M120 211L122 219M122 219L124 226M126 234L128 242M128 242L131 249M164 337L166 344M166 344L169 352M169 352L171 360M171 360L173 367M173 367L174 375M174 375L175 383M176 391L177 399M177 399L178 407M178 407L178 415M179 423L179 431M179 431L180 439M180 447L180 455M180 455L179 463M179 463L179 471M179 471L178 479M178 479L177 487M176 495L175 503M175 503L173 511M173 511L170 518M170 518L167 526M167 526L164 533M164 533L161 540M161 540L157 547M157 547L155 555M156 563L158 571M158 571L160 578M160 578L163 586M163 586L165 594M165 594L168 601M168 601L171 608M171 608L175 615M175 615L179 622M179 622L183 629M183 629L187 636M187 636L191 643M191 643L195 650M199 657L202 665M202 665L205 672M205 672L207 680M207 680L210 687M210 687L213 695M210 687L218 698M210 687L226 698M213 695L218 698M218 698L226 698M226 698L234 698M234 698L242 698M242 698L250 698M250 698L258 698M258 698L266 698M266 698L274 698M274 698L282 698M282 698L290 698M290 698L298 698M298 698L306 698M306 698L314 698M314 698L322 698M322 698L330 698M330 698L338 698M338 698L346 698M346 698L354 698M354 698L362 698M362 698L370 698M370 698L378 698M378 698L386 698M386 698L394 698M394 698L402 698M402 698L410 698M410 698L418 698M410 698L433 682M410 698L433 674M418 698L426 698M418 698L434 690M418 698L433 682M426 698L434 698M426 698L434 690M434 698L434 690M434 690L433 682M433 682L433 674M433 674L432 666M432 666L432 658M432 658L431 650M431 650L431 642M431 642L430 634M430 626L429 618M429 618L428 610M428 610L427 602M427 602L426 594M426 594L426 586M424 570L422 562M422 562L421 554M421 554L420 546M420 546L419 538M418 530L416 523M462 488L469 484M469 484L475 479M475 479L481 474M522 415L526 408M553 324L554 316M557 293L557 285M557 261L556 253M558 245L564 240M595 215L601 210M601 210L602 206M602 206L594 205M594 205L586 204M586 204L578 203M565 197L564 189M564 189L562 182M562 182L560 174M559 166L557 158M557 158L555 150M555 150L553 143M553 143L550 135M550 135L547 128M547 128L545 120M545 120L541 113M541 113L538 105M538 105L535 98M535 98L531 91M531 91L528 84M528 84L524 77M517 62L513 55M513 55L509 48M505 41L501 35M501 35L497 28M497 28L492 22M492 22L486 16M486 16L481 10M481 10L475 5M475 5L471 -2M471 -2L467 -9M464 -17L460 -24M460 -24L457 -31M457 -31L454 -38M457 -31L448 -42M457 -31L440 -42M454 -38L448 -42M448 -42L440 -42M440 -42L432 -42M432 -42L424 -42M424 -42L416 -42M416 -42L408 -42M408 -42L400 -42M400 -42L392 -42M392 -42L384 -42M384 -42L376 -42M376 -42L368 -42M368 -42L360 -42M360 -42L352 -42M352 -42L344 -42M344 -42L336 -42M336 -42L328 -42M328 -42L320 -42M320 -42L312 -42M312 -42L304 -42M304 -42L296 -42M296 -42L288 -42M288 -42L280 -42M280 -42L272 -42M272 -42L264 -42M264 -42L256 -42M256 -42L248 -42M248 -42L240 -42M240 -42L232 -42M232 -42L224 -42M224 -42L216 -42M216 -42L208 -42" stroke="#22f522" stroke-width="1.2" fill="none" clip-path="url(#hc)"/>
<path d="M3 287L206 240M3 287L202 251M3 287L198 263M3 287L194 274M3 287L190 285M3 287L186 297M3 287L182 308M3 287L178 319M3 287L174 331M3 287L170 342M23 282L23 283M23 282L43 280M44 278L43 280M44 278L63 276M64 273L63 276M64 273L87 272M88 267L87 272M88 267L110 268M113 262L110 268M113 262L134 263M137 256L134 263M137 256L158 259M161 250L158 259M161 250L178 256M182 246L178 256M182 246L194 253M198 242L194 253M23 283L22 285M23 283L3 287M43 280L42 282M43 280L22 285M63 276L62 280M63 276L42 282M87 272L85 277M87 272L62 280M110 268L108 274M110 268L85 277M134 263L132 271M134 263L108 274M158 259L155 268M158 259L132 271M178 256L175 266M178 256L155 268M194 253L190 264M22 285L22 286M22 285L41 284M42 282L41 284M42 282L60 283M62 280L60 283M62 280L83 282M85 277L83 282M85 277L106 280M108 274L106 280M108 274L129 278M132 271L129 278M132 271L152 277M155 268L152 277M155 268L171 276M175 266L171 276M175 266L186 275M190 264L186 275M22 286L22 287M22 286L3 287M41 284L40 287M41 284L22 287M60 283L59 286M60 283L40 287M83 282L82 286M83 282L59 286M106 280L104 286M106 280L82 286M129 278L126 286M129 278L104 286M152 277L149 286M152 277L126 286M171 276L168 286M171 276L149 286M186 275L183 285M22 287L21 288M22 287L40 289M40 287L40 289M40 287L58 290M59 286L58 290M59 286L80 291M82 286L80 291M82 286L102 292M104 286L102 292M104 286L124 293M126 286L124 293M126 286L146 295M149 286L146 295M149 286L164 296M168 286L164 296M168 286L179 296M183 285L179 296M21 288L21 289M21 288L3 287M40 289L39 291M40 289L21 289M58 290L57 293M58 290L39 291M80 291L78 296M80 291L57 293M102 292L100 298M102 292L78 296M124 293L121 301M124 293L100 298M146 295L143 303M146 295L121 301M164 296L161 305M164 296L143 303M179 296L175 307M21 289L20 290M21 289L38 293M39 291L38 293M39 291L56 297M57 293L56 297M57 293L76 301M78 296L76 301M78 296L98 304M100 298L98 304M100 298L118 308M121 301L118 308M121 301L140 312M143 303L140 312M143 303L157 315M161 305L157 315M161 305L171 318M175 307L171 318M20 290L20 291M20 290L3 287M38 293L37 296M38 293L20 291M56 297L54 300M56 297L37 296M76 301L75 305M76 301L54 300M98 304L95 311M98 304L75 305M118 308L116 316M118 308L95 311M140 312L136 321M140 312L116 316M157 315L153 325M157 315L136 321M171 318L167 329M20 291L20 292M20 291L36 298M37 296L36 298M37 296L53 304M54 300L53 304M54 300L73 310M75 305L73 310M75 305L93 317M95 311L93 317M95 311L113 323M116 316L113 323M116 316L133 330M136 321L133 330M136 321L150 335M153 325L150 335M153 325L163 340M167 329L163 340" stroke="#22f522" stroke-width="1.15" fill="none" clip-path="url(#hc)"/>
<path d="M131.0 251.0 Q164.0 243.0 202.0 240.0 M163.4 334.7 L198.0 323.0" stroke="#22f522" stroke-width="1.6" fill="none"/>
<g clip-path="url(#hc)" fill="none" stroke="#22f522" stroke-width="1.1">
<polygon points="207.7,-39.2 206.7,-37.1 204.3,-31.9 202.9,-28.9 201.4,-25.7 199.8,-22.4 198.2,-19.0 196.6,-15.6 194.9,-12.2 193.3,-9.0 191.7,-5.9 190.1,-3.1 188.7,-0.6 187.2,1.7 184.5,5.4 181.8,8.1 179.3,10.2 177.0,11.7 172.9,14.3 168.8,18.2 164.4,22.8 160.1,27.5 156.1,32.2 151.8,37.3 147.9,42.3 144.4,47.4 141.5,53.2 138.8,59.5 137.5,62.7 136.1,65.9 134.6,69.0 133.0,72.1 131.5,75.0 128.8,80.9 126.6,87.0 124.9,93.2 123.4,99.9 122.3,106.3 121.4,112.4 120.7,118.7 120.1,125.1 119.6,131.3 119.2,137.5 118.9,143.7 118.8,149.9 118.8,156.1 119.0,162.3 119.3,168.5 119.6,174.7 120.0,181.0 120.4,187.4 120.8,193.8 121.4,199.8 122.3,206.1 123.4,212.3 124.8,218.6 126.5,225.2 128.4,232.0 130.5,239.2 132.4,245.7 133.1,248.3 133.8,250.5 133.8,251.0 133.7,251.6 133.6,252.1 133.3,252.6 132.9,253.0 132.5,253.4 132.0,253.6 13.1,287.1 164.5,332.1 164.9,332.4 165.4,332.7 165.7,333.1 166.0,333.6 166.7,335.7 167.5,338.3 168.5,341.4 169.6,344.9 170.7,348.6 171.7,352.3 173.1,357.7 173.8,360.5 174.5,363.4 175.2,366.5 175.9,370.0 176.6,373.8 177.3,378.1 177.6,380.6 178.0,383.2 178.3,386.0 178.7,388.9 179.0,392.0 179.4,395.1 179.7,398.3 180.0,401.5 180.4,404.7 180.7,408.0 180.9,411.3 181.2,414.5 181.4,417.7 181.6,420.8 181.8,423.8 181.9,427.0 182.1,430.2 182.2,433.3 182.3,436.4 182.4,439.5 182.4,442.6 182.5,445.6 182.5,448.7 182.4,451.8 182.4,454.8 182.3,457.9 182.2,461.0 182.0,464.1 181.8,467.2 181.6,470.3 181.3,473.5 181.0,476.7 180.7,479.9 180.4,483.1 180.0,486.3 179.6,489.5 179.1,492.7 178.7,495.9 178.2,499.0 177.6,502.0 177.0,505.0 176.4,507.9 175.7,510.7 174.7,514.1 173.6,517.6 172.4,520.9 171.0,524.2 169.7,527.3 168.3,530.4 166.9,533.2 164.5,538.5 162.6,543.0 160.9,546.9 159.3,549.6 158.1,553.4 158.6,559.3 159.5,564.4 161.0,570.3 162.7,576.7 164.6,583.2 166.6,589.4 168.6,595.0 171.0,600.8 173.5,606.2 176.2,611.4 179.0,616.5 180.5,619.2 182.0,621.9 184.8,627.2 187.8,632.2 190.8,637.3 192.4,639.9 194.0,642.6 195.5,645.3 197.1,648.0 198.6,650.9 200.1,653.8 201.5,656.8 202.8,659.6 204.0,662.6 205.3,665.7 206.6,669.0 207.8,672.3 209.1,675.7 210.3,679.0 211.4,682.3 212.5,685.4 213.5,688.3 215.3,693.4 431.1,695.2 431.0,694.4 430.8,689.5 430.6,683.6 430.3,676.9 429.9,669.7 429.5,662.1 429.0,655.6 428.6,650.1 428.2,644.3 427.7,638.2 427.2,631.9 426.7,625.5 426.1,619.0 425.6,612.4 424.9,605.9 424.3,599.5 423.6,593.3 422.9,587.1 422.1,580.8 421.3,574.4 420.4,568.0 419.6,561.6 418.7,555.3 417.8,549.2 416.9,543.3 416.1,537.7 415.2,532.4 413.9,524.9 412.6,517.5 411.2,510.4 409.8,503.9 408.6,498.1 408.0,495.6 407.5,493.3 407.1,491.3 406.7,489.3 406.7,488.7 406.8,488.2 407.0,487.6 407.4,487.2 407.8,486.8 408.2,486.5 408.8,486.3 409.3,486.2 411.6,486.1 415.1,485.9 419.6,486.3 422.6,486.9 429.1,488.7 435.9,489.8 442.3,489.9 449.0,489.4 455.6,487.8 460.4,485.9 465.3,483.3 470.2,480.0 475.1,475.9 479.1,472.0 483.2,467.5 487.4,462.5 491.6,457.0 495.7,451.4 499.0,446.8 502.3,441.8 505.6,436.7 508.8,431.5 512.0,426.2 515.1,420.9 518.1,415.6 521.1,410.1 524.0,404.6 526.8,399.1 529.4,393.5 531.9,387.8 534.3,382.0 536.6,376.2 538.7,370.3 540.7,364.4 542.6,358.2 544.4,351.7 545.9,345.5 547.2,339.5 548.5,333.0 549.7,326.4 550.7,319.9 551.7,313.6 552.5,307.8 553.2,302.7 554.0,295.2 554.3,289.5 554.3,284.2 554.2,281.3 554.2,275.0 554.0,268.2 553.8,261.0 553.5,254.3 553.4,251.4 553.3,249.0 553.2,246.8 553.3,246.3 553.5,245.7 553.8,245.2 554.2,244.8 565.6,203.8 565.1,203.6 564.6,203.4 564.2,203.1 563.8,202.7 563.5,202.3 563.3,201.8 562.9,199.6 562.3,196.9 561.0,190.1 559.3,182.1 558.7,179.5 558.1,176.7 556.8,170.7 555.5,164.4 554.0,158.0 552.3,151.8 550.5,145.6 548.5,139.5 546.5,133.3 544.2,127.1 541.9,121.0 539.6,115.6 537.2,110.1 534.7,104.6 532.1,99.2 529.5,93.7 528.2,90.9 526.9,88.1 525.5,85.3 522.9,79.8 520.2,74.2 517.4,68.6 514.5,63.1 511.5,57.5 508.1,51.7 504.6,45.8 501.1,40.0 497.7,34.7 494.7,30.2 490.1,24.0 486.0,19.3 484.0,17.1 479.8,12.8 477.7,11.1 475.2,9.0 472.6,6.0 469.6,1.4 468.4,-0.7 467.1,-3.2 465.7,-6.0 464.2,-9.0 462.7,-12.2 461.1,-15.5 459.5,-18.9 457.9,-22.3 456.4,-25.7 454.9,-28.9 452.3,-34.7 450.2,-39.2 207.7,-39.2" stroke-width="1.2"/>
<polygon points="209.8,-36.0 208.5,-33.3 205.8,-27.5 204.3,-24.3 202.7,-21.0 201.1,-17.6 199.4,-14.2 197.8,-10.8 196.1,-7.6 194.5,-4.5 193.0,-1.6 191.5,0.9 190.1,3.2 187.3,7.0 184.4,10.1 181.5,12.5 178.8,14.3 176.6,15.7 173.1,18.4 168.9,22.7 164.6,27.3 160.5,32.0 156.4,36.9 152.3,41.8 148.7,46.6 145.7,51.7 143.1,57.5 141.7,60.7 140.4,64.0 138.9,67.3 137.4,70.5 135.9,73.5 133.0,79.3 130.6,85.0 128.8,91.0 127.3,97.2 125.9,104.0 125.0,109.7 124.2,115.9 123.5,122.2 123.0,128.5 122.6,134.6 122.2,140.7 122.1,146.9 122.0,153.0 122.1,159.1 122.3,165.2 122.6,171.4 123.0,177.6 123.4,184.0 123.8,190.4 124.3,196.5 124.9,202.2 125.9,208.7 127.2,214.6 128.8,221.5 130.4,227.6 132.5,234.8 134.5,241.7 136.2,247.4 136.8,249.3 137.0,250.5 137.0,251.7 136.7,252.8 136.2,253.9 135.6,254.9 134.7,255.7 133.7,256.3 132.6,256.8 165.1,328.9 166.2,329.4 167.2,330.0 168.0,330.8 168.7,331.8 169.1,332.9 170.6,337.3 171.6,340.4 172.7,343.9 173.8,347.6 174.8,351.4 175.5,354.2 176.2,356.9 176.9,359.7 177.7,362.7 178.4,366.0 179.1,369.5 179.8,373.4 180.4,377.7 180.8,380.2 181.1,382.8 181.5,385.6 181.8,388.6 182.2,391.6 182.6,394.7 182.9,397.9 183.2,401.2 183.5,404.5 183.8,407.8 184.1,411.0 184.4,414.3 184.6,417.5 184.8,420.7 185.0,423.7 185.1,426.9 185.3,430.0 185.4,433.2 185.5,436.3 185.6,439.4 185.6,442.6 185.7,445.7 185.7,448.8 185.6,451.9 185.6,455.0 185.5,458.1 185.3,461.2 185.2,464.3 185.0,467.4 184.8,470.6 184.5,473.8 184.2,477.0 183.9,480.2 183.5,483.5 183.2,486.8 182.8,490.0 182.3,493.2 181.8,496.4 181.3,499.6 180.7,502.7 180.1,505.7 179.5,508.7 178.8,511.6 177.7,515.3 176.6,518.8 175.3,522.2 173.9,525.5 172.5,528.7 171.2,531.7 168.6,537.3 166.4,542.1 165.5,544.4 163.5,548.8 161.6,552.3 161.5,557.0 162.1,561.1 163.3,566.5 164.9,572.6 166.7,579.0 168.7,585.4 170.7,591.2 172.7,596.8 175.1,602.2 177.7,607.3 180.4,612.4 183.3,617.6 184.8,620.3 186.3,623.1 189.1,628.1 192.0,633.1 193.6,635.7 195.2,638.3 196.7,641.0 198.3,643.7 199.9,646.6 201.5,649.5 203.0,652.5 204.5,655.6 205.7,658.4 207.0,661.4 208.3,664.6 209.6,667.9 210.8,671.3 212.1,674.6 213.3,678.0 214.4,681.2 215.5,684.4 217.5,689.9 427.7,692.0 427.5,686.8 427.3,680.5 426.9,673.5 426.5,666.1 426.0,658.4 425.6,653.1 425.2,647.5 424.8,641.5 424.3,635.4 423.8,629.0 423.2,622.5 422.7,616.0 422.1,609.5 421.4,603.0 420.7,596.7 420.0,590.6 419.3,584.4 418.5,578.0 417.7,571.6 416.8,565.2 416.0,558.9 415.1,552.7 414.2,546.7 413.3,541.0 412.5,535.5 411.5,529.2 410.1,521.7 408.7,514.5 407.3,507.7 406.0,501.6 404.9,496.3 404.4,494.0 404.0,491.9 403.6,490.2 403.5,489.0 403.6,487.8 404.0,486.6 404.6,485.6 405.3,484.7 406.3,483.9 407.4,483.4 408.5,483.1 411.3,482.9 414.7,482.7 419.4,483.0 423.0,483.7 426.6,484.7 433.0,486.3 439.0,486.7 445.4,486.6 451.6,485.7 456.8,484.0 461.4,481.8 465.9,479.1 470.6,475.6 474.9,471.7 478.8,467.7 482.8,463.0 486.9,457.8 491.1,452.3 494.7,447.3 498.0,442.5 501.2,437.6 504.5,432.4 507.7,427.2 510.8,421.9 513.8,416.8 516.8,411.3 519.7,405.8 522.5,400.4 525.2,394.9 527.7,389.4 530.2,383.7 532.5,377.9 534.7,372.2 536.7,366.3 538.6,360.4 540.5,354.1 542.2,347.6 543.5,341.9 544.7,335.7 545.9,329.2 547.1,322.6 548.1,316.2 549.0,310.2 549.7,304.7 550.5,298.3 551.0,292.1 551.1,286.9 551.0,281.3 551.0,278.0 550.9,271.8 550.7,264.8 550.4,257.7 550.2,251.6 550.1,249.1 550.0,247.2 550.1,246.0 550.4,244.8 551.0,243.7 551.7,242.8 590.6,210.6 564.6,206.8 563.5,206.5 562.5,205.9 561.7,205.2 561.0,204.3 560.4,203.3 560.1,202.2 559.7,200.2 558.6,194.3 557.0,186.9 555.6,180.2 555.0,177.4 554.4,174.4 553.0,168.2 551.6,161.9 550.1,155.7 548.4,149.6 546.5,143.5 544.5,137.4 542.4,131.3 540.1,125.2 537.8,119.5 535.5,114.1 533.1,108.7 530.5,103.3 527.9,97.8 526.6,95.0 525.3,92.3 524.0,89.5 521.3,83.9 518.7,78.4 516.0,72.8 513.2,67.3 510.2,61.9 507.1,56.2 503.6,50.4 500.1,44.5 496.7,39.0 493.5,34.1 489.7,28.7 485.6,23.7 481.6,19.3 479.7,17.1 475.8,13.7 473.5,11.8 470.4,8.4 467.0,3.3 465.6,0.9 464.3,-1.7 462.8,-4.5 461.3,-7.6 459.8,-10.8 458.2,-14.2 456.6,-17.6 455.0,-21.0 453.5,-24.3 452.0,-27.5 450.6,-30.6 448.3,-35.8 209.8,-36.0" stroke-width="1"/>
<polygon points="212.6,-31.5 211.3,-28.6 209.9,-25.6 208.4,-22.4 206.8,-19.0 205.1,-15.6 203.5,-12.1 201.8,-8.7 200.1,-5.4 198.4,-2.3 196.8,0.7 195.2,3.5 193.4,6.3 190.0,10.7 186.7,14.1 183.5,16.6 181.0,18.2 177.6,20.5 174.3,23.6 170.1,28.0 165.9,32.6 162.0,37.2 157.7,42.3 154.1,46.8 151.0,51.3 148.5,56.4 145.9,62.4 144.6,65.6 143.1,69.0 141.5,72.3 139.9,75.5 138.4,78.4 135.9,83.9 134.0,89.3 132.4,95.1 131.0,101.4 129.9,107.5 129.1,113.4 128.3,119.5 127.7,125.8 127.2,131.9 126.9,137.9 126.6,143.9 126.5,150.0 126.5,156.0 126.7,162.0 127.0,168.1 127.3,174.3 127.7,180.5 128.1,186.9 128.5,193.1 129.1,198.9 129.9,204.9 130.9,210.7 132.3,216.8 133.9,223.2 135.8,229.9 137.8,237.1 139.8,243.5 140.5,246.1 141.3,249.1 141.5,251.1 141.3,253.2 140.6,255.2 139.6,257.0 138.3,258.6 136.7,259.8 134.8,260.8 40.8,287.3 167.4,325.0 169.2,325.9 170.7,327.2 172.1,328.8 173.0,330.5 174.0,333.4 174.8,335.9 175.9,339.1 177.0,342.7 178.1,346.6 179.2,350.4 180.6,355.7 181.3,358.5 182.0,361.6 182.8,364.9 183.5,368.5 184.2,372.5 184.9,376.9 185.2,379.5 185.6,382.2 186.0,385.0 186.3,388.0 186.7,391.1 187.0,394.2 187.4,397.4 187.7,400.7 188.0,404.0 188.3,407.3 188.6,410.6 188.9,413.9 189.1,417.1 189.3,420.3 189.5,423.4 189.6,426.6 189.8,429.8 189.9,433.0 190.0,436.1 190.1,439.3 190.1,442.4 190.2,445.6 190.2,448.7 190.1,451.8 190.1,455.0 190.0,458.1 189.8,461.3 189.7,464.5 189.5,467.7 189.2,470.9 189.0,474.1 188.7,477.3 188.4,480.6 188.0,483.9 187.6,487.2 187.2,490.5 186.8,493.8 186.3,497.0 185.8,500.2 185.2,503.4 184.6,506.5 183.9,509.5 183.2,512.5 182.2,516.2 180.9,520.0 179.6,523.6 178.1,527.1 176.7,530.4 175.3,533.6 173.9,536.5 171.5,541.6 169.8,545.9 167.9,550.1 166.1,553.2 165.8,553.9 166.2,558.1 167.1,562.8 168.4,568.4 170.1,574.6 172.0,580.9 173.9,586.9 175.8,592.3 178.0,597.7 180.4,602.8 183.0,607.7 185.8,612.8 187.2,615.5 188.7,618.2 191.6,623.5 194.4,628.3 197.4,633.4 199.0,636.0 200.6,638.6 202.2,641.4 203.8,644.2 205.4,647.2 207.0,650.3 208.5,653.5 209.8,656.5 211.1,659.6 212.4,662.9 213.7,666.2 215.0,669.6 216.3,673.1 217.5,676.4 218.7,679.7 219.8,682.8 220.8,685.8 423.1,687.5 422.9,683.9 422.6,677.3 422.2,670.1 421.8,662.6 421.3,656.2 420.9,650.7 420.5,644.9 420.1,638.8 419.6,632.5 419.0,626.1 418.5,619.6 417.9,613.1 417.3,606.7 416.6,600.3 415.9,594.2 415.2,588.0 414.4,581.7 413.6,575.4 412.8,569.0 411.9,562.7 411.1,556.4 410.2,550.3 409.3,544.5 408.5,538.9 407.6,533.7 406.4,526.2 405.0,518.9 403.6,511.9 402.3,505.5 401.0,499.7 400.5,497.2 400.0,494.9 399.6,492.8 399.1,490.0 399.1,487.9 399.5,485.9 400.3,483.9 401.5,482.2 403.0,480.7 404.8,479.6 406.8,478.9 408.9,478.5 411.3,478.4 415.6,478.3 421.1,478.7 424.6,479.5 430.9,481.2 436.4,482.1 442.1,482.2 447.9,481.8 453.2,480.5 457.2,478.9 461.3,476.7 465.6,473.8 470.0,470.2 473.6,466.7 477.4,462.4 481.4,457.7 485.4,452.4 489.5,446.9 492.6,442.4 495.8,437.6 499.1,432.6 502.3,427.4 505.4,422.2 508.4,417.1 511.4,411.8 514.3,406.4 517.1,401.1 519.8,395.7 522.4,390.3 524.8,384.8 527.1,379.2 529.4,373.5 531.5,367.8 533.4,362.0 535.3,356.0 537.0,349.8 538.4,343.8 539.7,337.9 540.9,331.6 542.1,325.1 543.1,318.7 544.1,312.5 544.9,306.7 545.6,301.7 546.3,294.6 546.6,289.4 546.6,284.3 546.5,281.3 546.5,275.1 546.3,268.5 546.1,261.3 545.8,254.6 545.7,251.7 545.6,249.3 545.5,246.3 545.9,244.2 546.6,242.2 547.8,240.4 549.3,238.9 564.5,211.4 562.6,210.9 560.8,210.1 559.2,209.0 557.8,207.5 556.7,205.9 555.9,204.0 555.3,201.1 554.8,198.4 553.4,191.7 551.7,183.7 551.2,181.1 550.6,178.3 549.3,172.3 548.0,166.1 546.5,159.8 544.9,153.8 543.1,147.9 541.2,141.9 539.2,135.8 537.0,129.8 534.7,123.9 532.6,118.6 530.2,113.3 527.7,107.9 525.2,102.5 522.5,97.0 521.2,94.2 519.9,91.4 518.6,88.6 515.9,83.1 513.3,77.6 510.6,72.1 507.8,66.7 504.8,61.3 501.5,55.6 498.0,49.8 494.6,44.1 491.3,38.9 488.4,34.6 484.1,28.9 480.3,24.5 478.2,22.3 474.7,18.6 472.7,17.0 469.5,14.1 466.1,10.2 462.8,5.1 461.6,2.8 460.2,0.3 458.8,-2.6 457.3,-5.7 455.7,-8.9 454.1,-12.3 452.5,-15.7 450.9,-19.1 449.4,-22.5 447.9,-25.7 445.3,-31.5 212.6,-31.5" stroke-width="0.9" opacity="0.8"/>
</g>
<g clip-path="url(#hc)" fill="none" stroke="#22f522">
<polyline points="167.0,331.0 194.0,356.0 221.0,376.0 244.0,400.0 265.0,420.0 286.0,435.0 309.6,447.0 334.0,457.0 354.0,464.7 376.0,472.0 398.0,478.0 416.0,485.0 434.0,491.0" stroke-width="2.2"/>
<polyline points="168.0,327.5 195.0,352.5 222.0,372.5 245.0,396.5 266.0,416.5 287.0,431.5 310.6,443.5 335.0,453.5 355.0,461.2 377.0,468.5 399.0,474.5 417.0,481.5 435.0,487.5" stroke-width="1.2"/>
<polyline points="246.0,393.0 267.0,413.0 288.0,428.0 311.6,440.0 336.0,450.0 356.0,457.7 378.0,465.0 400.0,471.0 418.0,478.0 436.0,484.0" stroke-width="1"/>
<path d="M444.0 298.0 Q446.0 338.0 452.0 366.0 M491.0 285.0 Q496.0 328.0 500.0 360.0" stroke-width="1.6"/>
</g>
<g fill="#22f522" opacity="0.7" filter="url(#bl1)">
<path d="M449.0 375.0 Q474.0 360.0 502.0 367.0 Q479.0 380.0 449.0 375.0Z"/>
<path d="M406.0 414.0 Q459.0 400.0 510.0 399.0 Q464.0 420.0 406.0 414.0Z"/>
</g>

<path d="M339.0 276.0 Q379.0 239.5 414.0 265.5 L422.0 260.0" stroke="#0e140a" stroke-width="10" fill="none" opacity="0.75" filter="url(#bl3)"/>
<path d="M339.0 276.0 Q379.0 239.5 414.0 265.5 L422.0 260.0" stroke="#0a0806" stroke-width="4" fill="none" opacity="0.9" filter="url(#bl1)"/>
<path d="M348.0 277.0 Q379.0 307.0 413.0 271.5" stroke="#1a2412" stroke-width="9" fill="none" opacity="0.6" filter="url(#bl3)"/>
<clipPath id="ec0"><path d="M344.0 274.0 Q379.0 243.5 411.0 266.5 Q379.0 302.0 344.0 274.0Z"/></clipPath>
<path d="M344.0 274.0 Q379.0 243.5 411.0 266.5 Q379.0 302.0 344.0 274.0Z" fill="#f4f2f4"/>
<g clip-path="url(#ec0)">
<circle cx="386.0" cy="271.0" r="19" fill="url(#iris)"/>
<circle cx="391.0" cy="266.0" r="7" fill="#17120e"/>
<circle cx="383.0" cy="260.0" r="3.5" fill="#fff"/>
<path d="M344.0 274.0 Q379.0 243.5 411.0 266.5" stroke="#1a1410" stroke-width="3" fill="none" opacity="0.6"/>
</g>
<path d="M344.0 274.0 Q379.0 243.5 411.0 266.5" fill="none" stroke="#120d0a" stroke-width="2" opacity="0.9"/>


<path d="M488.5 261.0 Q514.0 223.0 545.0 241.5 L558.0 236.0" stroke="#0e140a" stroke-width="10" fill="none" opacity="0.75" filter="url(#bl3)"/>
<path d="M488.5 261.0 Q514.0 223.0 545.0 241.5 L558.0 236.0" stroke="#0a0806" stroke-width="4" fill="none" opacity="0.9" filter="url(#bl1)"/>
<path d="M497.5 262.0 Q524.0 285.5 544.0 247.5" stroke="#1a2412" stroke-width="9" fill="none" opacity="0.6" filter="url(#bl3)"/>
<clipPath id="ec1"><path d="M493.5 259.0 Q514.0 227.0 542.0 242.5 Q524.0 280.5 493.5 259.0Z"/></clipPath>
<path d="M493.5 259.0 Q514.0 227.0 542.0 242.5 Q524.0 280.5 493.5 259.0Z" fill="#f4f2f4"/>
<g clip-path="url(#ec1)">
<circle cx="519.7" cy="252.0" r="16" fill="url(#iris)"/>
<circle cx="521.6" cy="247.0" r="6" fill="#17120e"/>
<circle cx="527.0" cy="241.0" r="2.5" fill="#fff"/>
<path d="M493.5 259.0 Q514.0 227.0 542.0 242.5" stroke="#1a1410" stroke-width="3" fill="none" opacity="0.6"/>
</g>
<path d="M493.5 259.0 Q514.0 227.0 542.0 242.5" fill="none" stroke="#120d0a" stroke-width="2" opacity="0.9"/>

<polygon points="206.0,-42.0 205.2,-40.4 204.2,-38.3 203.1,-35.8 201.8,-33.1 200.4,-30.1 198.9,-26.9 197.3,-23.6 195.7,-20.2 194.0,-16.8 192.4,-13.5 190.8,-10.3 189.2,-7.3 187.7,-4.5 186.3,-2.1 185.0,0.0 182.4,3.4 180.0,6.0 177.7,7.8 175.5,9.3 173.4,10.6 171.2,12.1 169.0,14.0 166.8,16.2 164.6,18.5 162.3,20.9 160.2,23.3 158.0,25.7 156.0,28.1 154.0,30.4 151.8,33.0 149.6,35.5 147.6,38.1 145.6,40.6 143.8,43.2 142.0,46.0 140.4,48.9 138.9,52.0 137.5,55.2 136.2,58.4 134.9,61.6 133.5,64.8 132.0,67.8 130.5,70.8 129.0,73.8 127.6,76.8 126.2,79.9 125.0,83.0 123.9,86.2 123.0,89.4 122.2,92.6 121.4,95.9 120.7,99.4 120.0,103.0 119.5,105.9 119.1,108.9 118.6,112.0 118.2,115.2 117.9,118.4 117.6,121.6 117.3,124.8 117.0,128.0 116.8,131.1 116.6,134.2 116.4,137.4 116.2,140.5 116.1,143.6 116.1,146.8 116.0,149.9 116.0,153.0 116.0,156.1 116.1,159.2 116.2,162.4 116.3,165.5 116.5,168.6 116.6,171.8 116.8,174.9 117.0,178.0 117.2,181.2 117.4,184.4 117.6,187.6 117.8,190.8 118.1,194.0 118.3,197.1 118.6,200.1 119.0,203.0 119.5,206.5 120.0,209.7 120.6,212.8 121.3,215.9 122.1,219.3 123.0,223.0 123.8,225.9 124.7,229.2 125.7,232.8 126.7,236.4 127.8,240.0 128.8,243.4 129.7,246.5 130.4,249.1 131.0,251.0 3.0,287.0 163.4,334.7 164.0,336.6 164.9,339.2 165.9,342.3 166.9,345.7 168.0,349.3 169.0,353.0 169.7,355.7 170.4,358.4 171.1,361.2 171.8,364.1 172.5,367.2 173.2,370.6 173.9,374.3 174.5,378.5 174.8,381.0 175.2,383.6 175.5,386.4 175.9,389.3 176.2,392.3 176.6,395.4 176.9,398.6 177.3,401.8 177.6,405.0 177.9,408.3 178.1,411.5 178.4,414.7 178.6,417.9 178.8,421.0 179.0,424.0 179.2,427.1 179.3,430.3 179.4,433.4 179.5,436.5 179.6,439.5 179.6,442.6 179.7,445.7 179.7,448.7 179.6,451.7 179.6,454.8 179.5,457.8 179.4,460.9 179.2,463.9 179.0,467.0 178.8,470.1 178.5,473.2 178.2,476.4 177.9,479.6 177.6,482.8 177.2,486.0 176.8,489.2 176.4,492.3 175.9,495.5 175.4,498.5 174.9,501.5 174.3,504.4 173.7,507.3 173.0,510.0 172.0,513.4 170.9,516.7 169.7,520.0 168.4,523.1 167.1,526.2 165.7,529.2 164.4,532.0 163.1,534.8 161.9,537.3 160.9,539.8 160.0,542.0 158.3,545.8 156.9,548.3 155.8,550.4 155.3,553.2 155.5,557.5 155.8,559.7 156.2,562.2 156.8,565.0 157.5,567.9 158.2,571.0 159.1,574.2 160.0,577.5 161.0,580.8 161.9,584.0 163.0,587.2 164.0,590.3 165.0,593.3 166.0,596.0 167.2,599.0 168.4,601.9 169.7,604.7 171.0,607.5 172.3,610.1 173.7,612.7 175.1,615.3 176.6,617.9 178.0,620.5 179.5,623.2 181.0,626.0 182.4,628.6 183.9,631.1 185.4,633.7 186.9,636.2 188.4,638.8 190.0,641.4 191.6,644.0 193.1,646.7 194.6,649.4 196.1,652.2 197.6,655.0 199.0,658.0 200.2,660.7 201.4,663.6 202.7,666.8 203.9,670.0 205.2,673.3 206.4,676.7 207.6,680.0 208.8,683.2 209.9,686.3 210.9,689.3 211.8,691.9 212.7,694.3 213.4,696.4 214.0,698.0 434.0,698.0 433.9,696.3 433.8,694.3 433.7,692.0 433.6,689.4 433.5,686.5 433.4,683.5 433.3,680.2 433.1,676.8 432.9,673.2 432.7,669.6 432.5,665.8 432.3,661.9 432.0,658.0 431.8,655.4 431.6,652.7 431.4,649.9 431.2,647.0 431.0,644.1 430.8,641.1 430.5,638.0 430.3,634.9 430.0,631.7 429.8,628.5 429.5,625.3 429.2,622.0 428.9,618.7 428.6,615.4 428.3,612.2 428.0,608.9 427.7,605.6 427.4,602.4 427.0,599.2 426.7,596.0 426.4,593.0 426.0,589.9 425.6,586.8 425.3,583.6 424.9,580.4 424.5,577.2 424.0,574.0 423.6,570.8 423.2,567.6 422.8,564.4 422.3,561.2 421.9,558.1 421.5,554.9 421.0,551.9 420.6,548.8 420.1,545.8 419.7,542.9 419.3,540.1 418.8,537.3 418.4,534.6 418.0,532.0 417.4,528.2 416.7,524.4 416.0,520.6 415.3,516.9 414.6,513.3 413.9,509.8 413.2,506.5 412.5,503.3 411.9,500.3 411.3,497.5 410.8,495.0 410.3,492.7 409.8,490.7 409.5,489.0 411.7,488.9 414.9,488.7 419.0,489.0 421.8,489.6 425.0,490.5 428.4,491.4 432.0,492.2 435.7,492.6 438.9,492.7 442.3,492.7 445.9,492.6 449.4,492.2 453.0,491.5 456.5,490.5 459.1,489.5 461.6,488.4 464.2,487.1 466.7,485.7 469.3,484.1 471.8,482.2 474.4,480.2 477.0,478.0 479.1,476.0 481.2,473.9 483.3,471.7 485.4,469.3 487.5,466.8 489.6,464.2 491.7,461.5 493.8,458.7 495.9,455.9 498.0,453.0 499.6,450.7 501.3,448.3 502.9,445.9 504.6,443.4 506.3,440.8 507.9,438.2 509.6,435.6 511.2,432.9 512.9,430.2 514.4,427.6 516.0,424.9 517.5,422.3 519.0,419.7 520.6,416.9 522.1,414.1 523.6,411.4 525.0,408.6 526.5,405.9 527.9,403.1 529.3,400.3 530.6,397.5 531.9,394.7 533.2,391.8 534.5,388.9 535.7,386.0 536.9,383.1 538.1,380.1 539.2,377.2 540.3,374.2 541.4,371.3 542.4,368.3 543.4,365.2 544.4,362.1 545.3,359.0 546.2,355.7 547.1,352.4 548.0,349.0 548.7,346.2 549.3,343.2 550.0,340.0 550.6,336.8 551.2,333.6 551.8,330.2 552.4,326.9 553.0,323.6 553.5,320.3 554.0,317.1 554.5,314.0 554.9,311.0 555.3,308.2 555.7,305.5 556.0,303.0 556.5,298.9 556.8,295.4 557.0,292.4 557.1,289.6 557.1,286.9 557.1,284.2 557.0,281.3 557.0,278.0 557.0,275.0 556.9,271.7 556.8,268.2 556.7,264.5 556.6,260.9 556.4,257.5 556.3,254.2 556.2,251.3 556.1,248.9 556.0,247.0 604.8,206.6 566.0,201.0 565.6,199.0 565.1,196.4 564.4,193.2 563.7,189.5 562.9,185.6 562.0,181.5 561.4,178.9 560.8,176.1 560.2,173.2 559.6,170.1 558.9,167.0 558.2,163.8 557.5,160.5 556.7,157.3 555.9,154.1 555.0,151.0 554.1,147.9 553.2,144.8 552.2,141.7 551.2,138.6 550.2,135.5 549.1,132.4 548.0,129.3 546.9,126.2 545.7,123.1 544.5,120.0 543.4,117.2 542.2,114.5 541.0,111.7 539.8,108.9 538.5,106.2 537.3,103.5 536.0,100.7 534.7,98.0 533.3,95.2 532.0,92.5 530.7,89.7 529.4,86.9 528.1,84.1 526.7,81.3 525.4,78.6 524.1,75.8 522.7,73.0 521.3,70.2 519.9,67.4 518.5,64.6 517.0,61.8 515.5,59.0 513.9,56.2 512.3,53.3 510.5,50.3 508.8,47.3 507.0,44.3 505.2,41.4 503.5,38.6 501.7,35.8 500.1,33.2 498.5,30.8 497.0,28.6 494.5,25.1 492.2,22.2 490.1,19.7 488.1,17.5 486.0,15.3 484.0,13.0 481.7,10.7 479.5,9.0 477.3,7.2 474.9,4.4 472.0,0.0 470.9,-2.0 469.6,-4.5 468.2,-7.2 466.7,-10.2 465.2,-13.4 463.6,-16.7 462.0,-20.1 460.5,-23.5 458.9,-26.8 457.5,-30.0 456.1,-33.1 454.8,-35.8 453.7,-38.3 452.8,-40.4 452.0,-42.0" fill="none" stroke="#30f830" stroke-width="1.6"/>
<path d="M477.0 374.0 L558.0 398.0" stroke="#606060" stroke-width="1"/>
<g transform="translate(40,600)">
<path d="M0 0 L0 -23" stroke="#2040ff" stroke-width="1.2"/>
<path d="M0 0 L-24 3" stroke="#e02020" stroke-width="1.2"/>
<path d="M0 0 L18 6" stroke="#20d020" stroke-width="1.2"/>
</g>
</svg>

<div class="a" style="left:0;top:703px;width:1280px;height:15px;background:#3a393b"></div>
<div class="a" style="right:20px;top:704.5px;font-size:7.83px;line-height:15px;color:#e4e4e4;white-space:nowrap">C:/Program Files/Steam/SteamApps/common/Skyrim/Data/meshes/actors/character/FaceGenData/FaceGeom/S_minkRe.esp/00000D6A.NIF</div>
<div class="a" style="left:1267px;top:706px;width:10px;height:8px;background:#d8c088"></div>
<div class="a" style="left:0;top:718px;width:1280px;height:2px;background:#5c6a78"></div><div class="a" style="left:80px;top:718.5px;width:22px;height:1.5px;background:#c8d0d8"></div><div class="a" style="left:143px;top:718.5px;width:28px;height:1.5px;background:#c8d0d8"></div><div class="a" style="left:295px;top:718.5px;width:45px;height:1.5px;background:#c8d0d8"></div><div class="a" style="left:418px;top:718.5px;width:40px;height:1.5px;background:#c8d0d8"></div>

</body></html>
